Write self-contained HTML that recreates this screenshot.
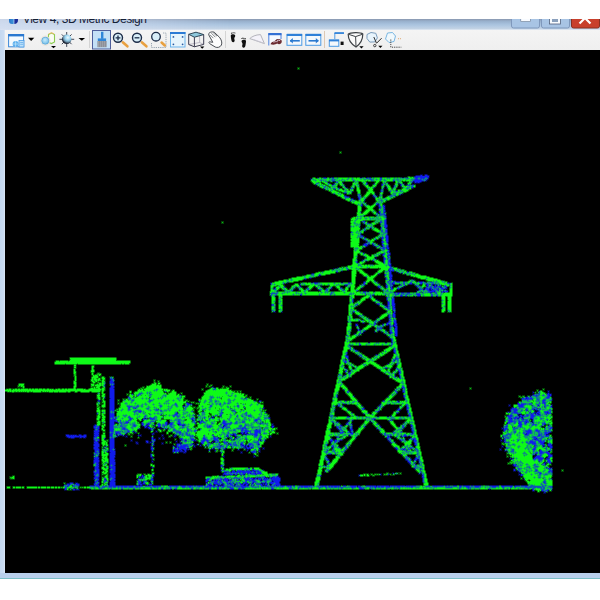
<!DOCTYPE html>
<html><head><meta charset="utf-8">
<style>
*{margin:0;padding:0;box-sizing:border-box}
html,body{width:600px;height:600px;overflow:hidden;background:#fff;font-family:"Liberation Sans",sans-serif}
#title{position:absolute;left:0;top:18.5px;width:600px;height:11.5px;background:linear-gradient(90deg,rgba(214,224,242,.85) 0,rgba(214,224,242,.55) 120px,rgba(214,224,242,0) 230px),linear-gradient(#8a98b0,#98b0cc 20%,#a6c0dc 45%,#b2c9e2 65%,#c2d2e4 88%,#e4ecf6);overflow:hidden}
#title .t{position:absolute;left:22.8px;top:-5.1px;font-size:12px;letter-spacing:-0.45px;line-height:13px;color:#142036;white-space:nowrap}
#ticon{position:absolute;left:8.5px;top:18.5px;width:9px;height:5.2px;background:linear-gradient(90deg,#2a78c8 0,#3a90d8 45%,#a8c8ec 55%,#1a2c98 65%,#1a2c98 100%);border-radius:0 0 4px 3px}
#tb{position:absolute;left:0;top:30px;width:600px;height:20px;background:linear-gradient(#f4f4f4,#efefef)}
#tbl{position:absolute;left:5px;top:49px;width:595px;height:1px;background:#e4e4e4}
#lb{position:absolute;left:0;top:30px;width:5px;height:548px;background:linear-gradient(90deg,#c4d8f0,#cadcf2 70%,#dce8f6)}
#vp{position:absolute;left:5px;top:50px;width:595px;height:523px;background:#000}
#bb{position:absolute;left:0;top:573px;width:600px;height:5px;background:#b9d0ec}
#bl{position:absolute;left:0;top:578px;width:600px;height:1px;background:#7cc0c8}
#wh{position:absolute;left:0;top:0;width:600px;height:18.5px;background:#fff}
</style></head><body>
<div id="title"><span class="t">View 4, 3D Metric Design</span></div>
<div id="ticon"></div>
<div id="tb"></div>
<div id="lb"></div>
<div id="vp"></div>
<div id="bb"></div><div id="bl"></div>
<svg width="600" height="52" style="position:absolute;left:0;top:0">
<!-- separators -->
<g stroke-width="1">
<line x1="89.5" y1="31" x2="89.5" y2="48" stroke="#d4d4d4"/>
<line x1="225.5" y1="31" x2="225.5" y2="48" stroke="#d4d4d4"/>
<line x1="324.5" y1="31" x2="324.5" y2="48" stroke="#dcc8b4"/>
</g>
<!-- 1 window+globe -->
<g>
<rect x="8.6" y="34.5" width="15" height="12.3" fill="#f4faff" stroke="#3c88d8" stroke-width="1"/>
<rect x="8.1" y="34" width="16" height="2.4" fill="#2a78d0"/>
<rect x="19" y="40.5" width="5" height="6.5" fill="#bfe2fa" stroke="#4a9ce6" stroke-width=".8"/>
<path d="M20.2 42.5h3M20.2 44.3h3" stroke="#4a9ce6" stroke-width=".6"/>
<circle cx="15.6" cy="44" r="3" fill="#5eb0ee"/>
<path d="M13.2 44h4.8M15.6 41.2v5.6" stroke="#d4eefc" stroke-width=".6"/>
</g>
<path d="M28 37.8h6.3l-3.15 3.2z" fill="#000"/>
<!-- 3 spheres -->
<defs>
<radialGradient id="sg" cx="0.62" cy="0.32" r="0.72"><stop offset="0" stop-color="#eefaff"/><stop offset="0.4" stop-color="#9ad4f0"/><stop offset="0.65" stop-color="#6a90a8"/><stop offset="0.85" stop-color="#202838"/></radialGradient>
<radialGradient id="bg2" cx="0.45" cy="0.4" r="0.6"><stop offset="0" stop-color="#c8ecfc"/><stop offset="1" stop-color="#70bce8"/></radialGradient>
</defs>
<path d="M48.5 34.4l3-1.4 3 1.6v7.4l-3 1.6-3-1.4z" fill="#fafcf4" stroke="#8ccc50" stroke-width="1.1"/>
<path d="M48.6 34l3-1.3 2.6 1.3" stroke="#f0b868" stroke-width="1" fill="none"/>
<circle cx="45.3" cy="40.7" r="4.6" fill="#fdfdfd" stroke="#e8dccc" stroke-width=".8"/>
<circle cx="45.3" cy="40.7" r="3.6" fill="url(#bg2)" stroke="#5aa0d0" stroke-width=".7"/>
<path d="M51 46h5l-2.5 2.3z" fill="#000"/>
<!-- 4 sun -->
<path d="M66.7 32v3.2M66.7 43.3v3.6M59.4 39.3h3.4M70.6 39.3h3.6M61.8 34.4l2 2M69.6 42.2l2 2M71.6 34.4l-2 2M63.8 42.2l-2 2" stroke="#404858" stroke-width="1"/>
<circle cx="66.7" cy="39.3" r="4.8" fill="url(#sg)"/>
<path d="M78.5 38h6.6l-3.3 2.7z" fill="#000"/>
<!-- brush button -->
<rect x="92.5" y="30.5" width="18" height="18.5" fill="#c4e0f6" stroke="#4e5e9a"/>
<rect x="101" y="31.8" width="2.4" height="7" fill="#2f86d8"/>
<path d="M97.8 38.4h8.3v2.6h-8.3z" fill="#2f86d8"/>
<path d="M97.4 41h9.2v6.2h-9.2z" fill="#8e9098"/>
<path d="M98.5 41v6M100.5 41v6M102.5 41v6M104.5 41v6" stroke="#a8acb4" stroke-width=".6"/>
<!-- zoom in -->
<path d="M122.8 42.3l4.6 4" stroke="#e8a040" stroke-width="2.6" stroke-linecap="round"/>
<circle cx="118" cy="37.8" r="4.5" fill="#d8eef8" stroke="#1c2c48" stroke-width="1.4"/>
<path d="M115.6 37.8h4.8M118 35.4v4.8" stroke="#1c2c48" stroke-width="1.3"/>
<!-- zoom out -->
<path d="M141.8 42.3l4.6 4" stroke="#e8a040" stroke-width="2.6" stroke-linecap="round"/>
<circle cx="137" cy="37.8" r="4.5" fill="#d8eef8" stroke="#1c2c48" stroke-width="1.4"/>
<path d="M134.6 37.8h4.8" stroke="#1c2c48" stroke-width="1.3"/>
<!-- zoom window -->
<path d="M151.5 43v4.5h14.5v-14.5h-3" fill="none" stroke="#8090a0" stroke-width=".8" stroke-dasharray="1.2 1"/>
<path d="M161.6 42.6l3.2 2.8" stroke="#e8a040" stroke-width="2.6" stroke-linecap="round"/>
<circle cx="156" cy="36.7" r="4.3" fill="#d8eef8" stroke="#1c2c48" stroke-width="1.3"/>
<!-- fit view -->
<rect x="170.5" y="32.5" width="14.5" height="14.5" fill="#e6f4fc" stroke="#6cb4ec"/>
<rect x="170" y="32" width="15.5" height="2" fill="#2b7ad4"/>
<g fill="#2a5aa0"><circle cx="173.4" cy="36.9" r=".9"/><circle cx="182.6" cy="36.9" r=".9"/><circle cx="173.4" cy="44.3" r=".9"/><circle cx="182.6" cy="44.3" r=".9"/></g>
<!-- cube -->
<path d="M199.6 32.3v10.2l-10.9 2M199.6 42.5l4.1 1.9" fill="none" stroke="#a8a4b4" stroke-width=".7"/>
<path d="M188.7 34.3L196 32.2L203.7 34.6L194.4 37.2z" fill="#8ec8dc" stroke="#304858" stroke-width="1"/>
<path d="M188.7 34.3v10.2l5.7 2.3l9.3-2.4v-9.8M194.4 37.2v9.6" fill="none" stroke="#3c3c50" stroke-width="1"/>
<path d="M200 46.6h4.4l-2.2 2.2z" fill="#000"/>
<!-- hand -->
<path d="M208.6 34.6C208.4 32.6 211.5 31.3 214.2 32.2L219.4 37.2C221.4 39.6 222.4 42.6 221.4 45C220.2 47.4 217.2 48 215.2 47L210 43.8C208.4 42.8 208.6 41.6 210.2 41.9L212.8 42.3z" fill="#fdfdfd" stroke="#4a4e54" stroke-width="1"/>
<path d="M209.8 34.6l3.6 3.6M211.4 33.2l4 4M213.2 32.6l3.8 3.6" stroke="#606468" stroke-width=".8"/>
<!-- footprints -->
<g fill="#101010">
<path id="ft" d="M230.8 35.6C230.8 34.6 232.4 34.2 234 34.4C235.3 34.6 235.4 35.6 235.1 36.4C234.5 37.3 234.1 38.1 234.4 39.3C234.9 40.6 234.8 42 233.4 42.2C232 42.3 231.6 41.1 231.3 39.7C231 38.4 230.8 36.7 230.8 35.6z"/>
<g fill="#505050"><circle cx="231.6" cy="33.3" r=".7"/><circle cx="232.9" cy="32.8" r=".65"/><circle cx="234" cy="32.7" r=".6"/><circle cx="235" cy="33" r=".55"/></g>
<g transform="translate(476.8 5.5) scale(-1 1)">
<path d="M230.8 35.6C230.8 34.6 232.4 34.2 234 34.4C235.3 34.6 235.4 35.6 235.1 36.4C234.5 37.3 234.1 38.1 234.4 39.3C234.9 40.6 234.8 42 233.4 42.2C232 42.3 231.6 41.1 231.3 39.7C231 38.4 230.8 36.7 230.8 35.6z"/>
<g fill="#303030"><circle cx="231.6" cy="33.3" r=".7"/><circle cx="232.9" cy="32.8" r=".65"/><circle cx="234" cy="32.7" r=".6"/><circle cx="235" cy="33" r=".55"/></g>
</g>
</g>
<!-- paper plane -->
<path d="M249.8 38.6C252 36.5 255.5 34.8 260.5 34.6L264.4 43.6z" fill="#f4f2fa" stroke="#b4b4bc" stroke-width="1"/>
<path d="M252.6 39.2L264 43.2" stroke="#c8c8d0" stroke-width=".8"/>
<!-- window + car -->
<path d="M268.8 45.5v-11.5h12.2v5" fill="#f6f9ff" stroke="#5a8ae0" stroke-width="1.1"/>
<rect x="268.3" y="33" width="13.2" height="2.2" fill="#3470d4"/>
<path d="M270.5 44.2c.6-1.8 2-2.6 3.6-2.6l2.2-2.2c1.6-.6 3.6-.3 5 .6c.8.9.6 2.6-.4 3.6c-1.3.9-2.8.6-3.6 0c-1.8 1-4.2 1.4-6.8.6z" fill="#6a2a30"/>
<path d="M273.5 42.3c1.2-.6 2.8-.9 4.2-.6M277 40.4c1-.3 2.2-.2 3.2.3" stroke="#f0e8f4" stroke-width=".8" fill="none"/>
<!-- left arrow window -->
<rect x="287" y="34.5" width="14.8" height="10.8" fill="#f4f8fc" stroke="#4c9ae4" stroke-width="1"/>
<rect x="286.8" y="33.8" width="15.3" height="2.2" fill="#2f80d8"/>
<path d="M290 40.8h9.8" stroke="#2a7ad0" stroke-width="1.6"/>
<path d="M289.8 40.8l3-2.8v5.6z" fill="#2a7ad0"/>
<!-- right arrow window -->
<rect x="305.8" y="34.5" width="15" height="10.8" fill="#f4f8fc" stroke="#4c9ae4" stroke-width="1"/>
<rect x="305.5" y="33.8" width="15.6" height="2.2" fill="#2f80d8"/>
<path d="M308.5 40.8h9.8" stroke="#2a7ad0" stroke-width="1.6"/>
<path d="M318.8 40.8l-3-2.8v5.6z" fill="#2a7ad0"/>
<!-- two windows -->
<path d="M334.8 39v-6h9" fill="none" stroke="#4c9ae4" stroke-width="1"/>
<rect x="334.5" y="32.3" width="9.5" height="1.6" fill="#2f80d8"/>
<rect x="329.3" y="40" width="9.5" height="6.3" fill="#f4f8fc" stroke="#4c9ae4"/>
<rect x="329" y="39.6" width="10" height="1.8" fill="#2f80d8"/>
<rect x="340.6" y="41.6" width="3" height="3.4" fill="#101010"/>
<!-- cone/shield -->
<path d="M348.2 34.2C350.5 32.3 360.5 32 362.8 34C362.8 39.5 359.5 44.5 356 47C352 44.5 348.2 39.5 348.2 34.2z" fill="#fbfbfb" stroke="#3e4246" stroke-width="1.2"/>
<path d="M355.6 36.6L356 46.6M355.6 36.6L348.8 34.4M355.6 36.6L362.4 34.3" stroke="#3e4246" stroke-width="1"/>
<path d="M359.3 46.2h4.3l-2.15 2.2z" fill="#000"/>
<!-- hex + scissors -->
<path d="M367 34.5l4-2 4.8.8 1.6 4.6-2.6 4-5 .2-2.8-3.6z" fill="#e8f4fc" stroke="#7a9cbc" stroke-width="1"/>
<path d="M373.8 37l2.6 6M381.6 38.2l-5.2 5.2" stroke="#2c2c2c" stroke-width="1"/>
<circle cx="374.8" cy="45.6" r="1.2" fill="none" stroke="#2c2c2c" stroke-width=".9"/>
<path d="M378.3 45.8h4.2l-2.1 2.1z" fill="#000"/>
<!-- hex dotted -->
<path d="M387.5 33l5-0.5 3 3.5-1.5 5.5-5 1-3.5-3.5z" fill="#f0f8fc" stroke="#6cb0e0" stroke-width=".9"/>
<path d="M390.8 39.5v7.7h10.5" fill="none" stroke="#404040" stroke-width="1" stroke-dasharray="1.2 1"/>
<circle cx="398.5" cy="38.7" r=".6" fill="#e0b080"/><circle cx="400.5" cy="38.7" r=".6" fill="#e0b080"/>
<!-- window buttons -->
<rect x="511.5" y="15.5" width="28" height="12.5" rx="2" fill="#a8c4e4" stroke="#7f98bc"/>
<rect x="520.8" y="17" width="9.5" height="4.5" fill="#f8fbff" stroke="#6a7a90" stroke-width=".6"/>
<rect x="541.5" y="15.5" width="28" height="12.5" rx="2" fill="#a8c4e4" stroke="#7f98bc"/>
<rect x="549.5" y="16" width="11" height="8" fill="#f8fbff" stroke="#50607a" stroke-width=".8"/>
<rect x="552" y="19" width="6" height="3" fill="#8aa0bc"/>
<rect x="571.5" y="15.5" width="28" height="12.5" rx="2" fill="#c8402c" stroke="#8a3020"/>
<path d="M579.5 12.5l11 11M590.5 12.5l-11 11" stroke="#fff" stroke-width="2.2" fill="none"/>
</svg>

<div id="wh"></div>
<svg width="600" height="600" style="position:absolute;left:0;top:0" shape-rendering="crispEdges"><g transform="translate(0 .5)" stroke-width="1" fill="none"><path stroke="#04073b" d="M0 0m420 174h3m1 0h1m2 0h1m-13 1h1m7 0h1m5 0h1m-1 1h1m-113 1h2m7 0h1m3 0h1m29 0h2m4 0h1m35 0h2m25 0h1m-120 1h2m-2 1h1m117 0h1m-2 1h1m-34 1h1m30 0h2m-99 1h2m13 0h1m23 0h1m20 0h1m24 0h1m7 0h1m-89 1h1m9 0h1m29 0h1m7 0h1m6 0h1m14 0h2m7 0h1m1 0h6m-88 1h1m66 0h1m4 0h1m1 0h1m-92 1h2m28 0h1m47 0h1m-49 1h1m39 0h1m7 0h1m6 0h1m-63 1h2m6 0h2m36 0h1m1 0h1m5 0h1m-19 1h1m9 0h1m1 0h1m26 0h1m-91 1h2m55 0h1m-29 3h1m36 0h1m-15 1h1m-43 1h2m40 0h1m25 0h2m-57 1h1m25 0h1m3 0h2m21 0h2m-52 1h1m7 0h1m14 0h1m4 0h1m-21 1h1m15 0h1m9 0h2m-32 1h1m20 0h1m-21 1h2m9 0h1m-1 1h1m17 4h2m-9 1h2m7 0h1m-24 1h1m22 0h1m-8 1h1m6 0h1m-8 1h1m6 0h1m-1 1h1m-8 2h1m-18 1h1m15 0h2m7 2h1m-1 1h1m-26 7h1m6 0h1m10 1h1m-17 1h2m22 0h1m-28 2h1m3 1h1m15 0h1m6 0h1m-18 1h1m16 0h1m-27 1h1m2 2h2m-16 1h1m27 1h1m-18 1h1m1 1h1m24 0h1m-23 2h1m-7 1h1m2 2h2m10 0h2m4 0h1m-17 1h1m-1 1h2m21 0h1m-26 1h1m17 0h1m6 0h1m-27 1h1m15 0h2m1 0h1m-14 1h1m3 0h1m8 0h1m-15 1h1m5 0h2m0 1h1m13 0h1m-27 1h1m25 0h1m-11 1h1m9 0h1m-29 2h1m1 1h2m25 0h1m-10 2h1m8 1h1m-9 1h1m-19 1h1m10 0h2m-2 1h2m-20 1h1m4 0h2m-3 1h1m4 1h1m5 0h2m-16 1h1m32 1h1m-1 1h1m-1 1h1m-55 2h2m-6 1h2m12 2h2m-8 1h2m65 0h1m-73 1h1m59 0h2m-87 1h1m86 0h2m1 0h1m-24 1h2m12 0h1m12 0h1m-88 2h2m45 1h1m26 0h1m-84 1h1m1 0h1m80 0h1m-89 1h1m1 0h1m85 0h1m20 0h2m-40 1h1m17 0h3m-33 1h1m53 0h1m6 0h2m-156 1h2m39 0h2m28 0h2m35 0h1m70 0h2m-165 1h2m11 0h1m85 0h1m-116 1h1m13 0h1m14 0h1m85 0h1m26 0h2m-70 1h1m20 0h1m19 0h1m7 0h1m39 0h1m-149 1h1m15 0h1m19 0h1m63 0h1m7 0h1m10 0h2m9 0h1m-142 1h1m31 0h1m25 0h1m9 0h1m34 0h1m7 0h1m16 0h2m12 0h1m30 0h1m-151 1h1m18 0h1m8 0h1m6 0h1m28 0h2m15 0h2m20 0h2m22 0h1m22 0h1m-154 1h1m3 0h1m31 0h2m65 0h1m1 0h1m18 0h1m27 0h2m-155 1h1m4 0h1m19 0h1m97 0h2m30 0h1m-82 1h2m5 0h1m41 0h1m31 0h1m-149 4h1m-31 1h1m4 0h1m138 0h1m5 0h1m15 0h1m-43 1h1m-26 1h1m6 1h2m0 1h2m6 0h1m-34 2h1m20 0h1m20 1h1m-20 1h1m6 0h2m10 0h1m-18 1h1m6 0h2m8 0h1m-1 1h1m-1 1h1m45 1h1m-85 2h2m-84 1h1m6 0h1m-10 1h3m5 0h2m112 1h1m-33 1h1m-6 2h1m18 1h2m-10 1h1m18 0h1m-27 1h1m12 0h1m12 0h1m-9 1h1m7 0h1m-42 1h1m11 0h1m19 0h2m-30 1h1m26 0h1m7 0h1m-32 1h3m4 0h3m17 0h2m13 0h1m-40 1h1m38 0h1m-40 1h1m29 0h1m8 0h1m-43 1h1m3 0h1m-1 1h1m34 0h1m-35 2h2m-5 1h1m28 0h1m-22 1h1m8 0h1m3 0h1m-16 1h1m10 0h2m5 0h2m6 0h1m-36 1h2m6 0h2m20 1h2m9 2h1m1 0h1m-10 1h1m1 2h1m-23 3h2m15 0h2m-27 3h1m-7 3h1m0 1h2m-8 1h1m8 0h1m34 2h1m-47 2h1m27 0h1m1 0h1m-30 1h1m9 1h1m-10 3h1m-1 2h1m37 2h2m7 2h1m-52 2h1m7 0h1m41 0h1m-50 1h2m47 0h1m-17 2h1m-36 1h1m4 0h1m-6 1h1m53 0h1m-1 1h1m-55 1h2m49 0h1m2 0h1m-4 1h1m-8 1h1m-280 2h1m4 0h1m-6 1h1m4 0h1m-6 1h1m4 1h1m-1 1h1m227 0h1m-238 2h1m-1 1h1m8 0h1m-10 1h1m106 0h2m-105 1h1m104 0h2m-102 1h1m228 2h1m5 0h1m189 0h1m7 0h3m-18 1h2m13 0h1m1 0h1m-148 1h1m129 0h1m14 0h1m1 0h1m-418 1h1m264 0h1m134 0h2m16 0h2m-372 1h1m351 0h1m-180 1h2m175 0h2m-405 1h1m226 0h1m32 0h1m137 0h2m24 0h1m-447 1h1m21 0h1m209 0h1m65 0h1m-299 1h1m3 0h1m442 0h1m-149 1h1m147 0h1m-456 1h1m2 0h1m153 0h2m5 0h1m83 0h2m11 0h1m23 0h1m14 0h2m153 0h1m-453 1h1m97 0h1m59 0h1m99 0h1m158 1h1m-328 1h1m189 0h1m-189 1h1m150 0h4m32 0h1m9 0h1m118 0h3m40 0h2m-370 1h2m152 0h1m5 0h1m18 0h1m15 0h1m129 0h1m1 0h1m41 0h1m-216 1h1m170 0h3m41 0h1m-289 1h1m99 0h1m11 0h1m6 0h1m14 0h1m112 0h1m40 0h1m-289 1h1m111 0h1m20 0h1m112 0h1m-176 1h1m12 0h1m47 0h1m-62 1h1m64 0h1m5 0h1m128 0h1m-157 1h1m127 0h3m25 0h2m-271 1h1m85 0h1m15 0h1m9 0h1m-283 1h1m301 0h1m-303 1h1m266 0h2m154 0h1m-164 1h2m32 0h1m-42 1h1m27 0h2m8 0h2m-119 1h1m-1 1h1m-129 1h1m361 0h1m26 0h1m-390 1h1m210 0h1m150 0h1m-363 1h1m24 0h1m30 0h1m138 0h2m8 0h1m4 0h1m17 0h1m17 0h1m142 0h1m-417 1h2m52 0h1m176 0h1m23 0h2m31 0h1m-236 1h1m103 0h2m59 0h1m11 0h1m6 0h1m25 0h1m-285 1h1m178 0h1m59 0h1m7 0h1m3 0h1m6 0h1m-260 1h1m47 0h1m132 0h1m67 0h1m37 0h1m-239 1h2m130 0h1m84 0h1m5 0h1m15 0h1m16 0h2m10 0h1m131 0h1m-386 1h1m2 0h1m204 0h1m15 0h1m28 0h1m90 0h2m41 0h1m-452 1h1m50 0h4m11 0h4m173 0h1m12 0h1m54 0h1m5 0h1m90 0h1m-403 1h1m38 0h2m8 0h2m4 0h1m11 0h1m32 0h1m137 0h1m11 0h1m3 0h1m22 0h2m16 0h1m106 0h2m-410 1h1m56 0h1m4 0h2m181 0h1m9 0h2m3 0h1m24 0h1m-286 1h1m61 0h1m1 0h1m234 0h1m18 0h1m-319 1h1m5 0h1m34 0h1m18 0h5m13 0h1m239 0h1m139 0h1m-459 1h1m5 0h1m34 0h3m14 0h1m2 0h1m83 0h1m1 0h1m308 0h1m-485 1h1m3 0h8m1 0h1m2 0h1m1 0h1m2 0h1m6 0h1m5 0h1m25 0h2m12 0h3m9 0h1m2 0h1m6 0h3m217 0h1m-317 1h1m27 0h1m5 0h1m24 0h4m9 0h1m3 0h1m11 0h1m7 0h1m1 0h1m9 0h1m59 0h1m-169 1h1m27 0h1m5 0h1m18 0h2m2 0h4m1 0h1m11 0h3m19 0h3m9 0h1m2 0h1m57 0h1m34 0h1m1 0h1m77 0h2m39 0h2m16 0h2m-344 1h1m19 0h1m29 0h2m7 0h3m30 0h3m1 0h3m8 0h3m59 0h1m33 0h3m84 0h1m34 0h1m18 0h1m-343 1h3m3 0h1m4 0h3m1 0h3m19 0h1m48 0h2m2 0h1m1 0h1m1 0h1m1 0h1m55 0h1m111 0h1m23 0h1m29 0h1m4 0h1m13 0h1m2 0h2m-305 1h1m24 0h3m25 0h3m1 0h3m14 0h1m153 0h2m70 0h1m2 0h1m91 0h2m1 0h1m-411 1h1m36 0h1m1 0h1m12 0h1m2 0h1m27 0h2m1 0h2m84 0h1m76 0h1m44 0h1m11 0h1m100 0h1m1 0h2m-411 1h1m5 0h1m30 0h3m2 0h3m7 0h1m3 0h2m4 0h1m19 0h1m1 0h1m1 0h1m14 0h3m15 0h3m50 0h1m63 0h1m58 0h1m5 0h2m4 0h1m99 0h4m-411 1h1m41 0h1m2 0h1m6 0h1m3 0h1m4 0h1m6 0h3m11 0h3m1 0h1m31 0h1m1 0h1m116 0h1m7 0h2m49 0h1m5 0h1m17 0h1m-321 1h1m5 0h1m35 0h1m2 0h1m7 0h5m3 0h1m6 0h1m1 0h1m12 0h1m16 0h2m1 0h2m2 0h1m129 0h1m59 0h1m153 0h1m2 0h1m-412 1h3m15 0h1m6 0h3m30 0h1m1 0h1m3 0h2m350 0h1m-403 1h1m3 0h1m17 0h2m21 0h3m1 0h1m1 0h1m125 0h1m16 0h1m69 0h1m86 0h2m49 0h1m-460 1h1m56 0h1m2 0h1m18 0h1m2 0h1m17 0h1m1 0h1m3 0h3m46 0h1m90 0h1m73 0h1m87 0h1m1 0h1m-405 1h1m50 0h1m42 0h3m66 0h3m75 0h2m159 0h3m1 0h1m-407 1h1m15 0h1m34 0h1m75 0h1m33 0h1m1 0h1m1 0h1m129 0h1m104 0h3m50 0h1m-460 1h1m21 0h1m34 0h1m57 0h1m2 0h4m4 0h1m5 0h1m11 0h1m1 0h1m6 0h1m2 0h1m10 0h1m1 0h3m82 0h1m47 0h1m103 0h1m1 0h1m-387 1h1m67 0h1m3 0h2m21 0h1m3 0h1m22 0h3m6 0h1m1 0h1m11 0h1m135 0h1m102 0h3m2 0h1m-397 1h1m105 0h1m25 0h3m3 0h2m12 0h1m84 0h1m158 0h3m42 0h1m-441 1h1m62 0h1m6 0h4m3 0h1m33 0h1m19 0h1m1 0h1m16 0h2m-111 1h2m23 0h2m6 0h3m34 0h1m19 0h3m9 0h1m-160 1h1m5 0h1m231 0h1m203 0h1m16 0h1m-460 1h1m5 0h1m15 0h1m108 0h1m28 0h2m146 0h1m131 0h3m-421 1h1m108 0h1m28 0h1m1 0h1m71 0h1m80 0h2m124 0h1m-442 1h1m5 0h1m15 0h1m34 0h1m2 0h1m69 0h2m28 0h3m71 0h1m205 0h1m12 0h1m-454 1h1m5 0h1m51 0h1m176 0h1m82 0h1m2 0h1m94 0h1m1 0h1m33 0h1m-453 1h1m5 0h1m15 0h1m35 0h1m177 0h1m83 0h1m95 0h2m-396 1h1m35 0h2m176 0h1m75 0h1m7 0h1m3 0h1m-303 1h1m35 0h1m1 0h1m70 0h1m193 0h1m-320 1h1m51 0h3m253 0h1m10 0h1m-320 1h1m308 0h1m9 0h1m132 0h1m-453 1h1m309 0h1m102 0h1m-414 1h1m15 0h1m209 0h1m186 0h1m-414 1h1m413 0h1m-415 1h1m51 0h1m72 0h1m23 0h2m300 0h3m-454 1h1m9 0h1m303 0h1m99 0h2m37 0h1m-333 1h1m41 0h2m150 0h1m-322 1h1m126 0h1m-1 1h1m103 0h1m4 0h1m183 0h3m1 0h1m-403 1h1m208 0h2m66 0h2m124 0h1m-426 1h1m15 0h1m5 0h1m106 0h1m157 0h2m10 0h1m25 0h1m99 0h3m-428 1h1m15 0h1m32 0h1m11 0h1m67 0h1m135 0h2m21 0h1m36 0h4m96 0h1m-426 1h1m60 0h1m64 0h2m3 0h1m53 0h1m42 0h1m36 0h1m21 0h2m6 0h1m32 0h1m96 0h2m-366 1h1m124 0h1m41 0h1m36 0h2m61 0h1m98 0h2m-429 1h1m5 0h1m180 0h1m140 0h1m-329 1h1m5 0h1m15 0h1m37 0h1m369 0h1m28 0h1m-460 1h1m5 0h1m105 0h1m317 0h1m28 0h1m-454 1h1m9 0h1m-11 1h1m9 0h1m5 0h1m164 0h1m-212 1h1m3 0h1m1 0h3m64 0h1m7 0h1m54 0h1m216 0h1m-357 1h1m7 0h1m4 0h1m13 0h1m14 0h1m96 0h1m74 0h1m-188 1h1m5 0h1m8 0h1m161 0h1m-208 1h1m25 0h1m78 0h1m144 0h1m26 0h1m16 0h1m2 0h1m15 0h1m12 0h1m15 0h1m108 0h1m-436 4h1m9 0h2m80 0h1m2 0h1m195 0h1m117 0h1m1 0h1m61 0h1m-489 1h3m5 0h1m2 0h5m472 0h1m-21 1h3m6 0h1m6 0h1m-6 1h1m-1 1h3"/><path stroke="#080e76" d="M0 0m425 174h2m-11 1h4m2 0h1m1 0h1m3 0h1m-15 1h1m-92 1h3m6 0h2m33 0h1m1 0h2m9 0h2m46 1h1m-2 1h1m-2 1h1m-94 1h2m58 0h1m19 0h1m8 0h2m-12 1h1m1 0h1m5 0h1m-54 1h1m-35 1h1m47 0h1m18 0h1m11 0h2m-33 1h1m18 0h1m11 3h1m-33 2h1m15 0h1m-17 1h1m-37 2h2m-1 2h1m1 1h2m24 0h1m0 1h1m-24 1h2m5 0h1m-1 1h1m3 5h1m14 0h2m-17 1h1m15 0h1m5 0h1m-7 1h1m6 4h1m-1 1h1m-7 2h1m6 3h1m-1 1h1m-1 2h1m-1 1h1m-1 1h1m-1 1h1m-1 1h1m0 2h1m-1 1h1m-8 2h1m5 0h1m0 1h1m-1 1h1m-1 1h1m-1 1h1m-1 2h1m-26 1h1m25 1h1m-24 1h1m22 0h1m-8 1h1m6 0h1m-8 1h1m6 0h1m-1 1h1m-23 1h1m14 0h1m6 0h1m-8 1h1m-18 1h1m-2 1h1m4 0h2m2 0h1m-6 1h1m5 0h1m14 0h1m-23 1h1m15 0h1m5 0h1m-1 3h1m0 1h1m-1 1h1m-1 1h1m0 1h1m-9 1h1m7 0h1m-9 1h1m0 2h1m-1 1h1m-1 1h1m6 0h1m-29 1h1m20 0h1m6 0h1m-34 1h1m25 0h1m6 0h1m-34 1h1m25 0h1m6 0h1m0 4h1m-1 5h3m13 0h1m-71 1h1m53 0h1m-80 1h2m77 0h1m-8 1h1m-66 1h2m63 0h1m7 0h1m-1 1h1m-83 2h1m74 0h1m-81 1h1m79 0h1m-22 2h1m31 0h4m3 0h2m14 0h4m-109 1h4m30 0h2m13 0h1m84 0h1m-179 1h1m122 1h2m14 0h3m8 0h2m11 0h1m-134 1h1m44 0h2m79 0h1m7 0h1m1 0h1m-137 1h1m91 0h1m23 0h1m-76 1h1m36 0h1m13 0h1m-119 1h1m56 0h1m66 1h1m24 0h2m4 0h2m13 0h1m-126 1h1m110 0h1m16 0h1m-85 1h3m28 1h2m1 0h3m1 0h3m3 0h3m-109 3h1m71 0h1m26 1h3m2 0h2m10 0h3m11 0h2m4 0h1m-52 1h1m-1 1h1m7 0h1m-42 1h1m32 0h1m7 0h1m-42 1h1m40 0h1m-42 1h1m33 0h1m6 0h1m-8 1h1m6 0h1m-8 1h1m-117 1h1m105 0h1m9 0h1m-117 1h1m115 0h1m-2 1h2m7 2h1m-1 1h1m-3 2h1m1 0h1m-43 1h1m39 0h1m1 0h1m-1 2h1m-8 1h1m6 0h1m-8 1h1m6 0h1m-8 1h1m6 0h1m0 3h1m-9 1h1m7 0h1m-10 1h1m8 0h1m-11 1h1m-32 1h1m1 0h1m24 0h1m5 0h1m-34 1h1m30 0h2m1 0h1m3 0h1m-5 1h1m3 0h2m2 0h1m-9 1h1m7 0h1m-9 1h1m7 0h1m-41 1h1m1 0h1m37 0h1m-9 1h1m7 0h1m-34 1h1m24 0h1m7 0h1m-1 1h1m-9 1h1m7 0h1m-1 1h1m-1 1h1m-2 1h1m-6 4h1m-1 1h1m-1 1h1m-33 3h1m33 4h1m-37 1h1m35 0h1m-1 1h1m-47 1h1m-1 1h1m28 1h1m-30 1h1m0 1h1m-1 1h1m-1 1h1m0 2h1m46 4h1m-11 4h1m11 3h1m0 4h1m-5 1h1m3 0h1m-1 1h1m-291 4h1m-1 1h1m-1 1h1m4 0h1m-1 1h1m-5 2h1m3 0h1m-1 1h1m-6 1h1m292 0h1m-294 1h1m4 0h1m-6 1h1m4 0h1m287 0h1m-294 1h1m4 0h1m287 0h1m-294 1h1m4 0h1m282 0h1m5 0h1m144 0h1m-440 1h1m4 0h1m432 0h1m1 0h1m-441 1h1m4 0h1m418 0h1m17 0h1m-443 1h1m4 0h1m222 0h1m65 0h1m147 0h1m-443 1h1m4 0h1m222 0h1m65 0h1m126 0h1m-422 1h1m4 0h1m-1 1h1m289 0h1m-296 1h1m4 0h1m406 0h1m-413 1h1m4 0h1m144 0h2m122 0h1m-275 1h1m4 0h1m283 0h1m-290 1h1m4 0h1m72 0h1m-79 1h1m4 0h1m74 0h1m327 0h1m-409 1h1m4 0h1m265 0h1m-272 1h1m4 0h1m264 0h1m-271 1h1m4 0h1m223 0h1m67 0h1m-298 1h1m4 0h1m291 0h1m105 0h1m-404 1h1m4 0h1m249 0h1m33 0h1m7 0h1m104 0h1m-403 1h1m4 0h1m282 0h1m8 0h1m103 0h1m23 0h1m-426 1h1m289 0h1m7 0h1m102 0h1m25 0h2m-429 1h1m268 0h1m28 0h1m102 0h1m26 0h1m-429 1h1m297 0h1m127 0h2m-428 1h1m4 0h1m282 0h1m137 0h1m-427 1h1m4 0h1m403 0h1m1 0h2m-413 1h1m4 0h1m293 0h1m98 0h1m10 0h2m2 0h2m-415 1h1m237 0h2m170 0h1m-411 1h1m102 0h2m55 0h1m252 0h1m-414 1h1m35 0h1m-37 1h1m264 0h2m156 0h1m-424 1h1m238 0h1m3 0h1m179 0h1m-424 1h1m89 0h1m148 0h1m183 0h1m-424 1h1m4 0h1m2 0h1m23 0h1m25 0h1m31 0h1m147 0h1m184 0h1m-424 1h1m4 0h1m26 0h1m25 0h1m1 0h1m176 0h1m160 0h1m-413 1h1m13 0h1m31 0h1m25 0h1m10 0h1m366 0h1m-452 1h1m14 0h1m32 0h1m129 0h2m67 0h1m68 0h1m137 0h1m-456 1h1m5 0h1m9 0h1m37 0h2m74 0h1m47 0h1m80 0h1m27 0h1m-288 1h1m5 0h1m9 0h1m34 0h1m1 0h2m10 0h2m113 0h1m62 0h1m15 0h1m199 0h1m-454 1h1m9 0h1m38 0h1m188 0h1m14 0h1m23 0h1m34 0h1m91 0h1m48 0h1m-459 1h1m14 0h1m40 0h1m187 0h1m72 0h1m91 0h1m-405 1h1m9 0h1m240 0h1m60 0h1m91 0h1m-405 1h1m9 0h1m23 0h1m215 0h2m-107 1h1m105 0h1m61 0h1m137 0h1m-442 1h1m16 0h1m25 0h1m88 0h1m1 0h2m2 0h1m300 0h1m-483 1h3m10 0h2m3 0h2m23 0h1m6 0h1m36 0h1m79 0h1m8 0h2m1 0h1m300 0h3m-472 1h2m3 0h1m3 0h1m22 0h1m7 0h1m1 0h4m16 0h1m34 0h1m1 0h1m55 0h1m1 0h1m114 0h1m-284 1h1m19 0h1m22 0h1m7 0h1m57 0h1m59 0h1m165 0h1m3 0h2m-340 1h1m7 0h5m2 0h1m2 0h1m7 0h1m57 0h1m1 0h1m182 0h1m53 0h1m-320 1h3m19 0h1m15 0h1m4 0h1m36 0h1m1 0h1m-61 1h1m5 0h1m9 0h1m4 0h1m36 0h1m3 0h1m176 0h1m2 0h1m51 0h1m-289 1h1m9 0h1m4 0h1m31 0h2m7 0h1m38 0h1m18 0h1m46 0h1m73 0h1m5 0h2m46 0h1m11 0h1m12 0h1m-316 1h1m10 0h1m4 0h1m33 0h1m2 0h1m178 0h1m8 0h1m49 0h1m23 0h1m-316 1h1m10 0h1m4 0h1m22 0h1m8 0h1m1 0h1m2 0h1m238 0h1m113 0h1m39 0h1m-436 1h1m4 0h1m21 0h1m40 0h5m19 0h1m212 0h1m-322 1h1m5 0h1m9 0h1m4 0h1m61 0h1m150 0h1m86 0h1m132 0h1m-455 1h1m5 0h1m9 0h1m4 0h1m61 0h1m17 0h1m50 0h1m2 0h1m166 0h1m-317 1h1m9 0h1m4 0h1m59 0h1m1 0h1m68 0h1m1 0h1m295 0h1m4 0h1m3 0h1m-460 1h1m4 0h1m10 0h1m4 0h1m60 0h2m68 0h1m86 0h1m219 0h1m-460 1h1m15 0h1m4 0h1m72 0h2m24 0h1m11 0h1m20 0h1m12 0h1m72 0h1m62 0h1m-297 1h1m9 0h1m62 0h1m9 0h1m4 0h1m36 0h1m22 0h2m147 0h1m-303 1h1m4 0h1m9 0h1m41 0h1m1 0h1m18 0h1m1 0h1m7 0h1m3 0h1m21 0h1m50 0h1m-166 1h1m4 0h1m9 0h1m5 0h1m56 0h1m6 0h1m3 0h2m1 0h1m361 0h1m-450 1h1m15 0h1m67 0h1m1 0h1m65 0h1m-143 1h1m5 0h1m-7 1h1m5 0h1m34 0h1m177 0h3m220 0h1m-443 1h1m40 0h1m385 0h1m15 0h1m-455 1h1m10 0h1m40 0h1m175 0h1m208 0h1m16 0h1m-444 1h1m41 0h2m262 0h1m118 0h1m12 0h1m-439 1h1m4 0h1m418 0h1m-425 1h1m218 0h1m76 0h1m5 0h1m2 0h1m2 0h2m-326 1h1m5 0h1m9 0h1m296 0h1m9 0h1m1 0h1m-326 1h1m5 0h1m9 0h1m297 0h1m-315 1h1m15 0h1m5 0h1m213 0h1m78 0h1m135 0h1m-452 1h1m15 0h1m5 0h1m293 0h1m135 0h1m-437 1h1m5 0h1m300 0h1m128 0h1m-437 1h1m110 0h1m292 0h1m-405 1h1m5 0h1m104 0h1m293 0h1m-421 1h1m14 0h1m5 0h1m-22 1h1m20 0h1m298 0h1m-321 1h1m4 0h1m9 0h1m5 0h1m397 0h1m1 0h1m-417 1h1m9 0h1m5 0h1m397 0h1m1 0h1m36 0h1m-460 1h1m5 0h1m9 0h1m5 0h1m115 0h1m3 0h1m282 0h1m33 0h1m-460 1h1m5 0h1m9 0h1m409 0h1m32 0h1m-454 1h1m123 0h1m196 0h1m-322 1h1m15 0h1m117 0h2m9 0h1m275 0h1m-422 1h1m9 0h1m5 0h1m27 0h1m78 0h2m296 0h1m-427 1h1m4 0h1m9 0h1m5 0h1m25 0h1m11 0h1m124 0h1m-170 1h1m5 0h1m24 0h1m124 0h1m13 0h1m-171 1h1m143 0h2m2 0h1m10 0h1m11 0h1m141 0h1m-329 1h1m20 0h1m21 0h1m15 0h1m107 0h1m18 0h1m141 0h1m-308 1h1m37 0h1m51 0h1m6 0h1m15 0h1m32 0h1m18 0h1m141 0h1m-329 1h1m3 0h1m106 0h1m66 0h1m149 0h1m-353 1h3m21 0h1m4 0h1m9 0h1m5 0h1m25 0h1m64 0h1m72 0h1m-213 1h3m5 0h1m2 0h1m20 0h1m9 0h1m5 0h1m25 0h2m7 0h1m110 0h2m1 0h1m-186 1h1m29 0h1m5 0h1m26 0h3m69 0h1m6 0h2m12 0h1m8 0h2m2 0h1m13 0h1m1 0h1m6 0h1m8 0h1m-202 1h1m10 0h4m5 0h1m16 0h18m1 0h2m2 0h1m2 0h1m2 0h2m1 0h1m3 0h9m8 0h10m1 0h6m1 0h6m1 0h2m1 0h6m1 0h1m9 0h1m3 0h1m1 0h3m11 0h1m9 0h1m3 0h1m14 0h1m6 0h1m10 0h4m1 0h6m1 0h2m4 0h13m8 0h7m1 0h12m3 0h3m4 0h7m1 0h2m6 0h10m1 0h12m1 0h15m1 0h10m13 0h1m2 0h12m1 0h2m1 0h2m3 0h4m2 0h3m1 0h7m1 0h2m1 0h7m8 0h10m2 0h12m2 0h5m1 0h7m-171 1h1m194 0h1m-1 1h1m-489 2h1m10 0h1m45 0h2m10 0h2m26 0h2m7 0h1m4 0h2m14 0h2m16 0h2m6 0h2m11 0h4m4 0h3m1 0h2m27 0h3m15 0h2m68 0h5m125 0h1m-417 1h2m457 0h1m15 0h1m-7 1h2m1 1h1"/><path stroke="#0c15b1" d="M0 0m420 175h1m6 0h1m-13 1h1m12 1h1m-15 4h1m6 0h1m-6 1h2m1 0h1m-74 14h1m11 1h1m20 10h1m4 0h1m-1 2h1m-6 3h1m4 0h1m0 3h1m0 9h1m-1 3h1m-26 8h1m25 0h1m-1 7h1m-23 1h1m16 2h1m5 2h1m1 18h1m-2 6h1m1 3h1m-1 3h1m-1 2h1m-29 4h1m28 0h1m-1 1h1m33 0h1m5 0h1m-47 2h1m40 0h1m6 0h1m1 0h1m3 0h1m-1 1h2m4 0h1m-55 1h1m32 0h1m3 0h2m14 0h2m-28 1h1m12 0h1m10 0h1m-15 1h1m1 0h1m2 1h1m8 0h1m-14 1h2m-38 11h1m-17 1h1m15 1h1m-8 2h1m6 0h1m-1 6h1m-7 9h1m-14 1h1m18 0h1m1 0h1m-3 1h1m1 1h1m-2 2h1m-6 5h1m-1 1h1m4 1h1m-5 5h1m-36 11h1m37 2h1m-49 3h1m47 5h1m-46 12h1m49 0h1m-290 7h1m-1 1h1m2 2h1m-1 3h1m-4 2h1m2 1h1m434 3h1m-16 1h1m15 2h1m-1 1h1m-24 2h1m-417 1h1m415 0h1m-429 2h1m0 1h1m88 2h1m217 2h1m102 0h1m28 0h1m-356 1h1m367 0h1m-289 2h1m274 3h1m-5 1h1m12 0h1m-371 1h1m359 0h2m-1 1h2m-32 1h1m11 1h1m1 0h1m-4 1h1m1 0h1m-378 1h1m366 0h1m5 0h2m3 0h1m7 0h2m-418 1h1m77 0h1m0 1h1m-80 1h2m410 1h1m-332 1h1m-49 1h1m31 0h1m92 0h1m271 0h1m-399 1h2m6 0h1m27 0h2m40 0h1m186 1h1m-318 2h1m55 0h1m351 0h1m-405 1h1m251 0h1m1 0h1m-259 1h1m61 1h1m255 0h1m-319 1h1m3 0h1m36 0h1m215 0h1m197 0h1m-434 1h1m36 0h1m92 0h1m165 0h1m113 0h1m-433 1h1m3 0h1m53 0h1m81 0h1m11 0h1m278 0h2m-458 1h2m1 0h1m1 0h1m1 0h1m4 0h1m1 0h1m54 0h1m1 0h1m21 0h1m12 0h1m370 0h1m-468 1h1m14 0h1m31 0h1m47 0h1m95 0h1m117 0h1m15 0h1m-337 1h1m1 0h1m3 0h1m6 0h1m1 0h1m75 1h1m3 0h1m223 0h1m148 0h1m-384 1h1m26 0h2m78 0h1m152 0h1m121 0h1m-442 1h1m36 0h1m53 0h1m9 0h1m18 0h1m286 0h1m2 0h1m-411 1h1m2 0h1m78 0h1m154 0h1m-196 1h1m13 0h1m29 0h1m31 0h1m201 0h1m-321 1h1m3 0h1m38 0h1m24 0h1m380 0h1m-364 1h1m12 0h1m47 0h1m16 0h1m-59 1h1m41 0h2m299 0h2m6 0h1m-458 1h1m56 0h1m42 0h1m49 0h1m257 0h1m46 0h1m-399 1h1m26 0h1m65 0h1m1 0h1m1 0h1m2 0h1m-154 1h1m120 0h1m25 0h1m3 0h1m13 0h1m-170 1h1m56 0h1m22 0h1m3 0h1m2 0h1m1 0h1m2 0h1m1 0h1m70 0h1m143 0h1m96 0h1m-387 1h1m60 0h1m3 0h2m3 0h1m30 0h1m31 0h1m-141 1h1m72 0h3m76 0h1m-150 1h1m73 0h1m56 0h1m10 0h1m283 1h1m13 1h1m-437 1h1m108 1h1m30 0h1m293 0h1m-451 1h1m15 0h1m37 1h1m262 0h1m94 0h1m35 0h3m-455 1h1m3 0h1m15 0h1m292 1h1m-294 1h1m37 0h1m-55 1h1m446 0h1m-448 1h1m414 1h1m-416 1h1m15 0h1m400 1h1m-418 1h1m53 0h1m-55 1h1m11 0h1m439 0h1m-299 2h2m-3 1h1m2 0h2m-142 1h1m109 0h3m4 0h1m-138 1h1m15 0h1m3 0h1m135 0h1m4 0h1m-146 1h1m112 0h2m18 0h1m144 0h1m130 0h1m-426 1h1m327 0h1m-280 1h1m133 0h1m-184 1h1m3 0h1m42 0h2m129 0h1m149 0h1m-325 1h1m15 0h1m141 0h1m7 0h1m1 0h1m4 0h1m-167 1h1m122 0h1m23 0h2m-156 1h1m116 0h1m44 0h1m11 0h1m-163 1h1m3 0h1m28 0h1m63 0h1m65 0h1m5 0h1m-137 1h1m109 0h1m11 0h1m-189 1h1m16 0h1m45 0h1m81 0h1m6 0h1m15 0h3m4 0h1m10 0h1m1 0h1m4 0h1m8 0h1m-211 1h1m28 0h1m40 0h1m69 0h1m5 0h1m1 0h1m5 0h1m17 0h2m20 0h1m-170 1h1m14 0h1m5 0h1m22 0h1m1 0h2m7 0h2m58 0h3m1 0h1m5 0h1m3 0h1m19 0h1m1 0h1m1 0h1m14 0h1m2 0h2m9 0h1m3 0h1m-63 1h1m157 0h1m12 0h1m-314 3h1m1 0h1m453 0h1m11 3h1"/><path stroke="#101cec" d="M0 0m421 175h1m3 0h2m-11 1h13m-14 1h3m2 0h5m2 0h1m-12 1h1m4 0h1m1 0h1m-9 1h3m2 0h1m-7 1h8m-7 1h6m-6 1h1m2 0h1m-37 2h1m29 3h1m-68 9h1m13 2h1m1 7h1m21 0h1m-5 1h1m3 0h2m-1 2h1m-1 2h1m-6 1h1m4 0h1m-1 3h1m0 6h1m-22 1h1m20 0h1m-6 1h1m4 0h1m-1 1h1m-1 1h1m-1 1h2m-2 1h2m-2 1h1m0 3h1m-1 1h1m-1 4h1m-25 1h1m23 0h2m-6 1h1m3 0h2m-6 1h1m3 0h2m-2 1h2m-2 1h2m-6 1h1m4 0h1m-6 1h1m-19 2h3m15 0h1m-18 1h2m20 1h1m-5 1h1m3 0h1m-5 1h1m3 0h2m-1 3h1m-6 3h1m5 0h1m-2 1h1m-1 2h1m-5 1h1m-1 1h1m4 1h1m-1 1h1m0 3h1m-2 1h1m0 1h1m-1 2h1m-2 1h1m-1 1h2m1 0h2m-4 1h1m-1 1h1m-1 1h1m-1 1h1m-1 1h2m-2 1h2m-2 1h1m-1 1h2m-2 1h1m-1 1h1m3 1h1m-31 1h1m28 0h1m26 0h2m-107 1h1m77 0h1m16 0h2m9 0h1m-58 1h1m62 0h1m-42 1h1m40 0h1m7 0h1m-58 1h1m56 0h1m3 0h1m5 0h1m-60 1h1m4 0h1m34 0h1m3 0h1m3 0h2m-45 1h1m6 0h1m20 0h1m6 0h2m3 0h1m9 0h2m-117 1h1m100 0h2m2 0h1m5 0h1m-10 1h1m3 0h3m-6 1h5m10 0h1m1 0h2m-50 2h1m18 1h3m-19 1h1m16 0h2m-27 3h1m-2 1h2m-2 1h2m-2 1h2m-6 1h1m3 0h2m-6 1h1m3 0h2m-6 1h1m3 0h3m-3 1h2m-6 1h1m4 0h2m-2 1h1m-1 1h2m-2 1h1m0 3h1m-2 1h1m-1 1h2m-2 1h2m-2 1h2m-6 1h1m4 3h1m-6 1h1m4 0h2m-2 1h2m-9 1h1m7 0h1m-40 1h1m30 0h1m7 0h2m-41 1h1m37 0h2m-6 1h1m4 0h2m-1 1h1m-16 1h1m13 0h2m-2 1h2m-2 1h2m-7 1h1m4 0h2m-6 1h1m3 0h2m-2 1h2m-1 1h1m-2 1h2m-3 15h1m-1 1h1m-49 5h2m-1 1h1m48 1h1m-52 3h1m-1 1h1m-1 9h1m53 0h1m-1 2h1m-289 6h1m-1 1h1m-2 1h3m-3 1h3m-2 1h1m1 0h1m-3 2h1m-1 1h3m-3 1h3m288 0h2m-294 1h3m-3 1h4m-4 1h4m-4 1h4m289 0h1m-294 1h4m-4 1h4m434 0h1m-439 1h4m433 0h2m1 0h1m-441 1h4m419 0h1m2 0h1m11 0h1m1 0h1m-441 1h4m290 0h1m143 0h2m-440 1h4m413 0h1m19 0h2m-438 1h3m408 0h2m1 0h1m1 0h2m1 0h2m-422 1h4m411 0h1m1 0h1m-418 1h4m429 0h2m-435 1h4m145 0h1m283 0h1m-434 1h4m429 0h2m-435 1h4m73 0h1m330 0h1m25 0h1m-435 1h4m73 0h2m329 0h2m1 0h3m-414 1h4m405 0h4m-413 1h4m405 0h4m-413 1h4m15 0h1m277 0h1m-298 1h4m249 0h1m43 0h1m104 0h2m1 0h1m-406 1h4m284 0h2m111 0h1m1 0h4m9 0h1m6 0h1m2 0h1m-427 1h1m1 0h2m400 0h3m9 0h1m-388 1h2m373 0h2m31 0h1m-34 1h3m20 0h3m5 0h2m1 0h1m-439 1h1m1 0h1m63 0h1m340 0h1m15 0h1m2 0h1m9 0h1m1 0h1m-439 1h4m61 0h2m354 0h2m4 0h1m-428 1h4m106 0h1m188 0h1m100 0h2m8 0h2m5 0h1m3 0h3m-424 1h4m394 0h4m9 0h1m1 0h1m7 0h3m-424 1h1m1 0h1m396 0h2m4 0h2m1 0h1m12 0h2m-420 1h1m16 0h1m19 0h2m1 0h1m38 0h1m76 0h1m239 0h2m3 0h2m16 0h1m-423 1h1m1 0h2m16 0h1m12 0h1m8 0h1m103 0h1m253 0h2m10 0h1m-413 1h6m139 0h2m252 0h3m14 0h1m-417 1h4m2 0h1m61 0h1m22 0h1m21 0h2m284 0h4m6 0h1m5 0h3m-418 1h4m12 0h2m38 0h1m12 0h1m20 0h1m22 0h2m283 0h2m9 0h2m4 0h1m-416 1h4m28 0h1m5 0h1m16 0h2m3 0h2m6 0h2m43 0h3m293 0h2m4 0h1m18 0h1m-435 1h4m28 0h1m5 0h1m9 0h2m6 0h1m3 0h2m8 0h1m2 0h1m40 0h3m292 0h3m11 0h1m-439 1h1m14 0h3m21 0h1m24 0h1m65 0h1m114 0h1m70 0h1m107 0h2m-427 1h2m14 0h3m32 0h2m11 0h2m49 0h1m14 0h1m47 0h2m232 0h1m13 0h1m-427 1h1m3 0h1m11 0h3m32 0h1m2 0h2m72 0h2m20 0h1m27 0h1m64 0h1m65 0h1m147 0h1m-457 1h1m1 0h2m11 0h3m10 0h2m24 0h1m92 0h2m1 0h1m105 0h1m153 0h2m43 0h1m-441 1h4m10 0h1m117 0h1m108 0h1m152 0h2m-411 1h1m1 0h2m11 0h3m128 0h2m2 0h2m8 0h3m1 0h1m91 0h1m60 0h1m91 0h1m23 0h3m5 0h2m-444 1h5m12 0h2m15 0h1m116 0h3m7 0h5m266 0h5m7 0h1m-444 1h3m18 0h3m60 0h2m60 0h2m2 0h2m8 0h3m1 0h1m80 0h1m1 0h1m184 0h4m14 0h2m1 0h1m-455 1h5m12 0h2m4 0h1m1 0h1m122 0h1m2 0h1m9 0h2m94 0h2m174 0h2m16 0h3m-453 1h3m12 0h2m8 0h1m111 0h1m2 0h1m18 0h3m270 0h1m11 0h1m5 0h1m-480 1h3m2 0h1m1 0h1m1 0h1m3 0h2m3 0h2m8 0h5m11 0h2m115 0h1m7 0h1m19 0h2m147 0h2m132 0h2m7 0h2m-482 1h12m1 0h6m9 0h2m14 0h1m115 0h1m318 0h1m-478 1h1m1 0h3m6 0h1m3 0h1m9 0h1m119 0h1m172 0h2m145 0h2m-425 1h2m39 0h1m28 0h1m21 0h2m9 0h2m1 0h1m17 0h1m23 0h1m274 0h2m-442 1h1m3 0h1m11 0h4m40 0h1m36 0h3m10 0h2m8 0h3m42 0h1m71 0h1m82 0h1m89 0h1m31 0h2m-440 1h1m11 0h4m40 0h1m38 0h1m9 0h2m1 0h2m7 0h1m1 0h1m112 0h3m2 0h2m77 0h2m122 0h1m1 0h1m-446 1h1m14 0h4m32 0h2m54 0h2m3 0h1m127 0h1m78 0h2m88 0h1m25 0h3m6 0h3m1 0h1m-450 1h4m12 0h4m33 0h1m53 0h2m21 0h1m1 0h1m303 0h5m5 0h4m-449 1h3m12 0h4m88 0h1m38 0h1m16 0h1m156 0h1m116 0h4m5 0h2m-449 1h5m11 0h4m39 0h1m23 0h2m51 0h1m11 0h1m6 0h2m164 0h1m118 0h1m7 0h2m4 0h3m-457 1h5m11 0h4m63 0h1m3 0h1m1 0h4m54 0h1m4 0h1m2 0h1m285 0h1m12 0h3m-456 1h4m11 0h4m63 0h2m1 0h6m1 0h1m32 0h1m22 0h1m2 0h1m85 0h1m217 0h2m-458 1h4m12 0h4m38 0h1m26 0h6m62 0h1m1 0h1m2 0h1m282 0h1m14 0h2m-458 1h4m12 0h3m38 0h1m23 0h1m3 0h7m61 0h2m1 0h1m95 0h1m49 0h1m137 0h1m-440 1h4m11 0h2m40 0h1m22 0h2m2 0h2m3 0h2m218 0h1m128 0h2m-440 1h2m1 0h1m11 0h3m60 0h1m2 0h3m2 0h1m3 0h1m354 0h1m-446 1h1m14 0h5m58 0h1m1 0h2m1 0h1m6 0h1m67 0h2m285 0h2m-447 1h2m14 0h4m138 0h1m286 0h3m3 0h3m-439 1h5m425 0h2m5 0h3m-440 1h5m433 0h2m-440 1h4m426 0h1m8 0h3m-442 1h5m36 0h1m384 0h4m9 0h2m-456 1h1m1 0h1m12 0h4m421 0h6m7 0h2m-456 1h5m11 0h4m302 0h1m117 0h2m2 0h5m-448 1h3m12 0h4m213 0h1m78 0h1m8 0h2m122 0h3m5 0h2m-455 1h5m11 0h5m424 0h1m8 0h2m-456 1h5m11 0h4m294 0h1m139 0h2m-456 1h1m1 0h2m12 0h5m294 0h1m139 0h2m-454 1h1m12 0h5m429 0h1m-449 1h3m11 0h1m1 0h3m400 0h1m-419 1h1m15 0h1m107 0h1m292 0h2m-420 1h3m11 0h1m1 0h3m-20 1h3m12 0h5m-20 1h3m14 0h3m434 0h1m-454 1h3m14 0h2m138 0h1m260 0h1m34 0h1m-453 1h2m11 0h1m1 0h3m139 0h1m259 0h1m21 0h1m13 0h1m-454 1h2m11 0h5m117 0h3m2 0h8m1 0h5m2 0h1m3 0h2m290 0h1m1 0h1m-458 1h1m1 0h3m11 0h4m116 0h1m2 0h2m1 0h2m1 0h2m1 0h4m1 0h4m3 0h1m3 0h3m-166 1h2m1 0h1m12 0h3m110 0h2m17 0h2m3 0h1m2 0h1m1 0h2m2 0h4m279 0h1m-447 1h2m15 0h4m110 0h2m1 0h1m1 0h2m4 0h1m3 0h1m14 0h1m265 0h1m-412 1h5m27 0h1m10 0h1m367 0h1m-427 1h1m2 0h1m11 0h5m27 0h1m279 0h1m-328 1h3m12 0h1m1 0h3m24 0h1m124 0h1m8 0h2m1 0h3m144 0h1m-330 1h2m1 0h1m15 0h1m111 0h1m19 0h1m1 0h2m2 0h2m2 0h1m2 0h3m4 0h1m1 0h1m2 0h1m1 0h8m-182 1h1m13 0h3m36 0h2m54 0h2m12 0h1m2 0h4m17 0h4m5 0h1m4 0h2m2 0h4m4 0h9m-183 1h1m7 0h1m5 0h4m23 0h1m67 0h2m6 0h1m1 0h2m2 0h1m4 0h3m2 0h1m15 0h1m5 0h2m11 0h1m7 0h7m-184 1h1m14 0h3m25 0h1m66 0h1m8 0h2m3 0h1m5 0h2m25 0h2m16 0h1m2 0h5m-184 1h1m14 0h5m24 0h2m73 0h3m4 0h1m23 0h2m5 0h1m17 0h4m1 0h4m265 0h1m-475 1h1m1 0h1m3 0h1m21 0h1m11 0h5m24 0h1m3 0h2m69 0h4m9 0h1m2 0h1m12 0h2m21 0h1m4 0h2m3 0h3m-212 1h2m7 0h3m15 0h2m1 0h1m12 0h5m25 0h2m7 0h3m58 0h1m7 0h2m10 0h2m8 0h1m2 0h1m2 0h2m12 0h2m3 0h2m8 0h5m-212 1h1m9 0h1m17 0h3m11 0h5m93 0h1m23 0h1m8 0h2m3 0h1m14 0h1m12 0h1m2 0h2m-181 1h1m10 0h3m1 0h3m2 0h1m2 0h2m1 0h3m2 0h4m3 0h2m1 0h1m13 0h3m1 0h1m12 0h1m5 0h1m5 0h3m4 0h2m8 0h1m7 0h1m1 0h2m2 0h2m2 0h1m4 0h2m17 0h5m1 0h1m23 0h1m10 0h1m5 0h1m1 0h1m10 0h2m1 0h4m1 0h1m12 0h1m2 0h1m3 0h1m1 0h2m1 0h3m1 0h1m12 0h5m2 0h2m10 0h1m1 0h1m1 0h2m2 0h2m1 0h3m2 0h3m2 0h1m2 0h1m2 0h3m2 0h1m4 0h1m1 0h1m1 0h2m21 0h1m1 0h1m23 0h1m5 0h3m6 0h4m13 0h4m6 0h2m6 0h2m3 0h1m9 0h2m-297 1h1m11 0h2m108 0h1m6 0h2m14 0h1m92 0h1m-404 1h1m165 0h2m6 0h1m32 0h1m87 0h2m-297 1h1m7 0h2m458 1h1m8 0h1m4 0h1"/><path stroke="#033e06" d="M0 0m297 67h3m-3 1h1m1 0h1m-3 1h3m39 82h3m-3 1h1m1 0h1m-3 1h3m65 23h1m2 0h4m-102 1h1m2 0h1m5 0h2m6 0h1m26 0h1m8 0h1m5 0h1m-62 3h1m-1 1h1m56 0h1m34 0h1m2 0h1m-95 1h1m9 0h1m8 0h3m1 0h1m17 0h1m8 0h1m12 0h1m4 0h1m27 0h1m-96 1h1m9 0h2m6 0h1m31 0h1m15 0h1m15 0h1m-82 1h1m24 0h1m5 0h1m14 0h1m2 0h1m5 0h1m3 0h1m4 0h1m11 0h1m4 0h1m3 0h1m12 0h1m2 0h2m-77 1h1m11 0h1m7 0h1m3 0h1m26 0h1m7 0h1m6 0h1m-89 1h2m18 0h1m2 0h2m8 0h1m4 0h1m8 0h1m5 0h1m5 0h1m-58 1h1m30 0h1m14 0h1m9 0h1m15 0h1m5 0h1m3 0h1m13 0h1m-95 1h1m20 0h1m5 0h2m4 0h1m11 0h1m29 0h1m4 0h1m-59 1h1m5 0h1m10 0h1m6 0h1m5 0h1m13 0h1m8 0h2m13 0h1m-87 1h2m40 0h1m5 0h1m35 0h1m-82 1h1m24 0h1m2 0h1m9 0h1m7 0h1m13 0h1m19 0h1m-79 1h1m10 0h1m37 0h1m3 0h1m22 0h1m-76 1h1m11 0h1m21 0h1m13 0h1m3 0h1m19 0h1m-60 1h1m1 0h1m3 0h2m9 0h1m2 0h1m5 0h2m18 0h1m-55 1h1m24 0h1m1 0h1m5 0h1m17 0h2m-52 1h1m24 0h1m5 0h1m9 0h1m7 0h1m9 0h2m-58 1h1m9 0h1m16 0h1m27 0h1m-55 1h1m24 0h1m26 0h1m-51 1h2m46 0h1m-47 1h1m11 0h1m17 0h1m13 0h1m-43 1h1m27 0h1m10 0h1m-37 1h1m14 0h2m7 0h1m10 0h1m-35 1h1m14 0h1m6 0h1m9 0h1m-30 1h1m12 0h2m3 0h1m-17 1h1m6 0h1m6 0h1m-7 1h1m10 0h1m-11 1h1m8 0h1m-9 1h1m6 0h1m-9 1h1m8 0h1m3 0h1m-15 1h1m10 0h1m2 0h1m-18 1h1m1 0h1m6 0h1m5 0h1m-21 1h1m5 0h1m6 0h1m1 0h1m14 0h1m-31 1h1m11 0h1m3 0h1m5 0h1m7 0h1m-31 1h1m10 0h1m5 0h1m-18 1h1m8 0h1m9 0h1m-23 1h3m8 0h1m9 0h2m-25 1h1m-2 1h1m-1 1h1m-1 1h1m-130 1h3m143 0h1m5 0h1m-153 1h1m1 0h1m147 0h1m-151 1h3m126 0h1m11 0h1m15 0h1m-3 1h1m-12 1h1m8 0h1m-10 1h1m8 0h1m5 0h1m-21 1h1m15 0h1m-17 1h1m1 0h2m14 0h1m-19 1h1m8 0h1m1 0h1m7 0h1m-14 1h1m5 0h1m-23 1h1m23 0h1m1 1h1m-14 1h1m14 1h1m-2 1h1m-14 1h1m10 0h1m-3 1h2m-25 1h1m17 0h1m2 0h2m6 0h2m-19 1h1m7 0h1m7 0h1m-29 2h1m23 0h1m-1 1h2m-17 1h1m16 0h2m-19 1h1m-1 1h3m18 0h1m0 1h1m-32 1h1m14 0h1m10 1h1m-24 1h1m8 0h1m-3 1h1m19 0h1m-3 1h1m-3 1h1m-11 1h1m7 0h2m-17 1h1m8 0h1m2 0h1m-12 1h1m8 0h1m9 0h2m-18 1h1m14 0h1m11 0h1m-34 1h1m-6 1h1m4 0h1m6 0h1m12 1h2m-9 1h1m8 0h1m-21 1h1m7 0h2m12 0h1m-17 1h1m8 0h1m-11 1h1m10 0h1m-25 1h1m12 0h1m2 0h1m5 0h2m-28 1h1m-7 1h5m46 0h2m3 1h1m-30 1h2m8 0h1m20 0h2m-72 1h1m32 0h1m15 0h1m25 0h1m-81 1h1m26 0h1m11 0h1m13 0h1m28 0h1m-89 1h4m35 0h1m6 0h1m18 0h1m10 0h2m16 0h1m-98 1h1m22 0h2m25 0h1m9 0h1m6 0h1m32 0h1m-81 1h1m23 0h1m7 0h1m6 0h1m5 0h1m37 0h1m-113 1h1m23 0h1m25 0h1m4 0h1m6 0h1m4 0h1m28 0h3m15 0h1m-119 1h2m21 0h1m30 0h1m5 0h1m6 0h2m6 0h1m28 0h1m19 0h1m-131 1h1m59 0h1m6 0h1m12 0h1m7 0h1m25 0h1m18 0h1m-139 1h1m22 0h2m59 0h1m8 0h1m28 0h3m17 0h1m-146 1h1m77 0h1m7 0h1m42 0h1m19 0h1m-155 1h1m82 0h1m7 0h1m34 0h2m9 0h1m19 0h1m-163 1h1m23 0h1m62 0h1m42 0h1m6 0h1m9 0h1m17 0h2m-171 1h1m23 0h1m71 0h1m5 0h2m38 0h1m9 0h1m20 0h1m-155 1h1m6 0h2m5 0h1m61 0h1m1 0h1m79 0h2m-159 1h1m3 0h1m62 0h2m9 0h1m6 0h1m-87 1h1m61 0h1m3 0h2m6 0h1m5 0h1m6 0h1m18 0h1m-116 1h1m6 0h1m32 0h1m30 0h1m18 0h1m6 0h2m15 0h1m8 0h1m6 0h1m5 0h2m-115 1h1m6 0h1m13 0h1m4 0h2m5 0h1m4 0h1m9 0h1m1 0h1m6 0h1m11 0h1m6 0h1m12 0h2m-112 1h1m3 0h1m5 0h1m5 0h1m10 0h1m1 0h1m6 0h1m3 0h2m7 0h1m19 0h2m6 0h1m20 0h1m8 0h1m30 0h1m-145 1h1m6 0h1m1 0h1m5 0h1m7 0h1m1 0h1m6 0h1m10 0h1m12 0h1m6 0h2m10 0h1m29 0h1m31 0h1m-139 1h1m1 0h1m6 0h1m15 0h1m6 0h1m5 0h1m6 0h1m35 0h1m19 0h1m-103 1h1m3 0h2m25 0h2m27 0h1m9 0h1m10 0h1m21 0h1m14 0h1m-128 1h1m48 0h1m54 0h1m6 0h3m12 0h1m-127 1h1m-1 1h1m-1 1h1m-1 1h1m85 0h1m18 0h1m2 0h1m3 0h1m-33 1h1m13 0h1m9 0h1m11 0h1m17 0h2m2 0h1m5 0h1m2 0h1m35 0h1m-92 1h1m-80 1h1m71 0h1m5 0h1m7 0h1m6 0h1m-6 1h1m-14 1h2m6 0h1m5 0h1m75 0h1m-92 1h1m6 0h1m8 0h1m7 0h1m-106 1h1m78 0h1m7 0h1m19 0h1m-108 1h1m85 0h1m13 0h1m6 0h1m-35 1h1m11 0h1m-3 1h2m-4 1h2m21 0h1m-25 1h1m25 0h1m59 0h1m-88 1h1m27 0h1m-105 1h1m77 0h1m26 0h1m1 1h1m-115 1h1m87 0h1m26 0h1m58 0h1m1 0h1m-177 1h2m5 0h1m81 0h1m24 0h1m55 0h1m2 0h1m2 0h2m1 0h2m-98 1h1m7 0h1m20 0h1m-32 1h1m2 0h1m25 0h1m-35 1h1m4 0h1m4 0h1m6 0h1m15 0h1m-15 1h1m12 0h1m7 0h1m-29 1h2m6 0h2m16 0h1m-33 1h2m4 0h3m14 0h1m7 0h1m11 0h1m-36 1h1m9 0h1m10 0h1m13 0h1m-25 1h3m-28 2h1m12 0h1m4 0h2m1 1h1m8 0h1m-11 1h1m9 0h1m2 0h2m-16 1h1m-21 1h1m18 0h1m6 0h2m10 0h2m-23 1h1m7 0h1m2 0h1m8 0h1m-28 1h1m5 0h1m6 0h1m5 0h1m7 0h1m-16 1h1m5 0h1m10 0h1m-35 1h1m14 0h1m7 0h1m-24 1h1m28 0h1m6 0h2m-33 1h1m19 0h2m10 0h1m-6 1h1m-34 1h1m2 0h1m7 0h1m-17 1h1m4 0h2m8 0h2m24 0h1m-30 1h2m28 0h1m-32 1h1m-2 1h1m33 0h1m-37 1h1m42 0h1m-45 1h1m43 0h1m-53 1h1m5 0h2m44 0h1m0 3h1m-55 2h1m7 0h2m35 0h1m-36 1h1m33 0h1m-3 1h1m-3 1h1m8 0h1m-51 1h1m40 0h1m7 0h1m6 0h1m-49 1h1m8 0h1m21 0h1m8 0h1m-39 1h1m7 0h2m17 0h1m8 0h1m-35 1h1m7 0h1m15 0h1m8 0h1m5 0h1m5 0h1m-45 1h2m7 0h1m20 0h1m-45 1h1m15 0h1m7 0h1m8 0h1m9 0h1m-18 1h1m5 0h1m8 0h1m9 0h1m-324 1h1m46 0h1m242 0h2m7 0h1m2 0h1m8 0h1m-312 1h1m291 0h1m17 0h1m11 0h1m8 0h1m-332 1h1m270 0h1m21 0h1m14 0h1m-323 1h1m3 0h1m8 0h1m61 0h1m233 0h1m11 0h1m-323 1h1m310 0h1m8 0h1m15 0h1m-40 1h1m11 0h1m12 0h1m12 0h1m11 0h1m-272 1h1m221 0h2m7 0h2m14 0h1m17 0h1m-342 1h1m10 0h1m11 0h1m43 0h1m2 0h1m4 0h1m209 0h1m5 0h1m8 0h1m5 0h1m8 0h2m8 0h1m6 0h1m7 0h1m-322 1h1m2 0h1m14 0h1m2 0h1m249 0h1m2 0h1m8 0h1m1 0h1m9 0h1m3 0h1m7 0h1m3 0h1m8 0h1m-321 1h1m2 0h1m17 0h1m270 0h2m6 0h1m8 0h1m13 0h1m-324 1h1m2 0h1m17 0h1m257 0h1m11 0h1m10 0h1m16 0h1m9 0h1m-330 1h1m2 0h1m271 0h1m3 0h1m1 0h1m8 0h1m12 0h1m14 0h1m-298 1h1m243 0h1m9 0h1m12 0h1m16 0h1m7 0h1m3 0h1m-301 1h1m247 0h1m4 0h1m4 0h2m40 0h1m2 0h2m8 0h1m-328 1h1m13 0h1m247 0h1m4 0h1m4 0h1m10 0h1m20 0h1m9 0h1m1 0h1m-317 1h1m13 0h1m3 0h1m2 0h3m243 0h1m12 0h1m25 0h1m8 0h1m5 0h1m-322 1h1m19 0h1m4 0h1m243 0h1m9 0h1m27 0h2m11 0h1m-324 1h1m2 0h1m17 0h1m6 0h1m235 0h1m16 0h1m30 0h1m-313 1h1m2 0h1m14 0h1m9 0h1m235 0h1m5 0h1m8 0h1m34 0h1m-315 1h1m17 0h1m7 0h3m2 0h1m4 0h2m1 0h2m282 0h2m6 0h1m-306 1h2m4 0h1m3 0h1m240 0h2m-247 1h1m242 0h1m40 0h3m-302 1h1m10 0h1m3 0h1m47 0h3m180 0h1m9 0h1m45 0h1m12 0h1m-333 1h1m16 0h1m14 0h1m47 0h1m1 0h1m1 0h3m185 0h1m48 0h1m-319 1h1m13 0h1m8 0h2m4 0h1m47 0h1m1 0h1m1 0h1m1 0h1m182 0h1m52 0h1m-305 1h1m4 0h1m56 0h1m2 0h2m2 0h1m236 0h1m-380 1h1m5 0h1m65 0h1m4 0h2m54 0h1m5 0h1m2 0h1m45 0h3m134 0h1m55 0h1m-376 1h1m48 0h1m16 0h1m18 0h1m40 0h1m10 0h1m44 0h1m1 0h1m1 0h3m122 0h1m8 0h1m61 0h1m-390 1h1m6 0h1m48 0h1m16 0h1m18 0h1m36 0h3m56 0h1m2 0h2m2 0h1m9 0h3m4 0h3m113 0h1m52 0h1m-382 1h1m72 0h1m10 0h1m40 0h3m60 0h1m1 0h2m2 0h1m10 0h1m1 0h4m1 0h1m1 0h1m114 0h1m49 0h1m-380 1h5m54 0h1m13 0h1m9 0h2m3 0h1m34 0h2m2 0h2m59 0h6m7 0h1m2 0h1m2 0h2m3 0h3m108 0h1m6 0h1m121 0h3m-466 1h3m2 0h4m2 0h1m2 0h1m7 0h1m2 0h1m2 0h1m3 0h1m3 0h1m2 0h2m2 0h5m1 0h3m2 0h2m2 0h1m2 0h1m8 0h1m6 0h3m2 0h1m16 0h1m32 0h2m23 0h5m33 0h3m5 0h1m9 0h1m9 0h1m104 0h1m59 0h2m11 0h1m61 0h1m1 0h1m70 0h3m-440 1h1m31 0h1m32 0h1m1 0h3m26 0h1m1 0h1m3 0h1m21 0h3m110 0h1m5 0h1m45 0h1m5 0h1m6 0h1m61 0h3m64 0h3m3 0h1m1 0h1m-440 1h1m23 0h3m38 0h2m29 0h3m1 0h1m26 0h10m97 0h1m53 0h1m6 0h1m6 0h1m128 0h1m1 0h1m3 0h3m-441 1h1m29 0h1m35 0h1m5 0h1m58 0h2m1 0h2m1 0h1m102 0h1m5 0h1m41 0h1m5 0h1m136 0h2m6 0h1m-537 1h5m2 0h13m2 0h4m8 0h8m4 0h1m4 0h1m7 0h2m2 0h1m3 0h1m2 0h1m2 0h1m8 0h1m1 0h1m8 0h1m32 0h1m30 0h1m1 0h1m2 0h1m10 0h3m20 0h1m35 0h1m1 0h1m91 0h1m17 0h1m39 0h1m144 0h2m7 0h1m-446 1h1m4 0h1m20 0h4m1 0h1m1 0h1m33 0h1m9 0h4m1 0h1m20 0h1m40 0h1m93 0h1m6 0h1m6 0h1m37 0h1m143 0h1m-439 1h1m3 0h2m3 0h1m20 0h1m1 0h1m52 0h2m20 0h1m40 0h4m90 0h1m7 0h1m42 0h1m6 0h1m-301 1h1m3 0h1m4 0h1m20 0h3m56 0h1m16 0h1m41 0h1m2 0h1m99 0h1m40 0h1m6 0h1m12 0h1m109 0h3m1 0h3m2 0h3m-434 1h1m3 0h1m4 0h1m79 0h1m15 0h1m45 0h1m1 0h3m96 0h1m45 0h1m123 0h1m2 0h1m-426 1h1m4 0h1m83 0h1m61 0h3m1 0h1m80 0h1m16 0h1m5 0h1m30 0h1m6 0h1m124 0h2m-424 1h1m4 0h1m20 0h5m57 0h1m13 0h3m50 0h1m4 0h3m97 0h1m28 0h1m6 0h1m16 0h1m110 0h1m-424 1h1m3 0h1m2 0h1m12 0h3m2 0h1m61 0h4m64 0h2m2 0h1m1 0h1m91 0h1m6 0h1m26 0h1m6 0h1m-291 1h1m3 0h1m11 0h1m1 0h1m2 0h1m61 0h1m3 0h2m66 0h2m80 0h2m4 0h1m2 0h3m41 0h1m3 0h2m2 0h5m117 0h1m-421 1h1m15 0h3m69 0h6m62 0h1m4 0h2m117 0h1m136 0h1m-423 1h1m3 0h2m15 0h4m67 0h3m3 0h5m59 0h1m4 0h1m67 0h1m27 0h1m-260 1h3m14 0h1m1 0h1m72 0h4m65 0h3m96 0h1m49 0h1m140 0h1m-452 1h2m15 0h3m64 0h1m10 0h3m65 0h1m78 0h1m7 0h2m9 0h1m28 0h1m122 0h1m-418 1h1m2 0h1m19 0h1m72 0h1m143 0h1m18 0h1m29 0h1m13 0h2m-305 1h1m3 0h1m18 0h1m72 0h4m1 0h1m146 0h1m11 0h1m6 0h1m13 0h1m6 0h1m19 0h1m-309 1h1m3 0h2m3 0h1m12 0h1m76 0h2m133 0h1m4 0h1m3 0h1m6 0h1m10 0h1m45 0h1m7 0h1m-316 1h1m3 0h1m1 0h3m11 0h2m76 0h3m138 0h1m5 0h1m5 0h1m10 0h1m23 0h1m19 0h1m-307 1h1m3 0h2m3 0h1m9 0h1m78 0h1m1 0h3m65 0h3m74 0h1m17 0h1m5 0h1m8 0h1m26 0h1m-208 1h1m2 0h1m68 0h1m76 0h1m5 0h1m10 0h1m6 0h1m6 0h1m5 0h2m13 0h1m156 0h1m-438 1h1m78 0h1m2 0h1m147 0h1m5 0h1m20 0h1m20 0h1m5 0h1m12 0h1m-317 1h1m4 0h1m14 0h1m77 0h1m2 0h1m131 0h1m16 0h1m14 0h1m9 0h1m27 0h1m105 0h1m-311 1h1m2 0h1m10 0h1m57 0h1m61 0h1m17 0h1m6 0h1m7 0h1m6 0h1m1 0h1m5 0h1m14 0h1m14 0h1m97 0h1m46 0h1m-448 1h1m89 0h3m12 0h1m57 0h2m78 0h1m27 0h1m14 0h1m4 0h1m10 0h1m97 0h1m-410 1h1m3 0h1m4 0h1m89 0h2m72 0h1m64 0h1m14 0h1m25 0h1m128 0h3m45 0h1m-457 1h1m4 0h1m93 0h2m21 0h1m50 0h1m58 0h1m7 0h2m75 0h1m90 0h1m-409 1h1m4 0h1m93 0h1m1 0h1m16 0h1m113 0h1m175 0h1m-405 1h2m3 0h1m90 0h1m131 0h1m223 0h1m-448 1h1m164 0h1m281 0h1m-457 1h1m3 0h1m4 0h1m31 0h2m131 0h1m65 0h1m27 0h1m10 0h1m11 0h1m5 0h1m11 0h1m8 0h1m116 0h1m20 0h1m-457 1h1m41 0h3m28 0h1m27 0h1m21 0h1m50 0h1m105 0h1m27 0h1m99 0h1m47 0h1m-457 1h1m4 0h1m37 0h1m15 0h1m40 0h1m20 0h2m120 0h1m23 0h1m5 0h1m7 0h1m11 0h1m4 0h1m-299 1h1m4 0h1m3 0h1m9 0h3m22 0h1m13 0h1m1 0h1m60 0h1m53 0h1m55 0h1m12 0h1m21 0h1m5 0h1m3 0h1m22 0h1m6 0h1m-302 1h1m53 0h1m40 0h1m135 0h1m28 0h1m5 0h1m4 0h1m6 0h1m10 0h1m9 0h2m5 0h1m1 0h1m5 0h1m87 0h1m48 0h1m-453 1h1m94 0h1m130 0h1m17 0h1m15 0h1m5 0h1m6 0h1m17 0h1m4 0h1m9 0h1m96 0h1m40 0h2m6 0h1m-448 1h1m34 0h1m14 0h1m38 0h3m129 0h1m7 0h2m12 0h1m25 0h1m17 0h1m4 0h1m8 0h1m136 0h2m7 0h1m-452 1h1m38 0h1m14 0h1m118 0h4m48 0h1m20 0h1m10 0h1m16 0h1m17 0h1m11 0h1m136 0h2m-440 1h1m35 0h1m14 0h1m1 0h2m118 0h1m53 0h1m32 0h1m18 0h1m10 0h1m-290 1h1m51 0h1m3 0h2m4 0h1m30 0h1m77 0h2m69 0h1m9 0h1m5 0h1m20 0h1m18 0h1m12 0h1m135 0h1m-452 1h1m3 0h1m31 0h1m19 0h1m4 0h1m2 0h1m1 0h1m107 0h1m49 0h1m30 0h1m5 0h1m30 0h1m8 0h1m-301 1h1m2 0h1m31 0h1m12 0h1m2 0h1m4 0h1m3 0h3m1 0h1m108 0h1m79 0h1m5 0h1m17 0h1m5 0h1m116 0h1m49 0h1m-451 1h1m2 0h1m31 0h3m10 0h1m1 0h1m6 0h3m7 0h2m104 0h4m75 0h1m24 0h1m26 0h5m91 0h1m-401 1h1m2 0h1m21 0h1m5 0h1m3 0h1m1 0h1m32 0h1m102 0h2m1 0h1m81 0h1m19 0h1m121 0h1m-402 1h1m3 0h1m21 0h1m2 0h4m32 0h3m1 0h3m99 0h1m3 0h3m138 0h1m82 0h2m48 0h2m-424 1h5m35 0h2m2 0h1m96 0h1m1 0h1m52 0h1m33 0h2m22 0h2m-254 1h1m1 0h1m18 0h1m1 0h1m14 0h1m2 0h2m5 0h1m54 0h1m99 0h2m13 0h1m8 0h1m26 0h1m7 0h2m158 0h1m-454 1h1m30 0h3m4 0h1m1 0h1m28 0h3m7 0h1m16 0h2m134 0h1m14 0h1m4 0h1m32 0h1m9 0h2m8 0h1m13 0h1m81 0h1m51 0h1m-454 1h1m37 0h3m34 0h3m19 0h2m29 0h1m39 0h2m76 0h1m4 0h1m45 0h1m104 0h1m-396 1h3m65 0h1m1 0h1m51 0h1m37 0h1m76 0h1m5 0h1m5 0h1m37 0h1m3 0h2m103 0h1m-395 1h1m65 0h2m147 0h1m24 0h1m5 0h1m51 0h2m-307 1h1m6 0h1m56 0h3m1 0h3m25 0h1m48 0h1m100 0h1m5 0h1m58 0h1m-248 1h1m1 0h1m1 0h1m1 0h1m26 0h1m47 0h2m16 0h1m81 0h1m5 0h1m48 0h1m17 0h1m81 0h2m42 0h2m-382 1h3m1 0h3m1 0h3m22 0h2m46 0h1m81 0h1m8 0h1m7 0h1m50 0h1m6 0h1m97 0h1m43 0h2m-446 1h1m6 0h1m15 0h3m46 0h1m1 0h1m23 0h1m63 0h1m58 0h1m7 0h1m7 0h1m6 0h1m5 0h1m45 0h1m13 0h1m89 0h1m-394 1h1m15 0h1m1 0h1m47 0h2m22 0h1m3 0h1m126 0h1m20 0h1m40 0h1m7 0h1m2 0h2m8 0h1m90 0h2m-404 1h1m6 0h1m15 0h3m76 0h1m139 0h1m5 0h2m41 0h1m8 0h1m18 0h1m-320 1h1m6 0h1m45 0h1m17 0h1m19 0h1m11 0h1m1 0h2m53 0h1m80 0h1m50 0h1m6 0h1m13 0h1m5 0h1m-320 1h1m52 0h1m17 0h1m19 0h1m11 0h4m23 0h1m3 0h1m6 0h1m88 0h1m16 0h1m71 0h1m83 0h1m-404 1h1m52 0h1m37 0h1m38 0h1m2 0h1m8 0h1m86 0h2m79 0h1m92 0h1m47 0h1m-452 1h1m88 0h2m26 0h2m4 0h1m6 0h1m1 0h1m9 0h3m75 0h1m24 0h1m205 0h1m-402 1h1m1 0h1m54 0h1m1 0h1m7 0h2m11 0h3m15 0h1m171 0h1m130 0h1m-460 1h1m57 0h3m54 0h3m4 0h3m30 0h1m1 0h1m7 0h1m85 0h1m52 0h1m108 0h1m45 0h1m-460 1h1m58 0h2m19 0h2m2 0h2m45 0h1m23 0h3m6 0h2m85 0h1m53 0h1m107 0h1m44 0h1m-398 1h1m98 0h1m3 0h2m84 0h1m56 0h1m105 0h3m-401 1h1m45 0h1m100 0h1m2 0h1m61 0h1m14 0h1m7 0h1m63 0h1m7 0h1m90 0h4m-417 1h1m7 0h1m52 0h1m66 0h1m34 0h3m82 0h1m60 0h1m12 0h1m6 0h1m83 0h1m1 0h2m-409 1h1m118 0h1m119 0h1m62 0h1m6 0h1m95 0h3m-408 1h1m6 0h1m45 0h1m178 0h1m6 0h1m63 0h1m-251 1h1m69 0h1m94 0h1m12 0h1m90 0h1m128 0h1m-400 1h2m65 0h1m3 0h1m99 0h2m12 0h1m73 0h1m97 0h1m-410 1h1m118 0h1m104 0h1m5 0h1m84 0h1m92 0h1m-409 1h1m122 0h1m112 0h1m78 0h1m6 0h1m83 0h2m43 0h1m-452 1h1m6 0h1m41 0h3m71 0h1m93 0h1m7 0h1m9 0h1m170 0h1m-407 1h1m5 0h1m45 0h2m65 0h1m105 0h1m8 0h1m88 0h1m82 0h5m39 0h1m-444 1h1m115 0h1m109 0h1m75 0h1m138 0h3m-459 1h1m7 0h1m48 0h2m166 0h1m230 0h1m-396 1h1m65 0h1m8 0h2m21 0h2m5 0h1m73 0h1m77 0h1m-259 1h1m66 0h1m3 0h2m2 0h1m31 0h1m62 0h3m6 0h1m-232 1h1m6 0h1m208 0h1m4 0h1m1 0h1m6 0h1m229 0h3m-462 1h1m5 0h1m155 0h1m57 0h1m1 0h1m5 0h1m84 0h1m9 0h1m90 0h1m44 0h1m1 0h1m-463 1h1m6 0h1m42 0h3m113 0h1m54 0h1m93 0h1m144 0h3m-463 1h1m6 0h1m42 0h1m2 0h1m66 0h1m106 0h1m57 0h3m6 0h1m1 0h5m15 0h1m-317 1h1m6 0h1m28 0h5m1 0h3m1 0h3m1 0h1m2 0h1m113 0h1m9 0h1m37 0h1m46 0h6m1 0h3m1 0h6m3 0h3m3 0h3m6 0h2m1 0h1m24 0h1m-326 1h1m6 0h1m27 0h1m6 0h1m2 0h1m131 0h1m37 0h1m52 0h2m2 0h1m9 0h1m7 0h2m2 0h1m1 0h5m-390 1h3m86 0h4m3 0h1m103 0h5m152 0h3m3 0h5m3 0h5m2 0h5m157 0h1m-544 1h3m89 0h3m4 0h1m96 0h1m157 0h4m2 0h1m2 0h3m147 0h1m29 0h1m-544 1h1m91 0h1m6 0h1m44 0h1m114 0h1m46 0h1m204 0h3m-514 1h1m91 0h1m34 0h2m289 0h1m92 0h1m1 0h1m-513 1h5m86 0h1m418 0h3m-422 1h1m34 0h1m10 0h3m170 0h1m203 0h1m4 0h1m-394 1h1m11 0h1m4 0h1m160 0h1m210 0h1m-463 1h3m42 0h1m27 0h1m12 0h1m3 0h1m274 0h1m97 0h1m-464 1h1m1 0h1m35 0h1m51 0h1m-1 1h1m51 0h1m113 0h1m207 0h1m-385 1h2m197 0h1m3 0h1m14 0h1m3 0h1m56 0h1m7 0h2m81 0h1m-508 1h1m3 0h1m1 0h1m2 0h1m5 0h1m2 0h1m1 0h1m10 0h1m2 0h1m5 0h1m3 0h1m3 0h1m2 0h1m2 0h3m16 0h5m2 0h1m-81 1h1m3 0h1m1 0h1m11 0h1m1 0h1m52 0h1m-74 1h1m3 0h1m1 0h1m2 0h1m5 0h1m2 0h1m1 0h1m10 0h1m2 0h1m5 0h1m3 0h1m3 0h1m2 0h1m2 0h3m16 0h5m2 0h1m-18 1h1m40 0h1m118 0h1m14 0h1m16 0h1m12 0h2m35 0h1m52 0h1m4 0h1m20 0h1m7 0h1m111 0h1m20 0h1m-465 1h5m463 0h1m4 1h1m8 0h3m-15 1h3m6 0h2"/><path stroke="#074541" d="M0 0m331 177h1m5 0h1m10 0h1m3 0h1m9 0h2m4 0h1m4 0h1m13 0h3m4 0h1m2 0h1m2 0h2m2 0h4m-79 4h1m5 0h1m8 0h1m8 0h1m17 0h3m6 0h1m43 0h1m-90 1h1m6 0h1m23 0h1m20 0h1m-59 1h1m4 0h1m39 0h1m7 0h1m15 0h2m11 0h1m-97 1h1m51 0h1m5 0h1m33 0h1m-64 1h1m40 0h1m20 0h1m-48 1h1m26 0h1m14 0h1m-28 1h1m18 0h1m8 0h1m10 0h1m-91 1h1m15 0h1m3 0h1m3 0h1m2 0h1m2 0h1m19 0h1m9 0h1m3 0h1m4 0h1m18 0h1m-77 1h1m47 0h1m16 0h1m-74 1h1m55 0h1m13 0h1m-46 1h1m30 0h1m5 0h1m-44 2h1m55 0h1m-54 1h1m7 0h1m2 0h1m18 0h1m-36 1h1m12 0h1m21 0h1m2 0h1m6 0h1m-29 1h1m33 0h1m-47 1h1m3 2h1m10 1h1m21 0h1m-37 1h1m13 0h1m-4 5h1m14 6h1m8 0h1m-22 3h1m11 0h1m-8 1h1m16 2h1m-17 2h1m-10 1h1m3 0h1m-4 1h1m4 0h1m11 0h1m-17 1h1m5 0h2m-11 1h1m19 0h1m-21 1h1m-11 1h1m14 1h1m5 1h1m8 1h1m-21 1h1m4 0h1m-5 3h1m17 0h1m7 0h1m-25 3h1m0 1h1m15 0h1m-20 1h1m1 1h1m12 0h1m-12 1h1m7 2h1m14 2h1m-27 1h1m16 0h1m-5 1h1m-13 1h1m12 0h1m-15 1h1m16 0h1m0 1h1m-21 2h1m3 2h1m15 1h1m-24 2h1m6 0h1m18 0h1m-19 1h1m24 0h1m-1 1h1m-15 1h1m-20 1h1m14 0h1m-8 1h1m4 3h3m-27 2h1m-12 2h3m29 0h1m30 0h1m-67 1h2m14 0h1m52 0h1m-80 2h1m61 0h1m13 1h1m-20 1h1m20 0h1m1 0h1m-99 2h1m104 0h1m-97 2h1m52 0h1m18 0h1m-99 2h1m123 0h2m-39 1h1m17 0h1m21 0h1m27 0h1m-78 1h1m39 0h2m11 0h1m4 0h1m-137 1h2m13 0h1m10 0h1m4 0h2m14 0h1m15 0h1m26 0h1m48 0h1m20 0h1m-164 1h1m15 0h1m77 0h1m33 0h1m-130 1h1m77 0h1m3 0h1m42 0h1m5 0h1m4 0h1m14 0h1m-136 1h1m4 0h1m15 0h2m6 0h1m35 0h1m15 0h1m18 0h1m5 0h1m9 0h1m3 0h1m21 0h1m-158 1h1m35 0h1m25 0h1m30 0h1m25 0h1m37 0h1m7 0h1m-175 1h1m9 0h1m9 0h1m1 0h1m3 0h1m5 0h1m8 0h1m4 0h1m18 0h1m8 0h1m12 0h1m38 0h1m15 0h1m7 0h1m23 0h1m-177 1h1m20 0h1m3 0h1m7 0h1m10 0h1m8 0h1m15 0h1m75 0h1m4 0h1m-131 1h1m11 0h1m12 0h1m6 0h1m18 0h1m100 0h1m-169 1h1m21 0h1m8 0h1m49 0h1m23 0h1m35 0h1m-142 1h1m18 0h1m34 0h3m23 0h1m2 0h1m5 0h1m29 1h1m3 0h1m3 0h3m6 0h1m30 0h1m-175 3h1m5 0h1m16 0h1m25 0h1m10 0h1m3 0h1m30 0h1m6 0h1m12 0h1m8 1h2m13 0h1m13 0h1m16 0h1m-72 1h1m0 1h1m-93 1h1m80 1h1m17 0h1m9 0h1m53 0h1m-167 1h1m103 0h1m-31 1h1m25 0h1m-98 1h1m97 0h1m64 0h1m-160 2h1m74 0h1m21 0h1m4 0h1m-110 1h1m169 0h1m-171 1h1m-1 1h1m-5 2h1m114 0h1m5 0h1m2 0h1m51 0h1m-90 1h1m-7 1h1m1 0h1m94 0h1m-98 1h1m9 1h1m-5 1h1m4 0h1m-5 1h1m-5 2h1m2 0h1m9 0h1m8 0h1m-2 1h1m-19 2h1m19 0h1m-15 1h1m12 0h1m-2 1h1m-9 1h1m7 0h1m16 0h1m-43 1h1m26 0h2m-24 1h1m1 0h1m24 0h1m-2 1h1m-24 1h1m22 0h1m11 0h1m-44 1h1m37 0h1m-25 1h1m13 0h1m5 0h1m-9 1h1m3 0h1m-32 1h1m-1 1h1m33 0h1m-31 1h1m-9 1h1m11 0h2m28 1h1m0 1h1m-45 1h1m44 0h1m-35 4h1m2 0h1m16 0h3m-29 3h3m13 0h1m7 0h1m7 0h1m6 0h2m-41 1h1m2 2h1m-5 1h1m0 1h1m7 1h1m35 2h1m-37 2h1m16 0h1m-17 1h1m1 1h1m8 1h1m-26 1h1m2 0h1m-4 4h1m50 0h1m-10 1h1m-36 2h1m-9 1h1m51 0h1m-52 1h1m39 0h1m1 0h1m-41 1h1m31 0h1m-30 1h1m29 0h1m-31 1h1m-6 1h1m2 0h1m43 0h1m2 1h1m-58 1h1m3 1h1m1 0h1m43 0h1m-278 1h1m225 0h1m4 0h1m6 1h1m-237 1h1m0 2h1m-10 2h1m-1 1h1m105 4h1m1 0h1m187 1h1m-59 1h1m58 0h1m-59 1h1m3 0h1m45 0h1m-231 1h1m184 0h1m47 0h1m140 0h1m-374 1h1m172 0h1m195 0h1m-438 1h1m298 0h1m139 0h2m8 0h1m-414 1h1m203 0h1m-157 1h1m-54 1h1m259 0h1m138 0h1m-282 1h1m140 0h1m134 0h1m-419 1h1m416 0h1m-398 1h1m207 1h1m7 0h1m16 0h1m26 0h1m-288 1h1m163 0h1m120 0h1m16 0h1m121 0h1m-336 1h1m12 0h1m59 0h1m258 0h1m-328 1h1m157 1h1m37 0h2m5 0h1m-53 1h1m18 0h1m43 0h1m-71 1h1m7 0h1m18 0h1m15 0h1m4 0h1m-201 1h1m79 0h1m99 0h1m13 0h1m4 0h1m130 0h1m-270 1h1m18 1h1m83 0h1m16 0h1m35 0h1m-199 1h1m131 0h1m13 0h1m47 0h1m137 0h1m-421 1h1m78 0h1m8 0h2m61 0h1m68 0h1m199 0h1m-421 1h1m62 0h1m173 0h1m25 0h1m20 0h1m108 0h1m1 0h1m-147 1h1m4 0h1m27 0h1m154 0h1m-455 1h1m100 0h1m130 0h1m-136 1h1m134 0h1m61 0h1m-277 1h1m95 0h1m1 0h1m5 0h1m115 0h1m23 0h1m2 0h1m27 0h1m9 0h1m2 0h1m3 0h1m98 0h1m-296 1h1m-65 1h1m14 0h1m32 0h1m-1 1h1m150 0h1m10 0h1m4 0h1m2 0h1m26 0h3m4 0h3m2 0h1m125 0h1m-388 1h1m25 0h1m22 0h1m2 0h1m178 0h1m13 0h1m3 0h1m-238 1h1m10 0h1m169 0h1m32 0h1m19 0h1m-236 1h1m183 0h1m65 0h1m-287 1h1m77 0h1m154 0h1m25 0h1m25 0h1m-308 1h1m57 0h1m13 0h1m26 0h1m75 0h1m68 0h1m37 0h1m23 0h1m7 0h1m137 0h1m-396 1h1m1 0h1m115 0h1m76 0h1m3 0h1m26 0h1m-226 1h1m2 0h1m191 0h1m10 0h1m142 0h1m37 0h1m3 0h1m-393 1h1m7 0h1m32 0h1m76 0h1m77 0h1m9 0h1m4 0h1m11 0h1m27 0h1m98 0h1m-365 1h1m14 0h1m8 0h1m3 0h1m235 0h1m-251 1h1m6 0h1m4 0h1m164 0h1m47 0h1m16 0h1m6 0h1m-250 1h1m43 0h1m141 0h1m54 0h1m-261 1h1m204 0h1m13 0h1m39 0h1m8 0h1m100 0h1m47 0h1m-443 1h1m23 0h1m2 0h1m35 0h1m67 0h1m93 0h1m2 0h1m1 0h1m13 0h1m31 0h1m6 0h1m-156 1h1m143 0h1m-244 1h1m35 0h1m66 0h1m2 0h1m137 0h1m166 0h1m-434 1h1m35 0h1m89 0h1m27 0h1m77 0h1m-211 1h1m55 0h1m41 0h1m98 0h1m64 0h1m6 0h1m94 0h1m-394 1h1m5 0h1m102 0h1m8 0h3m6 0h1m102 0h1m46 0h1m9 0h1m4 0h2m8 0h1m89 0h1m1 0h1m-325 1h1m39 0h1m9 0h1m4 0h1m96 0h1m23 0h1m147 0h1m48 0h1m-449 1h1m90 0h1m30 0h1m6 0h2m30 0h1m70 0h1m5 0h1m-192 1h1m44 0h1m132 0h1m3 0h1m78 0h1m-233 1h1m12 0h1m28 0h1m41 0h1m136 0h1m-221 1h1m18 0h1m8 0h1m4 0h1m4 0h1m283 0h1m-353 1h1m59 0h2m15 0h1m162 0h1m-241 1h1m50 0h1m42 0h2m-96 1h1m1 0h1m39 0h1m11 0h2m204 0h1m135 0h1m-444 1h2m1 0h1m96 0h1m1 0h2m23 0h1m106 0h1m5 0h1m67 0h1m131 0h1m2 0h1m-445 1h1m49 0h1m77 0h1m28 0h1m70 0h1m7 0h1m54 0h1m-292 1h2m84 0h1m21 0h1m2 0h1m17 0h1m7 0h2m1 0h1m97 0h1m5 0h1m157 0h1m-317 1h1m20 0h1m4 0h1m2 0h1m1 0h1m24 0h1m4 0h1m95 0h1m-239 1h1m149 0h1m86 0h1m66 0h2m125 0h1m-325 1h1m34 0h1m5 0h1m1 0h1m248 0h1m-401 1h1m65 0h1m4 0h1m77 0h1m250 0h1m-409 1h1m121 0h1m31 0h1m296 0h1m-224 1h1m7 0h1m65 0h1m6 0h1m2 0h1m124 0h1m-314 1h1m102 0h1m9 0h1m65 0h1m-251 1h1m69 0h1m117 0h1m68 1h1m100 0h1m-358 1h1m256 0h1m101 0h2m-362 1h1m358 0h1m33 0h1m-135 1h1m-83 1h1m83 0h1m131 0h1m-216 1h1m84 0h1m130 0h1m4 0h1m-137 1h1m3 0h1m126 0h1m-323 1h1m102 0h1m82 0h1m4 0h1m-93 1h2m1 0h1m-233 1h1m128 0h1m-119 1h1m47 0h1m77 0h1m317 0h1m-398 1h1m99 0h2m-33 1h1m2 0h1m100 0h1m89 0h1m136 0h1m-459 1h1m155 0h2m11 0h1m65 0h1m187 0h1m-297 1h1m106 0h1m-106 1h1m172 0h1m123 0h1m-249 1h3m113 0h1m5 0h1m26 0h1m130 0h1m-316 1h1m151 0h1m6 0h1m155 0h1m-412 1h1m2 0h1m76 0h1m3 0h1m9 0h2m79 0h1m-107 1h1m109 0h1m-183 1h1m127 0h2m1 0h1m-132 1h3m1 0h1m408 0h1m-443 1h1m129 0h1m284 0h1m-431 1h1m42 0h1m12 0h1m-43 1h1m32 0h2m4 0h1m2 0h1m57 0h1m-2 1h1m-135 1h1m75 0h1m92 0h1m76 0h1m-256 1h3m78 0h1m6 0h1m60 0h1m20 0h1m14 0h1m19 0h1m-198 1h1m61 0h1m28 0h1m15 0h1m6 0h1m6 0h1m2 0h1m6 0h1m60 0h1m20 0h1m6 0h1m4 0h2m13 0h1m6 0h1m7 0h1m20 0h2m12 0h1m53 0h4m24 0h1m2 0h1m2 0h3m9 0h1m7 0h1m2 0h1m7 0h2m2 0h4m31 0h1m-443 2h1m-5 1h2m2 0h1m473 0h1m-482 1h2m21 0h1m4 0h3m6 0h1m2 0h1m6 0h1m9 0h1m10 0h1m11 0h1m5 0h1m8 0h4m26 0h3m5 0h1m16 0h1m4 0h1m14 0h1m49 0h2m5 0h1m9 0h1m10 0h1m6 0h1m3 0h1m2 0h1m4 0h1m2 0h1m10 0h1m18 0h2m2 0h1m4 0h1m5 0h1m7 0h3m2 0h1m33 0h1m25 0h1m8 0h3m3 0h1m4 0h1m23 0h1m3 0h1m10 0h1m5 0h1m3 0h1m5 1h1m16 0h1m-5 1h1"/><path stroke="#0b4c7c" d="M0 0m332 181h1m61 4h1m-61 4h1m46 0h1m18 5h1m-11 1h1m-27 7h1m13 1h1m-13 1h1m10 9h1m1 1h1m-12 9h1m11 0h1m3 4h1m-21 1h1m-5 6h1m20 3h1m3 0h1m-4 3h1m-16 1h1m-1 1h1m14 1h1m-18 3h1m20 1h1m-1 1h1m0 1h1m-1 3h1m-5 1h1m5 2h1m-3 1h1m2 7h1m-3 7h1m7 1h1m-86 3h1m77 3h1m-1 3h1m-15 1h1m17 0h1m1 0h1m29 1h1m-4 1h1m26 0h1m-64 1h1m13 0h1m34 0h2m-90 1h1m84 0h1m4 0h1m1 0h1m-14 1h1m-37 1h1m8 1h1m38 0h1m-96 1h1m94 0h1m-155 1h1m35 0h1m117 0h1m4 0h1m2 0h1m-6 1h1m-26 1h1m5 0h1m9 0h1m1 0h1m6 0h1m1 0h1m-169 3h1m144 0h1m-28 2h1m-2 9h1m-1 1h1m-1 1h1m-1 1h1m-120 2h1m118 3h1m-1 1h1m-1 1h1m0 1h1m-5 1h1m-15 2h1m13 0h1m-1 4h1m4 5h1m-36 1h2m17 0h1m15 0h1m-32 1h1m22 0h1m-26 2h1m-3 1h1m32 8h1m-44 3h1m41 0h1m1 3h1m-40 1h1m-9 5h1m48 4h1m-1 1h1m-51 1h1m-2 2h1m0 8h1m52 0h1m0 4h1m-296 11h1m5 0h1m104 3h1m322 5h1m-5 1h1m-3 1h1m17 1h1m-147 1h1m-160 1h1m286 1h1m-434 1h1m451 0h1m-454 1h1m91 3h1m326 0h1m14 1h1m-349 1h1m154 0h1m204 0h1m-410 2h1m401 0h1m-380 1h1m376 0h1m-422 1h1m88 0h1m28 0h2m145 0h1m147 0h1m10 0h1m-317 2h1m12 0h1m294 0h1m0 1h1m2 0h1m12 0h1m-387 1h1m246 0h1m108 0h1m17 0h1m10 0h1m-326 1h1m-108 1h1m105 0h1m187 0h1m-294 1h1m152 0h1m-154 1h1m27 0h1m2 0h1m2 0h1m373 0h1m-409 1h1m275 0h1m131 0h1m-323 1h2m187 0h1m-274 1h1m74 0h1m-65 1h1m41 0h1m24 0h1m66 0h1m69 0h2m2 0h1m170 0h1m25 0h1m-274 1h1m257 0h1m14 0h1m-420 1h1m31 0h1m37 0h1m36 0h1m284 0h1m-359 1h1m35 0h1m38 0h1m-80 1h1m15 0h1m3 0h1m171 0h1m5 0h1m-3 1h1m173 0h1m-363 1h1m12 0h1m90 1h1m250 0h1m-357 1h1m227 0h1m-37 1h1m57 0h1m-275 1h2m114 0h1m3 0h1m101 0h1m-117 1h1m26 0h1m-144 1h1m57 0h1m60 0h1m-6 1h1m28 0h1m123 0h1m5 0h1m10 0h1m-304 1h1m114 0h2m11 0h1m1 0h1m107 0h1m52 0h1m113 0h1m-324 2h1m37 0h1m11 0h1m5 0h1m173 0h1m93 0h1m-311 1h1m36 0h1m14 0h1m11 0h1m140 0h1m134 0h1m-354 1h1m4 0h1m71 0h1m80 0h1m65 0h1m-252 1h1m60 0h1m118 0h1m-183 1h1m55 0h1m14 0h1m3 0h1m-75 1h1m38 0h1m17 0h1m18 0h1m318 0h1m-357 1h1m35 0h2m10 0h1m18 0h1m284 0h1m-325 1h2m25 0h1m97 0h1m188 0h1m7 0h1m-391 1h1m96 0h1m83 0h1m200 0h1m-292 1h1m89 0h1m79 0h1m135 0h1m-376 1h1m3 0h1m65 0h1m6 0h1m152 0h1m5 0h2m3 0h1m135 0h1m-399 1h1m69 0h1m108 0h1m-6 1h1m78 0h1m99 0h1m42 0h1m-376 1h1m169 0h1m194 0h1m-446 1h1m81 0h1m372 0h1m-15 1h1m-442 2h1m3 0h1m449 0h1m-142 1h1m-314 1h1m232 1h1m77 0h1m137 0h1m5 0h1m-225 1h1m220 0h1m-8 2h1m7 0h1m-1 1h1m-221 1h1m86 0h1m128 0h1m6 0h1m-132 1h1m96 0h1m-295 2h1m323 1h1m-127 1h1m127 0h1m-129 1h1m-189 1h1m1 0h1m7 0h2m2 0h1m-11 1h1m18 1h1m165 0h1m-177 1h1m1 0h1m-95 1h1m75 0h1m26 0h1m265 0h1m-297 1h2m13 0h1m280 0h1m-383 1h1m103 1h1m10 0h1m1 0h4m10 0h1m-131 1h1m10 0h1m74 0h1m33 0h1m7 0h1m-166 1h1m101 0h1m8 0h1m7 0h1m6 0h2m6 0h1m10 0h1m7 0h1m-152 1h1m106 0h1m5 0h1m3 0h1m5 0h1m32 0h1m-20 2h1m17 0h1m161 0h1m-273 1h1m55 0h1m5 0h1m9 0h1m9 0h1m19 0h1m6 0h1m6 0h1m1 0h1m-196 1h1m133 0h1m7 0h1m34 0h1m15 0h1m-160 1h1m28 0h1m9 0h1m3 0h1m53 0h1m9 0h1m1 0h1m17 0h1m15 0h1m1 0h1m17 0h1m156 0h1m-362 1h1m10 0h1m141 0h1m13 0h1m105 0h1m19 0h1m153 0h1m-451 2h1m1 1h1m10 0h1m463 1h1m2 1h1"/><path stroke="#0f53b7" d="M0 0m414 177h1m3 0h2m5 0h2m-103 1h2m6 0h2m32 0h2m1 0h2m9 0h2m25 0h1m7 0h1m1 0h1m2 0h1m1 0h1m1 0h1m2 0h1m-96 1h1m1 0h1m35 0h2m8 0h2m32 0h1m3 0h2m1 0h1m1 0h1m1 0h2m-106 1h1m10 0h3m18 0h1m17 0h1m8 0h1m12 0h2m18 0h1m8 0h2m1 0h1m-14 1h1m-77 1h2m-21 1h1m10 0h1m37 0h1m17 0h1m-69 1h1m17 0h1m31 0h1m34 0h1m7 0h1m-78 1h1m49 0h1m18 0h1m5 0h3m2 0h2m-89 1h1m68 0h1m16 0h2m-89 1h1m86 0h1m-88 1h1m8 0h2m3 0h1m12 0h2m54 0h1m-26 1h1m-2 1h1m18 0h1m-20 1h2m7 0h1m5 0h1m-53 1h2m12 2h2m39 0h1m-41 1h1m13 0h1m17 0h1m2 0h2m-52 1h1m13 0h3m13 0h1m1 0h1m14 0h1m-47 1h4m10 0h1m-15 1h1m5 1h2m6 0h1m-10 1h2m29 0h1m-6 3h2m-17 1h1m14 0h1m2 0h1m-1 1h1m0 1h1m-1 1h1m2 0h1m-5 1h2m2 0h1m-1 1h1m-1 1h1m-4 1h1m2 0h1m-4 1h1m2 0h1m-4 1h1m2 0h2m-8 1h1m2 0h4m1 0h1m-9 1h1m2 0h1m3 0h1m0 1h1m-1 1h1m-1 2h1m-2 1h1m-23 1h2m16 0h2m2 0h1m-21 1h1m16 0h1m2 0h1m-21 1h1m2 0h1m16 0h1m-1 1h1m-1 1h1m-1 1h1m-15 1h2m9 0h1m-1 1h1m3 0h1m-22 1h1m21 0h1m-23 1h1m16 0h2m2 0h1m-5 1h2m2 0h1m-35 1h1m33 0h2m-27 1h1m25 1h1m-27 1h1m-1 1h2m20 0h1m2 0h1m-26 1h1m1 0h1m20 0h1m-20 1h2m17 0h1m-20 1h1m10 0h1m6 0h1m-17 1h1m16 1h1m2 0h1m-19 1h1m14 0h1m2 0h1m-21 1h1m1 0h2m2 0h2m13 0h1m-21 1h1m5 0h1m9 0h1m-21 1h2m9 0h1m3 0h1m4 0h1m2 0h2m-12 1h2m5 0h1m2 0h1m-7 1h1m1 0h1m1 0h2m-6 1h3m1 0h1m-2 1h2m3 1h1m-2 1h1m0 1h1m-26 1h1m20 0h1m4 0h1m-6 1h1m3 0h1m-6 1h1m3 0h1m0 1h1m-5 1h1m4 0h1m-5 1h1m2 0h1m-4 1h1m3 0h1m-17 1h1m10 0h1m3 0h1m-33 1h1m27 0h1m3 0h1m-33 1h1m27 0h1m3 0h2m-2 1h1m-1 1h2m-44 3h1m43 0h2m-45 1h1m41 0h1m1 0h2m-46 1h1m42 0h1m1 0h2m-3 1h1m-56 1h2m51 1h1m12 0h1m4 0h2m-20 1h1m-78 1h2m5 0h1m65 0h1m3 0h1m-5 1h1m3 0h1m-1 1h1m-80 1h1m-6 1h1m80 0h1m-1 1h1m4 1h1m-4 1h3m-26 1h1m22 0h1m1 0h1m1 0h1m1 0h1m2 0h3m3 0h2m5 0h2m7 0h1m2 0h1m1 0h1m5 0h3m-162 1h1m11 0h1m30 0h1m1 0h2m30 0h2m14 0h1m24 0h3m2 0h1m8 0h2m4 0h1m10 0h1m5 0h2m4 0h2m1 0h1m12 0h1m-149 1h1m44 0h3m15 0h1m26 0h2m11 0h2m23 0h1m2 0h1m5 0h1m-51 1h1m2 0h1m1 0h1m7 0h2m2 0h1m11 0h1m1 0h1m9 0h1m2 0h1m8 0h1m4 0h1m-67 1h2m6 0h1m2 0h2m25 0h2m9 0h1m1 0h2m1 0h1m3 0h2m5 0h1m1 0h1m-163 1h1m46 0h1m47 0h1m7 0h1m10 0h1m28 0h1m1 0h1m1 0h1m1 0h1m2 0h1m1 0h2m2 0h1m2 0h1m-171 1h1m17 0h1m13 0h2m31 0h2m55 0h1m22 0h1m7 0h1m5 0h4m5 0h2m-171 1h2m31 0h2m10 0h2m6 0h1m63 0h2m27 0h3m2 0h2m6 0h2m1 0h1m4 0h2m-152 1h2m33 0h2m15 0h1m13 0h1m25 0h1m3 0h1m31 0h1m3 0h1m3 0h1m7 0h1m1 0h1m6 0h1m-17 1h1m6 0h1m6 0h1m2 0h1m-169 1h1m53 0h1m31 0h3m62 0h2m5 0h2m5 0h1m-172 1h6m54 0h1m33 0h1m28 0h2m1 0h1m1 0h1m1 0h3m3 0h3m6 0h4m11 0h1m3 0h2m-166 1h1m4 0h1m23 0h2m28 0h1m34 0h1m7 0h1m11 0h1m9 0h4m2 0h1m1 0h1m2 0h2m8 0h1m3 0h1m10 0h2m-162 1h1m98 0h1m24 0h1m4 0h1m1 0h1m2 0h2m10 0h1m13 0h2m3 0h2m-68 1h1m22 0h1m-24 1h1m16 0h1m-1 1h1m4 0h1m-41 1h1m34 0h1m-36 1h1m-1 1h1m35 0h1m0 1h1m-13 1h3m9 0h1m-118 1h2m82 0h2m21 0h1m9 0h1m-118 1h2m81 0h1m32 0h1m-4 1h1m3 0h1m-5 1h2m1 0h1m-2 1h3m4 1h1m-123 1h1m120 0h1m-120 1h1m78 0h2m39 0h1m-6 3h1m-31 1h1m29 0h1m-1 1h1m0 1h1m3 0h1m-6 2h2m3 0h1m-36 1h1m2 0h1m32 0h1m-21 1h1m14 0h1m-28 1h1m10 0h2m13 0h1m-16 1h1m13 0h1m-15 1h2m7 0h1m2 0h1m3 0h1m-34 1h1m16 0h1m7 0h2m6 0h1m1 0h1m-2 1h2m-16 1h1m2 0h2m8 0h1m-14 1h4m9 0h1m-33 1h1m18 0h1m1 0h1m-22 1h1m5 0h1m12 0h1m12 0h2m-32 1h1m30 0h1m-32 1h1m31 0h1m-34 1h2m30 0h1m-2 1h1m-44 1h1m41 1h1m1 2h1m0 1h1m-1 1h1m-1 1h1m-34 2h1m31 0h2m-44 1h1m9 0h2m30 0h2m-43 3h1m-1 1h1m43 0h1m-45 1h1m2 0h1m40 0h1m-40 1h1m39 0h1m-41 1h3m37 0h1m-50 1h1m48 0h1m-50 1h1m48 0h1m-51 2h1m13 0h3m14 0h1m-32 1h1m15 0h1m-16 1h1m49 0h1m-50 1h1m49 0h2m-55 1h1m48 0h2m1 0h2m-55 1h1m4 0h1m44 0h1m3 0h1m-54 1h1m1 0h1m46 0h2m-49 1h1m50 1h1m-1 1h1m-13 3h2m-43 1h1m51 0h2m-52 1h1m50 0h2m-53 1h1m4 0h1m47 0h1m-54 1h1m53 0h1m-51 1h1m49 0h1m-53 1h3m49 0h1m-62 1h1m9 0h1m-5 1h1m48 1h1m5 0h1m-290 1h1m283 0h1m4 0h1m-291 1h2m288 0h1m-289 1h2m-2 1h1m0 1h1m-4 2h1m1 0h1m-2 1h1m1 0h1m-2 1h1m289 1h2m-192 1h1m191 0h1m-191 1h1m188 0h2m-249 1h1m56 0h2m181 0h1m7 0h1m-10 1h1m7 0h2m-240 1h1m181 0h2m46 0h2m7 0h1m134 0h1m-193 1h2m47 0h1m7 0h1m134 0h1m-401 1h3m397 0h1m-408 1h1m5 0h3m9 0h1m385 0h1m1 0h2m-403 1h2m26 0h1m14 0h1m155 0h1m67 0h1m129 0h2m1 0h2m4 0h1m3 0h1m-212 1h1m194 0h1m3 0h3m9 0h1m-420 1h2m81 0h1m313 0h1m2 0h1m1 0h2m4 0h1m9 0h1m2 0h1m-421 1h2m115 0h1m277 0h1m4 0h1m2 0h1m4 0h1m8 0h3m-420 1h1m19 0h1m255 0h1m116 0h3m1 0h1m1 0h4m5 0h2m4 0h3m5 0h1m-420 1h2m15 0h3m375 0h1m10 0h1m3 0h1m2 0h1m4 0h1m-402 1h2m48 0h1m15 0h2m43 0h1m84 0h1m37 0h1m13 0h1m144 0h1m1 0h1m-147 1h1m122 0h1m17 0h1m2 0h1m2 0h1m-371 1h1m10 0h1m33 0h1m3 0h1m3 0h1m114 0h1m177 0h5m3 0h3m7 0h1m2 0h2m1 0h1m-371 1h2m12 0h1m1 0h1m27 0h2m118 0h1m66 0h2m112 0h1m3 0h2m3 0h3m5 0h2m5 0h2m-409 1h1m22 0h1m15 0h1m10 0h2m21 0h2m25 0h2m99 0h2m40 0h1m26 0h1m110 0h1m4 0h1m13 0h1m1 0h1m4 0h2m1 0h1m3 0h1m-425 1h5m4 0h3m21 0h2m23 0h3m22 0h2m25 0h2m95 0h1m7 0h1m36 0h2m26 0h1m110 0h1m4 0h1m8 0h1m4 0h1m7 0h1m4 0h1m-423 1h1m4 0h4m48 0h1m58 0h1m163 0h1m110 0h5m10 0h3m8 0h1m5 0h1m-424 1h2m3 0h2m12 0h2m36 0h1m176 0h1m36 0h1m8 0h1m105 0h1m1 0h1m2 0h1m6 0h1m5 0h3m1 0h1m2 0h2m-413 1h2m26 0h2m45 0h1m130 0h1m27 0h2m15 0h1m27 0h1m104 0h1m4 0h1m9 0h1m4 0h1m4 0h1m1 0h2m8 0h2m-440 1h1m23 0h6m15 0h2m2 0h2m59 0h1m12 0h1m162 0h2m9 0h1m102 0h1m1 0h1m3 0h1m3 0h1m17 0h1m9 0h2m-441 1h1m1 0h2m20 0h3m1 0h1m2 0h1m19 0h1m30 0h1m28 0h1m12 0h2m141 0h1m30 0h1m102 0h1m1 0h1m2 0h1m22 0h1m4 0h3m1 0h1m1 0h1m-441 1h1m1 0h1m21 0h1m4 0h2m35 0h1m25 0h2m17 0h1m24 0h1m18 0h1m131 0h1m10 0h1m99 0h1m3 0h2m3 0h1m11 0h1m14 0h1m4 0h2m-454 1h1m13 0h1m1 0h1m61 0h1m44 0h3m22 0h2m162 0h1m101 0h2m1 0h3m1 0h3m8 0h2m1 0h1m6 0h1m5 0h1m3 0h2m-377 1h1m2 0h1m42 0h2m24 0h1m162 0h1m100 0h2m14 0h3m1 0h1m2 0h1m2 0h1m3 0h1m4 0h1m-401 1h1m27 0h5m15 0h1m4 0h2m15 0h2m2 0h1m17 0h1m8 0h1m1 0h3m80 0h2m77 0h1m98 0h1m2 0h1m4 0h1m6 0h1m1 0h1m1 0h1m1 0h1m3 0h2m1 0h4m-412 1h1m14 0h2m27 0h2m2 0h2m33 0h1m24 0h1m4 0h1m5 0h3m79 0h2m59 0h1m17 0h2m96 0h1m4 0h1m2 0h2m1 0h1m5 0h4m2 0h1m3 0h1m-424 1h1m1 0h1m2 0h1m11 0h3m13 0h2m4 0h1m3 0h1m37 0h2m10 0h1m142 0h2m17 0h1m141 0h1m2 0h1m1 0h2m2 0h1m2 0h1m2 0h1m6 0h1m2 0h1m-424 1h1m1 0h1m1 0h1m1 0h1m12 0h1m1 0h2m19 0h1m1 0h1m36 0h1m1 0h2m9 0h1m4 0h2m1 0h2m44 0h1m6 0h1m2 0h1m104 0h2m133 0h1m3 0h2m2 0h1m2 0h1m1 0h1m11 0h1m7 0h1m-431 1h1m17 0h1m1 0h1m12 0h1m1 0h1m3 0h2m1 0h2m23 0h2m11 0h1m1 0h1m15 0h1m45 0h1m1 0h3m112 0h2m135 0h1m2 0h1m1 0h2m1 0h2m2 0h1m2 0h4m5 0h1m13 0h1m-432 1h1m3 0h1m7 0h3m47 0h2m14 0h1m28 0h2m29 0h1m2 0h1m2 0h1m88 0h1m39 0h1m1 0h1m113 0h1m2 0h1m3 0h1m1 0h1m3 0h2m2 0h2m1 0h1m1 0h1m5 0h1m-414 1h1m5 0h3m22 0h4m24 0h1m13 0h2m5 0h1m1 0h2m21 0h1m10 0h1m5 0h3m10 0h2m75 0h1m16 0h1m158 0h1m4 0h3m2 0h1m1 0h5m3 0h1m4 0h1m-416 1h1m1 0h2m3 0h1m16 0h1m7 0h1m14 0h1m5 0h2m5 0h1m1 0h1m13 0h1m6 0h1m1 0h2m17 0h1m2 0h1m4 0h2m3 0h2m5 0h3m92 0h1m172 0h2m2 0h2m2 0h1m2 0h1m2 0h1m2 0h2m2 0h1m12 0h1m-425 1h2m2 0h4m15 0h1m3 0h1m1 0h1m8 0h2m12 0h1m4 0h1m2 0h1m19 0h1m11 0h1m9 0h1m3 0h6m3 0h2m22 0h1m1 0h2m84 0h1m160 0h2m4 0h1m6 0h1m2 0h1m1 0h1m5 0h1m9 0h2m1 0h1m-425 1h1m11 0h2m8 0h1m5 0h1m7 0h1m2 0h1m2 0h1m1 0h1m3 0h1m2 0h1m8 0h2m40 0h1m3 0h1m1 0h2m14 0h1m100 0h3m2 0h1m25 0h1m33 0h1m95 0h1m17 0h1m6 0h1m1 0h3m5 0h2m-448 1h1m16 0h1m6 0h2m11 0h1m1 0h1m7 0h1m1 0h1m12 0h1m1 0h1m1 0h5m3 0h2m7 0h3m3 0h1m21 0h1m1 0h2m9 0h1m5 0h1m13 0h2m3 0h2m89 0h1m65 0h2m8 0h1m93 0h2m10 0h1m2 0h1m10 0h1m2 0h1m6 0h1m6 0h1m-454 1h3m14 0h1m6 0h3m10 0h3m27 0h1m6 0h2m10 0h2m23 0h2m1 0h2m13 0h2m12 0h3m2 0h2m91 0h2m1 0h2m8 0h2m12 0h1m37 0h2m8 0h1m91 0h2m1 0h1m10 0h2m1 0h1m26 0h2m-455 1h1m1 0h1m15 0h1m8 0h3m46 0h2m9 0h2m23 0h4m10 0h1m4 0h4m10 0h1m1 0h2m1 0h1m6 0h1m85 0h1m12 0h1m50 0h1m8 0h1m93 0h2m6 0h1m6 0h1m24 0h1m4 0h1m-455 1h1m16 0h1m8 0h1m2 0h1m25 0h1m1 0h1m10 0h1m1 0h1m20 0h1m34 0h2m2 0h1m10 0h5m2 0h1m1 0h1m91 0h1m1 0h1m9 0h1m26 0h1m34 0h1m91 0h1m2 0h1m5 0h5m27 0h1m3 0h1m1 0h1m-457 1h1m1 0h1m24 0h2m1 0h3m23 0h1m21 0h2m12 0h2m11 0h1m33 0h1m6 0h1m1 0h1m1 0h2m8 0h1m1 0h1m1 0h2m3 0h1m74 0h3m59 0h1m10 0h1m93 0h1m6 0h2m13 0h2m6 0h2m11 0h2m-455 1h1m16 0h1m13 0h2m44 0h3m11 0h2m5 0h3m36 0h2m8 0h2m2 0h2m5 0h1m3 0h1m1 0h1m80 0h2m9 0h1m60 0h1m91 0h1m19 0h3m3 0h1m3 0h1m2 0h2m4 0h3m1 0h1m-439 1h1m2 0h1m1 0h6m6 0h1m1 0h1m2 0h1m43 0h5m6 0h2m5 0h2m45 0h2m1 0h1m3 0h3m3 0h1m5 0h1m8 0h1m72 0h1m5 0h1m2 0h1m61 0h1m90 0h1m9 0h2m9 0h1m5 0h1m4 0h2m1 0h1m5 0h2m1 0h3m-440 1h2m2 0h1m3 0h1m6 0h1m49 0h3m7 0h1m41 0h1m21 0h1m3 0h1m3 0h1m1 0h1m80 0h1m1 0h1m4 0h1m3 0h1m40 0h2m6 0h1m11 0h1m100 0h2m7 0h2m1 0h1m4 0h1m6 0h2m4 0h1m2 0h1m-438 1h1m4 0h1m2 0h1m1 0h1m4 0h1m53 0h2m1 0h1m3 0h2m40 0h1m5 0h2m14 0h3m1 0h1m2 0h1m1 0h1m4 0h1m75 0h3m7 0h1m33 0h2m7 0h1m17 0h1m1 0h1m94 0h1m14 0h3m3 0h3m6 0h2m1 0h1m2 0h1m-433 1h1m2 0h1m3 0h1m1 0h1m54 0h1m2 0h2m1 0h1m3 0h2m1 0h1m37 0h1m2 0h2m15 0h7m3 0h1m91 0h1m1 0h2m31 0h2m4 0h1m13 0h2m5 0h2m93 0h5m13 0h1m3 0h1m9 0h1m1 0h2m2 0h1m-433 1h1m5 0h1m4 0h1m58 0h1m4 0h4m1 0h1m11 0h1m7 0h2m12 0h1m1 0h1m7 0h1m9 0h1m7 0h1m2 0h1m92 0h1m34 0h1m1 0h2m2 0h1m11 0h1m2 0h1m2 0h1m93 0h1m1 0h3m2 0h1m14 0h4m11 0h2m3 0h1m-449 1h1m12 0h1m1 0h1m3 0h1m73 0h4m10 0h1m49 0h3m3 0h2m75 0h1m49 0h1m8 0h1m5 0h2m100 0h2m27 0h3m1 0h3m1 0h3m1 0h1m1 0h2m-454 1h2m14 0h2m39 0h1m37 0h1m12 0h2m8 0h1m1 0h1m1 0h1m2 0h1m9 0h2m6 0h1m20 0h3m75 0h2m50 0h1m112 0h1m2 0h4m23 0h2m2 0h1m4 0h3m-450 1h1m1 0h1m7 0h1m5 0h1m2 0h1m68 0h1m7 0h4m11 0h1m7 0h1m2 0h1m14 0h1m5 0h1m7 0h2m13 0h1m127 0h1m22 0h1m1 0h3m89 0h1m1 0h2m24 0h1m3 0h1m1 0h3m9 0h1m-457 1h3m54 0h1m29 0h1m2 0h1m17 0h1m2 0h2m5 0h1m3 0h1m7 0h1m6 0h1m2 0h1m94 0h1m9 0h2m46 0h1m11 0h1m1 0h1m8 0h2m2 0h1m89 0h1m26 0h2m4 0h1m1 0h2m6 0h2m-455 1h1m1 0h1m55 0h1m28 0h1m1 0h1m6 0h2m8 0h2m2 0h1m2 0h1m7 0h1m1 0h1m13 0h1m26 0h1m1 0h1m2 0h1m73 0h1m50 0h2m10 0h2m13 0h1m88 0h1m12 0h1m11 0h3m2 0h3m1 0h1m1 0h1m1 0h2m-449 1h1m55 0h1m31 0h3m14 0h1m2 0h1m3 0h1m8 0h2m4 0h2m32 0h2m73 0h1m3 0h1m1 0h1m51 0h1m25 0h1m88 0h1m23 0h1m3 0h3m2 0h1m3 0h1m1 0h1m-392 1h1m49 0h1m3 0h1m7 0h3m7 0h1m8 0h2m5 0h2m11 0h5m72 0h1m2 0h2m55 0h1m23 0h1m89 0h4m17 0h2m1 0h1m5 0h1m3 0h1m-349 1h1m11 0h1m4 0h2m9 0h1m4 0h3m3 0h1m2 0h1m1 0h1m4 0h1m1 0h1m6 0h3m5 0h1m158 0h1m111 0h4m8 0h1m8 0h2m-399 1h1m26 0h1m1 0h1m1 0h5m2 0h2m5 0h1m9 0h2m9 0h2m6 0h2m3 0h1m1 0h4m6 0h1m4 0h1m2 0h2m4 0h1m68 0h1m22 0h1m66 0h1m91 0h1m4 0h1m18 0h2m1 0h1m4 0h2m9 0h1m-374 1h1m1 0h1m1 0h1m4 0h1m2 0h2m16 0h1m10 0h1m7 0h1m2 0h2m2 0h3m3 0h1m3 0h1m5 0h1m1 0h2m4 0h1m67 0h1m5 0h2m14 0h1m67 0h1m119 0h1m-431 1h1m66 0h1m5 0h1m6 0h1m1 0h1m16 0h1m11 0h3m1 0h3m2 0h1m14 0h2m8 0h2m78 0h1m13 0h1m189 0h1m6 0h1m-439 1h1m69 0h1m2 0h1m7 0h1m1 0h2m24 0h2m2 0h1m1 0h2m5 0h1m5 0h1m8 0h1m8 0h1m2 0h1m4 0h2m78 0h1m6 0h2m48 0h2m13 0h3m93 0h1m27 0h1m11 0h1m-434 1h1m38 0h1m23 0h1m9 0h1m25 0h1m5 0h1m1 0h1m2 0h2m108 0h1m6 0h1m4 0h1m51 0h1m4 0h1m2 0h1m2 0h1m7 0h1m89 0h2m25 0h1m1 0h1m10 0h1m3 0h1m-439 1h1m1 0h1m58 0h1m3 0h1m31 0h1m28 0h1m16 0h1m71 0h1m5 0h1m63 0h1m3 0h2m2 0h1m2 0h2m5 0h3m94 0h2m18 0h1m2 0h1m10 0h1m3 0h1m-454 1h1m15 0h1m38 0h1m56 0h1m44 0h1m78 0h1m10 0h1m59 0h1m12 0h1m87 0h1m6 0h2m19 0h2m6 0h1m8 0h1m-455 1h1m1 0h1m78 0h1m73 0h2m2 0h1m70 0h2m6 0h1m71 0h1m10 0h1m93 0h3m19 0h1m8 0h1m3 0h2m-451 1h2m76 0h1m45 0h1m32 0h2m70 0h1m208 0h3m1 0h1m3 0h3m-451 1h3m231 0h2m4 0h1m81 0h1m115 0h1m3 0h1m1 0h1m2 0h2m-450 1h2m1 0h2m52 0h1m265 0h1m115 0h2m5 0h2m-447 1h1m55 0h1m385 0h3m1 0h1m-447 1h1m1 0h1m308 0h1m11 0h2m120 0h1m10 0h1m-456 1h1m229 0h1m79 0h1m1 0h1m7 0h1m1 0h2m121 0h2m-218 1h1m80 0h1m10 0h2m117 0h2m-212 1h1m80 0h1m2 0h1m8 0h1m92 0h1m20 0h3m2 0h1m3 0h1m6 0h1m-223 1h2m79 0h1m1 0h1m3 0h2m3 0h1m118 0h1m1 0h2m5 0h1m-139 1h1m9 0h1m130 0h1m-456 1h1m232 0h1m81 0h1m3 0h1m4 0h1m128 0h1m-455 1h1m1 0h1m231 0h2m80 0h1m138 0h1m-439 1h1m216 0h1m185 0h1m19 0h2m6 0h1m1 0h1m-449 1h1m13 0h1m1 0h1m109 0h1m192 0h2m99 0h1m17 0h1m9 0h1m-450 1h1m15 0h1m109 0h1m103 0h2m88 0h1m100 0h2m17 0h3m-315 1h1m190 0h2m113 0h1m17 0h1m-437 1h1m136 0h2m165 0h1m5 0h1m96 0h2m27 0h1m3 0h1m-457 1h1m14 0h1m1 0h1m139 0h1m168 0h1m96 0h2m15 0h2m13 0h1m-455 1h1m14 0h1m109 0h1m1 0h2m8 0h1m3 0h5m2 0h1m2 0h3m5 0h4m69 0h1m189 0h1m16 0h1m1 0h1m11 0h1m1 0h1m-458 1h1m1 0h1m127 0h5m16 0h1m6 0h1m3 0h1m2 0h2m159 0h1m98 0h1m15 0h2m11 0h1m1 0h1m-456 1h1m131 0h3m2 0h1m2 0h1m2 0h1m2 0h1m4 0h1m4 0h1m1 0h1m3 0h1m162 0h1m117 0h3m7 0h2m1 0h1m-455 1h1m128 0h1m1 0h1m1 0h2m1 0h2m1 0h2m1 0h2m1 0h1m6 0h1m2 0h1m3 0h1m4 0h1m131 0h1m25 0h1m119 0h1m1 0h1m-446 1h1m1 0h1m53 0h1m74 0h1m4 0h1m2 0h1m5 0h2m8 0h4m125 0h1m41 0h2m115 0h2m4 0h2m-452 1h1m2 0h1m53 0h1m91 0h1m75 0h1m38 0h1m63 0h1m-328 1h2m41 0h1m12 0h1m70 0h1m40 0h1m8 0h2m1 0h1m146 0h1m-313 1h1m31 0h1m7 0h1m82 0h3m10 0h3m6 0h1m4 0h3m6 0h1m4 0h1m263 0h1m-444 1h1m7 0h2m4 0h1m1 0h1m38 0h1m55 0h3m10 0h2m2 0h1m1 0h1m6 0h2m1 0h4m4 0h1m1 0h1m2 0h2m12 0h1m159 0h1m-329 1h1m1 0h1m13 0h1m26 0h1m75 0h1m1 0h3m1 0h1m1 0h1m6 0h1m21 0h1m3 0h2m1 0h1m3 0h1m4 0h2m154 0h1m-328 1h1m7 0h1m5 0h1m40 0h2m55 0h1m2 0h1m6 0h1m2 0h1m2 0h1m6 0h1m5 0h2m6 0h1m1 0h5m2 0h1m9 0h1m1 0h1m4 0h1m151 0h1m120 0h1m-450 1h1m1 0h1m6 0h2m32 0h1m1 0h1m3 0h3m64 0h2m1 0h1m2 0h1m1 0h1m1 0h1m3 0h1m2 0h1m1 0h1m14 0h2m2 0h2m1 0h1m2 0h1m4 0h2m3 0h2m156 0h1m119 0h3m-450 1h1m1 0h1m5 0h1m33 0h1m5 0h1m6 0h1m61 0h1m3 0h1m1 0h2m1 0h1m3 0h2m1 0h2m1 0h2m2 0h1m2 0h1m4 0h1m9 0h2m6 0h3m1 0h1m2 0h1m4 0h1m268 0h1m1 0h1m-475 1h1m23 0h1m1 0h1m40 0h1m67 0h1m2 0h2m7 0h2m1 0h1m6 0h1m2 0h2m2 0h3m1 0h2m7 0h1m2 0h1m4 0h4m13 0h1m1 0h1m268 0h2m-476 1h1m4 0h1m20 0h1m41 0h1m68 0h1m3 0h1m8 0h1m3 0h1m2 0h3m2 0h1m3 0h2m14 0h2m2 0h4m12 0h1m1 0h1m266 0h1m-478 1h2m1 0h1m1 0h1m3 0h2m1 0h2m17 0h1m111 0h1m4 0h1m11 0h1m2 0h1m2 0h2m1 0h1m3 0h2m1 0h1m26 0h1m1 0h1m3 0h1m1 0h1m3 0h1m251 0h2m9 0h1m2 0h1m-481 1h2m1 0h1m4 0h2m15 0h5m1 0h2m1 0h1m2 0h5m1 0h1m3 0h1m3 0h2m1 0h2m2 0h1m3 0h2m4 0h1m1 0h1m2 0h1m1 0h3m2 0h6m1 0h1m3 0h1m1 0h3m8 0h1m1 0h5m1 0h1m3 0h1m3 0h1m1 0h2m2 0h2m1 0h2m1 0h2m1 0h3m1 0h3m1 0h1m2 0h2m2 0h2m2 0h1m1 0h1m2 0h1m2 0h4m1 0h2m1 0h6m5 0h1m1 0h1m2 0h3m4 0h1m2 0h3m1 0h4m1 0h1m1 0h3m1 0h3m1 0h2m1 0h1m3 0h1m1 0h1m1 0h1m1 0h2m4 0h2m2 0h1m4 0h1m1 0h2m1 0h1m4 0h1m1 0h2m1 0h2m1 0h1m1 0h1m1 0h1m2 0h1m3 0h1m1 0h1m3 0h3m4 0h1m5 0h1m9 0h4m1 0h1m1 0h1m3 0h1m2 0h1m3 0h2m4 0h1m1 0h2m1 0h2m3 0h2m1 0h4m1 0h1m1 0h1m2 0h3m10 0h4m2 0h2m1 0h1m1 0h6m2 0h2m1 0h2m1 0h1m1 0h4m2 0h1m1 0h1m1 0h3m3 0h1m1 0h2m1 0h1m4 0h2m9 0h2m4 0h3m2 0h1m2 0h6m2 0h1m3 0h4m1 0h4m2 0h1m1 0h12m1 0h2m5 0h3m-487 1h2m31 0h2m2 0h3m4 0h3m1 0h3m2 0h1m2 0h2m1 0h3m2 0h4m3 0h2m1 0h1m10 0h2m2 0h2m1 0h1m12 0h1m5 0h1m5 0h3m4 0h2m1 0h1m12 0h3m1 0h2m2 0h2m2 0h2m3 0h2m3 0h3m1 0h2m6 0h1m1 0h1m2 0h2m9 0h1m15 0h2m17 0h2m6 0h2m1 0h2m1 0h4m3 0h1m7 0h2m4 0h2m2 0h1m1 0h2m1 0h3m1 0h1m1 0h3m8 0h1m1 0h3m2 0h1m2 0h1m1 0h1m6 0h1m1 0h1m1 0h1m1 0h1m1 0h2m1 0h3m2 0h4m4 0h1m2 0h3m11 0h2m33 0h6m7 0h2m5 0h2m1 0h2m4 0h4m13 0h4m6 0h2m6 0h2m3 0h1m9 0h7m1 0h3m1 0h5m1 0h2m5 0h2m-486 1h1m32 0h1m1 0h1m9 0h1m9 0h2m10 0h2m16 0h1m9 0h2m7 0h2m3 0h2m14 0h2m16 0h2m6 0h2m11 0h1m2 0h1m4 0h1m1 0h1m1 0h2m27 0h1m1 0h1m15 0h2m7 0h1m20 0h1m6 0h1m14 0h1m10 0h1m6 0h1m2 0h2m6 0h1m4 0h1m10 0h1m12 0h1m59 0h1m8 0h1m1 0h1m18 0h1m13 0h1m24 0h1m3 0h2m7 0h1m1 0h2m-12 1h1m7 0h3m3 0h2m-6 1h1m1 0h2m-2 1h1"/><path stroke="#077d0c" d="M0 0m408 176h2m-97 1h2m4 0h2m6 0h2m5 0h3m1 0h10m1 0h3m1 0h3m1 0h3m4 0h1m7 0h1m1 0h6m2 0h5m3 0h4m1 0h2m1 0h2m-84 1h1m-6 3h1m16 0h1m13 0h2m1 0h8m6 0h2m5 0h1m1 0h3m3 0h2m3 0h1m1 0h1m5 0h6m10 0h2m1 0h3m-97 1h1m9 0h1m30 0h1m4 0h1m16 0h1m2 0h1m3 0h1m3 0h1m8 0h1m6 0h1m5 0h1m-96 1h1m7 0h1m2 0h1m13 0h1m13 0h1m5 0h1m18 0h1m29 0h1m-94 1h1m8 0h3m5 0h1m7 0h1m12 0h1m10 0h1m24 0h1m-72 1h1m8 0h2m9 0h1m2 0h1m23 0h1m3 0h1m3 0h1m3 0h1m7 0h1m4 0h1m14 0h1m10 0h1m-88 1h2m21 0h1m13 0h1m3 0h1m1 0h1m3 0h1m5 0h1m2 0h1m5 0h1m6 0h1m17 0h1m-96 1h1m8 0h1m7 0h1m4 0h1m11 0h1m1 0h1m2 0h1m6 0h1m14 0h1m32 0h1m-93 1h1m17 0h2m14 0h1m2 0h1m21 0h1m9 0h1m10 0h1m-78 1h1m16 0h1m5 0h1m4 0h1m2 0h1m41 0h2m1 0h1m7 0h2m-83 1h1m6 0h3m11 0h1m3 0h1m2 0h1m3 0h1m27 0h1m19 0h1m-80 1h2m6 0h4m19 0h1m6 0h1m5 0h1m33 0h1m-77 1h1m7 0h2m1 0h1m14 0h1m2 0h1m5 0h1m7 0h1m5 0h1m22 0h3m-74 1h1m8 0h2m8 0h1m5 0h1m2 0h1m9 0h2m18 0h1m-56 1h1m7 0h1m3 0h2m16 0h1m3 0h1m2 0h1m9 0h1m-46 1h1m26 0h1m3 0h1m29 0h1m-61 1h2m23 0h1m3 0h1m14 0h1m4 0h1m-47 1h1m20 0h1m3 0h1m10 0h2m3 0h1m2 0h1m7 0h2m-53 1h1m7 0h1m40 0h2m-18 1h1m14 0h1m-45 1h1m9 0h1m1 0h1m28 0h2m-41 1h2m26 0h1m8 0h1m-35 1h1m23 0h1m7 0h2m-33 1h2m20 0h1m7 0h1m-28 1h1m7 0h1m9 0h1m8 0h1m-26 1h1m6 0h1m4 0h1m1 0h1m3 0h1m-19 1h1m7 0h1m8 0h1m-18 1h1m3 0h1m4 0h1m6 0h1m-17 1h1m3 0h1m5 0h1m-11 1h1m3 0h1m4 0h1m6 0h1m-17 1h1m3 0h1m3 0h1m8 0h1m-18 1h1m6 0h1m4 0h1m1 0h1m3 0h1m-13 1h1m4 0h1m3 0h1m-12 1h2m4 0h1m5 0h1m-8 1h1m7 0h2m-11 2h4m1 0h4m-22 1h1m-2 1h1m13 2h5m1 0h4m-25 1h1m9 0h1m5 0h1m7 0h1m-25 1h1m9 0h1m11 0h1m5 0h1m-19 1h1m15 0h2m-28 1h1m14 0h1m9 0h1m-26 1h1m15 0h1m6 0h1m6 0h1m-15 1h1m6 0h1m-24 1h1m23 0h2m-26 1h1m26 0h1m-28 1h1m11 0h1m3 0h3m3 0h1m5 0h1m-29 1h1m8 0h1m13 0h1m1 1h1m-13 1h1m13 0h1m-28 1h1m11 0h1m-13 1h1m28 0h1m-30 1h1m27 0h1m-29 1h1m25 0h2m-28 1h1m8 1h1m7 0h1m5 0h1m-24 1h1m8 0h1m8 0h2m1 0h1m5 0h1m-28 1h1m8 0h1m14 0h1m-16 1h1m13 0h1m-24 1h1m8 0h1m-10 1h1m-1 1h1m19 0h2m5 0h1m-28 1h1m-1 1h1m8 0h1m-9 1h3m10 0h1m-12 1h1m23 0h2m-19 1h2m-9 1h1m5 0h1m-7 1h1m25 0h1m-27 1h1m8 0h1m14 0h1m-25 1h1m4 0h2m5 0h1m16 0h1m-30 1h1m3 0h1m2 0h1m6 0h1m4 0h2m-21 1h1m3 0h1m3 0h2m5 0h1m2 0h1m-19 1h1m16 0h1m6 0h1m-25 1h1m12 0h1m7 0h1m-10 1h2m-15 1h1m-1 1h1m16 0h1m1 0h1m6 0h1m-27 1h1m7 0h1m13 0h1m5 0h1m-29 1h1m6 0h1m4 0h1m10 0h1m6 0h1m-31 1h1m10 0h1m12 0h1m-15 1h2m1 0h2m1 0h2m5 0h3m-30 1h3m-4 1h1m-9 1h3m1 0h1m49 0h4m-37 1h7m3 0h8m1 0h2m16 0h1m-68 1h2m17 0h2m10 0h1m17 0h1m22 0h2m-79 1h4m14 0h4m9 0h2m4 0h1m15 0h1m4 0h2m19 0h2m-83 1h1m16 0h1m10 0h1m4 0h1m1 0h1m4 0h1m13 0h1m4 0h1m23 0h1m2 0h3m-96 1h2m17 0h1m15 0h1m4 0h1m2 0h1m4 0h1m11 0h1m4 0h1m2 0h1m28 0h2m-101 1h1m16 0h4m16 0h1m4 0h1m3 0h1m5 0h1m8 0h1m8 0h1m30 0h3m-111 1h4m15 0h4m21 0h1m10 0h1m4 0h1m6 0h1m2 0h1m41 0h1m-115 1h1m15 0h4m26 0h1m11 0h1m4 0h1m2 0h2m3 0h1m30 0h2m1 0h1m10 0h5m-129 1h5m14 0h2m33 0h1m12 0h1m4 0h2m4 0h1m35 0h2m14 0h2m-137 1h4m16 0h1m38 0h1m3 0h1m18 0h1m41 0h1m13 0h3m-144 1h2m16 0h2m42 0h1m3 0h1m17 0h1m44 0h2m14 0h3m-153 1h3m1 0h1m14 0h1m47 0h1m3 0h1m17 0h1m47 0h5m12 0h2m-161 1h4m16 0h3m49 0h1m3 0h1m10 0h1m18 0h1m23 0h1m16 0h1m14 0h1m-167 1h3m16 0h4m53 0h1m3 0h1m13 0h1m1 0h1m13 0h1m14 0h3m4 0h1m7 0h1m11 0h1m17 0h2m-175 1h2m15 0h4m10 0h4m1 0h3m9 0h14m1 0h6m2 0h5m7 0h1m12 0h1m3 0h1m12 0h1m-101 1h1m9 0h3m57 0h1m11 0h1m5 0h1m78 0h1m-159 1h1m3 0h1m67 0h1m7 0h1m4 0h1m15 0h4m23 0h1m29 0h1m-183 1h1m6 0h1m5 0h1m8 0h1m8 0h3m1 0h4m13 0h2m1 0h3m1 0h1m10 0h4m15 0h1m15 0h1m30 0h1m18 0h1m16 0h2m8 0h1m-183 1h1m3 0h3m14 0h1m16 0h1m4 0h1m1 0h1m13 0h1m2 0h1m2 0h1m22 0h1m4 0h1m18 0h1m65 0h1m3 0h1m-183 1h1m2 0h1m38 0h1m23 0h1m8 0h1m4 0h1m6 0h1m25 0h1m10 0h3m26 0h1m28 0h1m-183 1h1m8 0h1m1 0h1m4 0h1m3 0h1m11 0h1m8 0h1m10 0h1m14 0h1m10 0h1m1 0h1m3 0h1m1 0h1m3 0h1m23 0h1m8 0h1m55 0h1m2 0h1m-183 1h1m7 0h1m3 0h1m4 0h1m1 0h1m13 0h1m6 0h1m12 0h1m14 0h1m9 0h1m1 0h1m4 0h1m3 0h1m21 0h1m14 0h1m52 0h1m2 0h1m-183 1h1m29 0h1m28 0h1m9 0h1m7 0h1m2 0h1m44 0h1m53 0h1m2 0h1m-175 1h6m9 0h3m1 0h4m7 0h10m1 0h2m8 0h2m3 0h6m7 0h3m8 0h2m1 0h2m6 0h4m2 0h5m14 0h1m54 0h1m2 0h1m-71 1h1m27 0h3m1 0h2m32 0h1m3 0h1m-1 1h1m-1 1h1m-176 1h1m5 0h10m1 0h6m2 0h17m1 0h10m1 0h3m1 0h14m5 0h1m1 0h9m10 0h2m1 0h3m1 0h3m67 0h1m-175 1h1m3 0h1m71 0h1m9 0h1m7 0h1m13 0h1m9 0h4m8 0h1m1 0h3m2 0h1m5 0h2m1 0h7m2 0h3m2 0h2m5 0h2m-176 1h1m3 0h1m2 0h1m3 0h1m66 0h1m4 0h1m7 0h1m10 0h1m67 0h1m3 0h1m1 0h1m3 0h1m-181 1h1m3 0h1m2 0h1m70 0h1m3 0h1m7 0h1m4 0h2m6 0h1m66 0h1m3 0h1m1 0h1m3 0h1m-181 1h1m3 0h1m6 0h1m66 0h1m10 0h1m4 0h1m5 0h1m3 0h1m65 0h1m3 0h1m1 0h1m3 0h1m-181 1h1m3 0h1m2 0h1m3 0h1m66 0h1m14 0h1m7 0h1m72 0h1m5 0h1m-181 1h1m6 0h1m3 0h1m66 0h1m7 0h1m4 0h1m10 0h1m67 0h1m3 0h1m1 0h1m3 0h1m-181 1h1m6 0h1m3 0h1m72 0h2m4 0h1m18 0h2m59 0h1m3 0h1m1 0h1m3 0h1m-181 1h1m10 0h1m66 0h1m3 0h2m5 0h1m84 0h1m1 0h1m3 0h1m-177 1h1m2 0h1m3 0h1m76 0h1m81 0h1m3 0h1m1 0h1m3 0h1m-177 1h1m2 0h1m69 0h1m92 0h1m3 0h1m1 0h1m3 0h1m-181 1h1m6 0h1m3 0h1m65 0h1m31 0h1m60 0h1m5 0h1m3 0h1m-181 1h1m6 0h1m3 0h1m65 0h1m5 0h1m27 0h1m62 0h1m1 0h1m3 0h1m-181 1h1m6 0h1m3 0h1m65 0h1m34 0h1m61 0h1m1 0h1m3 0h1m-181 1h1m3 0h1m6 0h1m65 0h1m5 0h2m28 0h1m56 0h1m3 0h1m1 0h1m3 0h1m-177 1h1m2 0h1m3 0h1m65 0h1m7 0h1m84 0h1m3 0h1m5 0h1m-174 1h1m69 0h1m43 0h1m48 0h1m2 0h1m6 0h1m-173 1h2m67 0h1m10 0h1m26 0h1m5 0h1m49 0h2m-96 1h1m6 0h1m5 0h1m22 0h1m-37 1h1m7 0h1m25 0h1m-35 1h1m32 0h1m5 0h1m-41 1h1m4 0h1m11 0h2m14 0h1m5 0h1m-40 1h1m4 0h1m26 0h1m4 0h1m-38 1h1m8 0h2m4 0h1m20 0h1m-37 1h1m12 0h1m2 0h1m6 0h1m10 0h1m-35 1h1m16 0h1m6 0h1m-20 1h6m2 0h1m4 0h2m6 0h1m-13 1h1m5 0h2m-22 1h1m3 0h1m32 0h2m7 0h1m-47 1h1m3 0h1m-5 1h1m19 0h1m17 0h1m-35 1h1m14 0h1m4 0h1m-26 1h1m4 0h1m4 0h1m7 0h1m5 0h1m4 0h1m-30 1h1m4 0h1m11 0h1m4 0h1m-23 1h1m20 0h1m7 0h1m8 0h1m-39 1h1m-1 1h1m10 0h1m-12 1h1m36 0h1m-38 1h1m9 0h1m-11 1h1m5 1h1m34 0h1m-43 1h1m4 0h2m-7 1h1m9 0h1m39 0h1m-42 1h1m40 0h1m-51 1h1m6 0h1m-8 1h1m5 0h1m-8 2h1m5 0h6m1 0h2m1 0h8m2 0h6m3 0h6m2 0h4m5 0h1m-53 1h1m51 0h1m-53 1h1m-1 1h1m8 0h6m2 0h5m1 0h7m1 0h7m1 0h6m8 0h1m-9 1h1m7 0h1m-55 1h1m8 0h1m35 0h1m8 0h1m-55 1h1m42 0h1m10 0h1m-55 1h1m4 0h1m35 0h1m6 0h1m5 0h1m-51 1h1m42 0h1m-49 1h1m4 0h1m3 0h2m29 0h2m5 0h1m8 0h1m-57 1h1m10 0h2m25 0h2m5 0h1m10 0h1m-57 1h1m12 0h1m5 0h1m17 0h1m6 0h1m-45 1h1m19 0h2m20 0h1m8 0h1m5 0h1m-36 1h1m18 0h1m9 0h1m5 0h1m-59 1h1m24 0h1m7 0h1m5 0h2m17 0h1m-330 1h46m225 0h1m25 0h1m4 0h2m5 0h1m12 0h1m6 0h1m-284 1h1m224 0h1m3 0h1m16 0h1m6 0h1m1 0h1m5 0h2m13 0h1m-277 1h1m229 0h1m16 0h2m11 0h1m14 0h1m8 0h1m-345 1h3m1 0h8m1 0h1m46 0h14m210 0h1m24 0h1m9 0h1m15 0h1m8 0h1m-346 1h1m74 0h1m209 0h1m59 0h1m-347 1h1m75 0h1m209 0h1m9 0h1m13 0h1m10 0h1m14 0h1m-337 1h1m74 0h1m210 0h1m3 0h1m31 0h1m12 0h1m4 0h1m6 0h1m-347 1h10m1 0h8m2 0h1m1 0h43m1 0h2m1 0h4m215 0h1m1 0h2m5 0h1m7 0h1m6 0h1m2 0h1m6 0h1m14 0h1m7 0h1m-310 1h2m245 0h1m8 0h1m5 0h2m3 0h1m6 0h2m5 0h1m5 0h1m5 0h1m6 0h1m8 0h1m-311 1h1m247 0h1m4 0h1m3 0h1m8 0h1m16 0h1m6 0h1m1 0h2m7 0h1m8 0h1m-311 1h1m247 0h1m8 0h1m5 0h1m8 0h1m12 0h1m14 0h1m9 0h1m-328 1h2m15 0h1m1 0h1m245 0h1m22 0h1m14 0h1m24 0h1m-330 1h1m1 0h1m15 0h1m251 0h1m5 0h1m3 0h1m6 0h1m24 0h1m1 0h1m7 0h1m6 0h1m-330 1h1m1 0h1m18 0h1m249 0h1m14 0h1m26 0h1m-314 1h1m20 0h1m262 0h2m22 0h1m11 0h1m3 0h1m5 0h1m-331 1h1m17 0h1m1 0h1m244 0h1m16 0h1m27 0h1m6 0h1m5 0h1m6 0h1m-331 1h1m17 0h1m1 0h1m3 0h1m1 0h2m237 0h1m3 0h1m3 0h1m7 0h1m48 0h1m-313 1h1m1 0h1m1 0h2m245 0h1m3 0h1m6 0h1m32 0h1m16 0h1m-312 1h1m5 0h1m1 0h1m302 0h1m-330 1h1m1 0h1m15 0h1m5 0h1m3 0h2m247 0h1m-278 1h1m1 0h1m14 0h1m6 0h1m2 0h1m2 0h1m8 0h1m223 0h1m10 0h1m40 0h1m7 0h2m5 0h1m-331 1h1m1 0h1m14 0h1m5 0h1m2 0h2m235 0h1m9 0h1m44 0h1m11 0h1m-331 1h1m1 0h1m23 0h1m244 0h1m47 0h1m-320 1h1m1 0h1m24 0h1m2 0h1m231 0h1m6 0h2m50 0h1m9 0h1m-333 1h1m17 0h1m5 0h2m2 0h1m52 0h1m181 0h1m59 0h1m8 0h1m-333 1h1m2 0h1m15 0h1m2 0h1m1 0h1m1 0h3m53 0h1m2 0h2m176 0h1m61 0h1m6 0h1m-387 1h5m49 0h1m2 0h1m14 0h2m1 0h1m2 0h2m53 0h2m2 0h1m179 0h1m68 0h1m-388 1h1m57 0h1m17 0h2m55 0h1m4 0h2m1 0h2m182 0h1m55 0h1m-382 1h1m57 0h1m17 0h1m54 0h1m11 0h1m44 0h2m2 0h1m124 0h1m8 0h1m61 0h1m-388 1h2m3 0h1m48 0h1m2 0h1m15 0h4m4 0h1m1 0h1m43 0h1m14 0h1m48 0h1m124 0h1m9 0h1m51 0h1m8 0h1m-385 1h1m1 0h1m48 0h1m17 0h3m1 0h1m6 0h1m39 0h1m18 0h1m54 0h2m4 0h2m3 0h2m106 0h1m5 0h1m4 0h1m49 0h1m9 0h1m-398 1h2m4 0h2m1 0h2m1 0h2m1 0h4m1 0h2m1 0h2m1 0h3m1 0h3m1 0h2m2 0h2m9 0h2m2 0h2m1 0h2m1 0h5m4 0h6m6 0h1m10 0h2m38 0h1m1 0h3m17 0h1m47 0h1m7 0h1m1 0h2m1 0h3m113 0h1m2 0h1m4 0h1m-343 1h1m5 0h2m41 0h1m31 0h2m50 0h1m1 0h1m2 0h1m19 0h1m4 0h2m38 0h1m125 0h1m4 0h1m-239 1h1m2 0h1m32 0h1m25 0h1m8 0h1m1 0h1m31 0h1m24 0h1m102 0h1m63 0h2m140 0h2m-537 1h2m34 0h1m29 0h4m3 0h2m10 0h1m9 0h2m27 0h1m1 0h1m3 0h2m26 0h1m5 0h1m1 0h1m3 0h1m29 0h1m27 0h1m100 0h1m3 0h1m54 0h1m13 0h1m129 0h1m4 0h1m-531 1h2m13 0h2m4 0h8m8 0h4m1 0h4m1 0h7m2 0h2m5 0h2m4 0h8m3 0h6m1 0h1m1 0h1m1 0h1m25 0h1m1 0h1m2 0h1m32 0h2m1 0h1m5 0h1m27 0h1m30 0h2m1 0h1m1 0h1m104 0h1m4 0h1m41 0h1m14 0h1m136 0h1m-444 1h1m2 0h1m25 0h1m35 0h1m9 0h1m64 0h3m89 0h1m12 0h1m4 0h1m39 0h1m11 0h1m3 0h1m127 0h1m9 0h1m-449 1h1m31 0h1m37 0h1m8 0h2m1 0h1m153 0h1m13 0h1m4 0h1m37 0h1m4 0h1m7 0h1m3 0h1m-307 1h1m80 0h3m18 0h1m41 0h1m87 0h1m14 0h1m40 0h1m4 0h1m-294 1h1m31 0h1m2 0h1m65 0h1m43 0h1m86 0h1m15 0h1m43 0h1m14 0h1m111 0h1m1 0h1m1 0h1m-425 1h1m1 0h1m46 0h1m34 0h1m16 0h1m43 0h1m108 0h1m37 0h1m15 0h1m111 0h1m30 0h1m-455 1h1m2 0h1m1 0h1m24 0h1m73 0h1m19 0h1m27 0h2m81 0h1m4 0h1m12 0h1m4 0h1m30 0h1m4 0h1m-292 1h1m24 0h1m57 0h1m14 0h1m1 0h1m50 0h1m80 0h1m4 0h1m13 0h1m4 0h1m28 0h1m4 0h1m18 0h1m-308 1h1m1 0h1m78 0h1m1 0h1m1 0h1m10 0h1m54 0h1m83 0h1m3 0h3m6 0h2m38 0h1m1 0h3m9 0h1m4 0h1m-308 1h1m2 0h1m16 0h1m63 0h2m68 0h1m75 0h1m4 0h1m71 0h1m109 0h2m30 0h1m-455 1h1m7 0h1m15 0h1m70 0h1m64 0h1m3 0h1m96 0h1m22 0h1m27 0h1m141 0h1m-456 1h1m6 0h1m1 0h1m14 0h1m63 0h1m12 0h1m1 0h1m58 0h3m70 0h1m27 0h1m189 0h2m-455 1h1m2 0h1m2 0h1m2 0h1m14 0h1m62 0h1m14 0h2m61 0h2m68 0h1m15 0h2m3 0h3m5 0h1m25 0h1m4 0h3m1 0h7m8 0h1m103 0h3m33 0h1m-450 1h1m3 0h1m14 0h1m61 0h1m15 0h1m64 0h1m67 0h1m3 0h1m20 0h1m27 0h1m19 0h1m5 0h1m102 0h1m-416 1h2m1 0h1m3 0h1m85 0h1m6 0h1m64 0h1m67 0h1m25 0h1m41 0h1m3 0h1m6 0h1m102 0h1m-417 1h1m4 0h1m1 0h1m14 0h1m72 0h2m3 0h1m133 0h1m8 0h1m4 0h1m12 0h1m43 0h1m-304 1h1m18 0h1m64 0h1m9 0h1m4 0h2m45 0h1m84 0h1m15 0h1m12 0h1m21 0h1m19 0h1m9 0h1m140 0h1m-451 1h3m11 0h1m1 0h1m74 0h1m47 0h1m3 0h1m16 0h1m67 0h1m11 0h1m17 0h1m14 0h1m5 0h1m29 0h1m140 0h1m-457 1h1m3 0h2m3 0h1m10 0h3m79 0h1m63 0h1m1 0h1m65 0h1m13 0h1m16 0h1m4 0h1m44 0h1m-316 1h1m3 0h2m3 0h1m10 0h1m84 0h1m60 0h1m1 0h1m65 0h1m15 0h1m3 0h1m10 0h1m5 0h1m5 0h1m20 0h2m156 0h1m-453 1h1m4 0h1m87 0h1m4 0h1m37 0h1m97 0h1m12 0h1m14 0h1m9 0h1m20 0h1m18 0h1m93 0h1m45 0h1m-453 1h2m3 0h1m10 0h1m77 0h1m15 0h1m55 0h1m67 0h1m13 0h1m4 0h1m22 0h1m35 0h1m-313 1h2m2 0h1m11 0h1m92 0h1m1 0h1m55 0h1m66 0h1m14 0h1m4 0h1m15 0h1m4 0h1m16 0h1m19 0h1m93 0h3m13 0h2m27 0h1m-455 1h1m3 0h1m2 0h1m11 0h1m44 0h3m46 0h2m138 0h1m4 0h1m9 0h1m29 0h1m16 0h1m138 0h1m-452 1h1m4 0h1m57 0h1m33 0h1m10 0h1m5 0h1m2 0h1m50 0h1m65 0h1m3 0h9m3 0h1m7 0h1m1 0h2m1 0h3m9 0h2m2 0h8m2 0h1m5 0h5m1 0h2m1 0h3m145 0h1m-453 1h1m4 0h1m112 0h2m193 0h1m91 0h1m46 0h1m-457 1h1m45 0h1m5 0h1m12 0h1m1 0h1m249 0h1m91 0h1m45 0h1m-456 1h1m2 0h1m1 0h1m35 0h2m2 0h1m19 0h3m2 0h4m15 0h2m9 0h1m131 0h1m6 0h11m1 0h1m6 0h3m1 0h4m1 0h2m11 0h11m8 0h4m3 0h2m1 0h2m6 0h1m136 0h2m-455 1h1m1 0h1m1 0h1m37 0h1m1 0h1m24 0h1m18 0h1m10 0h1m22 0h1m108 0h1m6 0h1m29 0h1m40 0h1m122 0h1m-433 1h1m2 0h2m3 0h1m31 0h1m58 0h1m20 0h2m1 0h1m107 0h1m35 0h1m10 0h1m17 0h1m11 0h1m8 0h1m115 0h1m-431 1h1m4 0h1m50 0h1m40 0h2m20 0h1m50 0h1m57 0h1m22 0h1m16 0h1m7 0h1m37 0h1m89 0h1m47 0h1m-453 1h1m3 0h1m34 0h1m78 0h1m113 0h1m6 0h1m23 0h1m3 0h1m22 0h1m3 0h1m12 0h3m4 0h1m89 0h1m1 0h1m45 0h1m-453 1h1m1 0h2m1 0h1m11 0h1m22 0h1m56 0h1m19 0h1m109 0h1m34 0h1m3 0h1m6 0h1m17 0h1m3 0h1m108 0h2m40 0h2m-449 1h1m1 0h1m3 0h1m34 0h1m53 0h1m2 0h1m133 0h1m2 0h1m10 0h1m15 0h1m12 0h1m17 0h1m7 0h1m14 0h1m130 0h2m-447 1h1m2 0h1m48 0h1m2 0h1m40 0h1m72 0h1m60 0h1m11 0h2m2 0h1m27 0h1m17 0h1m2 0h1m8 0h1m9 0h1m-312 1h1m90 0h1m66 0h1m68 0h1m62 0h1m20 0h1m125 0h1m-441 1h1m1 0h1m64 0h1m29 0h2m62 0h1m12 0h1m50 0h1m3 0h1m15 0h1m11 0h1m4 0h1m18 0h1m12 0h1m19 0h1m-315 1h1m2 0h1m32 0h1m25 0h1m33 0h1m77 0h1m50 0h1m35 0h1m20 0h1m-282 1h1m55 0h1m2 0h1m2 0h1m33 0h2m74 0h1m55 0h1m16 0h1m9 0h1m3 0h1m22 0h1m31 0h1m135 0h1m-450 1h2m54 0h1m1 0h1m5 0h1m106 0h1m50 0h1m4 0h1m13 0h1m11 0h1m59 0h1m-314 1h2m46 0h1m14 0h1m1 0h1m27 0h1m42 0h1m30 0h1m54 0h1m5 0h3m1 0h2m1 0h1m6 0h1m14 0h1m19 0h1m5 0h6m11 0h3m10 0h1m-288 1h3m34 0h1m1 0h1m4 0h2m20 0h2m72 0h1m2 0h3m50 0h1m80 0h1m9 0h1m-315 1h1m25 0h1m108 0h4m28 0h1m1 0h1m53 0h1m33 0h1m142 0h1m-402 1h1m3 0h1m64 0h1m6 0h2m16 0h1m45 0h1m26 0h1m148 0h1m82 0h1m50 0h1m-451 1h1m3 0h1m64 0h1m24 0h1m36 0h1m35 0h1m55 0h1m5 0h3m7 0h2m4 0h2m3 0h1m42 0h1m15 0h2m5 0h1m82 0h1m50 0h1m-451 1h1m3 0h1m73 0h1m17 0h1m36 0h1m33 0h1m55 0h1m5 0h1m9 0h1m4 0h1m39 0h1m14 0h1m-300 1h1m93 0h1m25 0h1m4 0h1m39 0h1m57 0h1m11 0h1m6 0h2m6 0h1m45 0h1m20 0h1m128 0h1m-447 1h1m95 0h2m20 0h2m6 0h1m1 0h1m94 0h1m25 0h1m3 0h1m37 0h1m25 0h1m133 0h1m-452 1h1m3 0h2m90 0h1m48 0h1m81 0h1m20 0h1m3 0h1m39 0h1m14 0h1m9 0h1m127 0h2m4 0h1m-447 1h2m90 0h1m12 0h1m9 0h1m25 0h1m75 0h1m4 0h1m19 0h1m3 0h1m65 0h1m127 0h2m4 0h1m-452 1h1m5 0h1m85 0h1m5 0h1m10 0h1m9 0h3m100 0h1m4 0h1m18 0h1m54 0h2m7 0h1m135 0h1m4 0h1m-452 1h1m5 0h1m137 0h1m1 0h1m15 0h1m59 0h1m12 0h1m9 0h1m4 0h1m43 0h1m15 0h1m7 0h1m83 0h2m47 0h1m-291 1h1m68 0h1m5 0h1m53 0h1m4 0h1m7 0h1m14 0h1m82 0h1m1 0h2m40 0h1m-445 1h1m1 0h2m97 0h1m57 0h1m60 0h1m7 0h1m7 0h1m53 0h1m5 0h1m20 0h1m85 0h1m-404 1h2m88 0h1m68 0h1m60 0h1m4 0h2m64 0h1m5 0h1m2 0h1m12 0h1m89 0h1m-399 1h1m83 0h1m130 0h1m20 0h1m4 0h1m52 0h1m13 0h1m132 0h1m-447 1h1m5 0h1m81 0h1m17 0h1m18 0h4m3 0h1m1 0h1m85 0h1m7 0h1m11 0h1m-235 1h1m82 0h1m24 0h2m14 0h2m88 0h1m6 0h1m82 0h1m7 0h1m118 0h1m-317 1h1m26 0h1m78 0h3m79 0h1m8 0h1m-320 1h1m115 0h1m6 0h1m32 0h1m63 0h1m75 0h1m-297 1h1m122 0h1m96 0h1m76 0h1m22 0h1m129 0h1m-451 1h1m2 0h1m3 0h1m114 0h1m32 0h1m64 0h1m21 0h1m55 0h2m20 0h1m-321 1h1m6 0h1m44 0h1m67 0h1m1 0h1m30 0h1m1 0h1m64 0h1m10 0h3m72 0h1m1 0h2m1 0h4m5 0h1m87 0h1m-409 1h1m119 0h1m34 0h1m85 0h1m78 0h1m88 0h2m-405 1h1m45 0h1m166 0h1m14 0h1m67 0h1m128 0h1m13 0h2m-441 1h1m113 0h2m97 0h1m14 0h1m68 0h1m17 0h1m88 0h1m20 0h1m12 0h1m6 0h1m-333 1h1m2 0h1m96 0h1m13 0h1m4 0h1m82 0h1m121 0h1m7 0h1m-452 1h1m6 0h1m111 0h1m103 0h1m8 0h1m4 0h1m205 0h1m-444 1h1m6 0h1m210 0h1m12 0h1m90 0h1m120 0h2m6 0h1m-445 1h1m210 0h1m3 0h1m2 0h1m10 0h1m74 0h1m10 0h1m86 0h2m32 0h1m7 0h1m-451 1h1m5 0h1m111 0h1m98 0h1m3 0h1m2 0h1m4 0h1m4 0h1m172 0h1m33 0h1m-437 1h1m112 0h1m102 0h1m11 0h1m87 0h1m85 0h2m1 0h1m34 0h1m-455 1h1m8 0h1m47 0h1m1 0h1m165 0h1m4 0h1m10 0h1m82 0h2m127 0h1m-454 1h1m8 0h1m4 0h1m42 0h1m3 0h1m163 0h1m92 0h1m12 0h1m123 0h1m-447 1h1m1 0h2m2 0h1m45 0h1m178 0h1m77 0h1m12 0h1m123 0h1m-448 1h1m2 0h1m3 0h1m123 0h16m2 0h2m2 0h5m59 0h1m13 0h1m79 0h1m11 0h1m90 0h1m-415 1h1m6 0h1m112 0h1m4 0h2m1 0h1m29 0h1m58 0h1m3 0h1m8 0h1m92 0h1m90 0h1m-414 1h1m48 0h1m1 0h1m71 0h1m35 0h1m68 0h1m93 0h1m91 0h1m-414 1h1m47 0h1m1 0h1m77 0h1m3 0h1m81 0h1m98 0h1m-315 1h1m1 0h1m160 0h2m50 0h1m99 0h1m7 0h1m-319 1h1m44 0h2m68 0h1m44 0h1m49 0h1m3 0h1m4 0h2m90 0h1m6 0h1m-324 1h1m4 0h1m161 0h3m3 0h3m43 0h1m64 0h1m-284 1h4m30 0h1m3 0h1m3 0h1m1 0h1m2 0h1m87 0h1m82 0h1m38 0h4m1 0h2m1 0h1m3 0h1m1 0h1m1 0h1m1 0h1m6 0h1m8 0h1m31 0h1m-322 1h1m30 0h1m80 0h2m14 0h2m128 0h1m1 0h2m5 0h1m1 0h1m51 0h1m-415 1h1m1 0h1m89 0h1m31 0h1m10 0h1m58 0h4m1 0h1m104 0h1m43 0h3m4 0h2m57 0h1m-413 1h1m88 0h1m32 0h1m68 0h1m47 0h2m65 0h1m105 0h1m96 0h1m27 0h1m-542 1h1m3 0h1m93 0h1m96 0h1m109 0h1m4 0h1m-213 1h1m39 0h1m63 0h1m102 0h1m4 0h1m106 0h1m-320 1h1m131 0h1m74 0h1m111 0h1m97 0h1m2 0h1m23 0h1m-452 1h1m107 0h1m109 0h1m107 0h1m98 0h1m25 0h1m-452 1h1m46 0h1m165 0h1m4 0h1m232 0h1m-451 1h2m32 0h1m177 0h1m108 0h1m4 0h1m98 0h1m24 0h1m-452 1h1m1 0h1m32 0h1m9 0h1m167 0h1m108 0h1m4 0h1m123 0h1m-453 1h1m60 0h2m1 0h4m127 0h2m44 0h1m5 0h1m15 0h2m55 0h2m1 0h1m33 0h2m24 0h2m14 0h2m51 0h1m-546 1h3m3 0h2m1 0h5m1 0h2m3 0h10m1 0h2m1 0h5m1 0h3m1 0h3m1 0h2m1 0h2m3 0h1m20 0h2m1 0h2m-74 1h1m5 0h1m15 0h1m2 0h1m5 0h1m3 0h1m3 0h1m2 0h1m2 0h1m1 0h1m18 0h1m1 0h1m2 0h1m-80 1h3m3 0h2m1 0h5m1 0h2m3 0h10m1 0h2m1 0h5m1 0h3m1 0h3m1 0h2m1 0h2m3 0h1m5 0h1m14 0h2m1 0h2m-21 1h1m22 0h3m1 0h4m3 0h6m1 0h1m2 0h6m1 0h2m2 0h5m1 0h4m2 0h4m1 0h11m1 0h5m1 0h3m2 0h3m6 0h2m3 0h14m2 0h3m3 0h5m1 0h4m2 0h6m2 0h2m1 0h4m1 0h2m5 0h4m7 0h16m1 0h9m5 0h13m4 0h5m1 0h9m1 0h2m1 0h7m1 0h6m1 0h3m1 0h2m1 0h4m1 0h2m1 0h10m1 0h6m6 0h4m4 0h2m1 0h4m1 0h5m1 0h3m1 0h3m3 0h1m2 0h33m1 0h25m1 0h8m3 0h3m1 0h4m1 0h8m3 0h12m1 0h3m1 0h2m1 0h7m1 0h5m1 0h3m1 0h2m5 1h1m12 0h1m-13 1h1m1 0h1"/><path stroke="#0b8447" d="M0 0m413 177h1m-102 1h1m4 0h1m3 0h1m7 0h1m-9 3h1m5 0h1m2 0h1m23 0h1m3 0h1m-41 1h1m8 0h1m34 0h1m35 0h1m-14 1h1m16 0h1m-60 1h1m14 0h1m26 0h1m24 0h1m-86 1h1m2 0h1m26 0h1m-37 1h1m7 0h1m14 0h1m11 0h1m-25 1h1m14 0h1m50 0h1m-30 1h1m-35 1h1m10 0h1m47 0h1m-55 1h1m56 0h1m-53 2h1m7 0h1m38 0h1m-58 1h1m40 0h1m16 1h1m-17 1h1m3 1h1m-19 1h1m3 1h1m9 0h1m7 0h1m-39 1h1m9 1h1m7 1h1m-2 2h1m19 2h1m-4 5h1m-20 1h1m18 4h1m-24 1h1m6 0h1m12 0h1m-14 4h2m10 0h1m-5 3h1m-13 4h1m9 1h1m10 2h1m-30 1h1m26 1h1m-20 5h1m15 0h1m-14 1h1m3 0h1m11 0h1m6 2h1m-11 3h1m-14 3h1m17 0h1m0 4h1m-21 2h1m14 1h1m4 0h1m5 0h1m-14 1h1m-12 1h1m14 0h1m-3 1h1m-21 2h1m17 0h1m12 0h1m-24 1h1m22 0h1m-27 2h1m-5 2h1m25 0h1m4 6h1m11 0h1m-59 1h1m51 0h1m17 2h1m-9 1h1m1 1h1m-42 2h1m-55 1h1m-21 1h1m14 0h1m121 3h4m12 0h1m-94 1h1m64 0h1m-18 1h1m13 0h1m-7 1h1m17 0h1m3 0h2m8 0h1m9 0h1m-132 1h2m129 0h1m-154 1h1m53 0h1m47 0h1m21 0h2m21 0h1m3 0h1m-120 1h1m19 0h1m31 1h1m5 0h1m35 0h1m-150 1h1m55 0h1m60 0h1m-115 2h1m7 0h1m7 0h1m35 0h1m27 0h1m26 0h1m37 0h1m-49 1h1m9 0h1m9 0h1m25 0h3m11 0h1m13 0h1m-178 1h1m159 0h1m-65 1h1m7 0h1m-26 1h1m63 0h1m-143 1h1m119 1h1m-1 1h1m-18 3h1m7 3h1m8 1h1m-37 1h1m86 1h1m-164 2h1m72 2h1m34 0h1m4 2h1m-5 1h1m-28 3h1m4 0h1m25 0h1m0 1h1m1 0h1m-27 1h1m23 0h1m-33 1h1m1 0h1m-13 1h1m-4 1h1m13 0h1m30 0h1m-25 1h1m7 2h1m2 0h1m-7 1h1m18 1h1m-37 1h1m18 0h1m-15 1h1m17 1h1m-31 1h1m37 2h1m5 0h1m-9 1h1m7 0h1m-1 1h1m-39 1h1m-8 5h1m40 5h1m-32 6h1m-3 2h1m20 0h1m-34 3h1m49 0h1m3 1h1m-54 2h1m48 0h1m-5 1h1m-43 1h1m44 0h1m-44 1h1m11 0h1m-21 2h1m53 0h1m-47 1h1m4 0h1m7 0h1m22 1h1m-33 1h1m28 0h1m3 0h1m1 0h1m-39 1h1m1 0h1m32 1h1m7 0h1m-49 1h1m-1 2h1m37 0h1m5 0h1m2 1h1m-1 1h1m-52 1h1m45 0h1m9 2h1m-59 3h1m0 2h1m-3 3h1m60 1h1m-6 1h1m3 0h1m-235 3h1m-69 1h1m50 1h1m-19 1h1m414 0h1m-411 1h1m42 0h1m-46 1h1m2 0h1m43 0h1m347 0h1m-397 1h1m1 0h1m14 0h1m30 0h1m151 0h1m189 0h1m-375 1h1m94 0h1m306 0h1m-454 1h1m29 0h1m-6 1h1m265 0h1m-190 1h1m54 0h1m88 0h1m1 0h1m2 0h1m-251 1h1m431 0h1m-347 1h1m156 0h1m1 0h2m35 0h1m8 0h1m141 0h1m-435 1h1m238 0h1m67 0h1m-221 1h1m4 0h1m210 0h1m129 0h1m-350 1h1m61 0h1m294 0h1m-297 1h1m1 0h1m95 0h1m57 0h1m115 0h2m27 0h1m-361 1h1m45 0h2m30 0h1m71 0h1m203 0h1m-356 1h1m341 0h1m-334 1h1m38 0h1m301 0h1m17 0h1m-291 1h1m112 0h1m153 0h1m-432 1h1m4 0h1m227 0h1m36 0h1m142 0h1m-333 1h1m56 0h1m29 0h1m86 0h1m155 0h1m12 0h1m-373 1h1m49 0h1m171 0h1m152 0h1m-365 1h1m3 0h1m52 0h1m49 0h1m65 0h1m-218 1h1m77 0h1m3 0h1m16 0h1m5 0h1m14 0h1m92 0h1m3 0h1m18 0h1m4 0h1m8 0h1m-218 1h1m13 0h1m46 0h1m-74 1h1m59 0h1m4 0h1m11 0h1m-68 1h1m54 0h1m16 0h1m49 0h1m64 0h1m13 0h1m4 0h1m151 0h1m23 0h1m-413 1h1m37 0h2m27 0h1m14 0h1m6 0h1m163 0h1m176 0h1m-286 1h1m88 0h1m153 0h1m23 0h1m-428 1h1m153 0h1m3 0h1m2 0h1m108 0h1m36 0h1m-307 1h1m95 0h1m1 0h1m63 0h1m-148 1h1m37 0h1m20 0h1m42 0h1m39 0h1m73 0h1m71 0h1m142 0h1m-433 1h1m34 0h1m14 0h1m10 0h1m170 0h1m15 0h1m175 0h1m-393 1h1m43 0h1m318 0h1m-363 1h1m1 0h1m11 0h1m96 0h1m77 0h1m6 0h1m51 0h1m113 0h1m-318 1h1m4 0h1m60 0h1m10 0h1m271 0h1m-377 1h1m53 0h1m39 0h1m245 0h1m35 0h1m-411 1h1m134 0h1m1 0h1m1 0h1m233 0h1m-386 1h1m12 0h1m35 0h1m43 0h1m54 0h1m236 0h1m-379 1h1m2 0h1m62 0h1m20 0h1m21 0h1m30 0h1m74 0h1m10 0h1m46 0h1m-171 1h1m15 0h1m104 0h1m-240 1h1m7 0h1m1 0h1m87 0h2m46 0h1m-82 1h1m23 0h1m26 0h1m21 0h1m104 0h1m35 0h1m108 0h1m46 0h1m-335 1h3m12 0h1m6 0h1m101 0h1m2 0h1m13 0h1m-243 1h1m79 0h1m24 0h1m12 0h1m108 0h1m206 0h1m-451 1h1m126 0h1m175 0h2m1 0h1m143 0h1m-304 1h1m15 0h1m129 0h1m155 0h1m-336 1h1m18 0h1m1 0h2m-16 1h1m6 0h2m32 0h2m131 0h1m-212 1h1m154 0h1m80 0h1m-237 1h1m30 0h1m6 0h1m106 0h1m3 0h1m-126 1h1m143 0h1m59 0h1m-183 1h1m175 0h1m140 0h1m-316 1h1m117 0h1m196 0h2m-441 1h1m118 0h1m179 0h1m3 0h1m-305 1h1m133 0h1m12 0h2m146 0h1m144 0h1m-441 1h1m115 0h1m36 0h1m147 0h2m2 0h1m3 0h1m125 0h1m-434 1h1m108 0h1m39 0h1m71 0h1m68 0h1m4 0h1m4 0h1m6 0h2m135 0h1m-446 1h1m113 0h1m329 0h1m-447 1h1m117 0h1m285 1h1m-183 1h1m9 0h2m78 0h1m-92 1h1m206 0h1m-117 1h1m126 1h1m-220 1h1m213 3h1m-434 1h1m117 0h1m198 0h1m-318 1h2m223 0h1m182 0h1m28 0h1m-322 1h1m319 0h1m7 0h1m-7 1h1m1 0h1m-394 1h1m166 0h1m-98 1h1m100 0h1m1 0h1m87 0h1m-88 1h1m219 0h1m-324 1h1m25 0h1m170 1h1m-191 1h1m190 0h1m99 2h1m-371 1h1m87 0h1m5 0h1m1 0h1m12 0h1m126 0h1m-160 1h3m1 0h1m7 0h1m2 0h1m-106 1h1m85 0h1m10 0h1m29 0h1m3 0h1m-166 1h1m146 0h2m-22 1h1m311 0h1m6 0h1m-445 1h1m43 0h1m62 0h1m22 0h1m-96 1h1m4 0h1m89 0h1m2 0h1m-137 1h1m106 0h1m-108 1h1m33 0h1m14 0h1m56 0h1m37 0h1m-141 1h1m37 0h1m88 0h1m6 0h1m7 0h2m4 0h1m-108 1h1m105 0h1m273 0h1m-426 1h1m1 0h2m142 0h1m4 0h1m59 0h1m213 0h1m-457 1h1m16 0h1m-16 1h1m282 0h1m-288 1h1m2 0h1m2 0h1m12 0h1m221 0h1m57 0h1m140 0h1"/><path stroke="#0f8b82" d="M0 0m318 178h1m4 0h1m2 0h1m3 0h1m6 0h1m10 0h1m3 0h1m7 0h2m1 0h1m4 0h1m2 0h1m1 0h1m13 0h1m1 0h1m4 0h1m2 0h1m2 0h1m1 0h2m1 0h2m1 0h1m5 0h1m3 0h2m5 0h2m-116 1h1m1 0h1m7 0h1m9 0h1m1 0h1m1 0h1m6 0h1m4 0h1m4 0h1m11 0h2m2 0h2m2 0h2m2 0h1m7 0h1m8 0h2m1 0h3m7 0h1m4 0h3m8 0h1m1 0h1m-110 1h1m4 0h1m2 0h1m1 0h1m3 0h1m1 0h1m7 0h1m1 0h1m2 0h1m9 0h1m17 0h2m10 0h2m11 0h2m1 0h1m11 0h1m11 0h1m-100 1h2m9 0h2m19 0h1m40 0h2m10 0h2m-57 1h1m7 0h1m20 0h1m26 0h1m-96 1h1m1 0h1m23 0h1m44 0h1m9 0h1m2 0h1m-73 1h1m6 0h1m21 0h1m7 0h1m8 0h1m8 0h1m19 0h1m-85 1h1m2 0h1m10 0h1m8 0h1m11 0h1m31 0h1m8 0h1m14 0h2m-89 1h2m7 0h1m1 0h1m9 0h1m13 0h1m36 0h1m13 0h1m-85 1h1m1 0h1m23 0h2m20 0h1m9 0h1m3 0h1m7 0h1m7 0h1m3 0h3m-83 1h1m2 0h1m4 0h1m8 0h1m1 0h1m21 0h1m24 0h1m12 0h1m1 0h1m-82 1h1m10 0h1m12 0h1m-21 1h1m13 0h2m35 0h1m7 0h1m2 0h1m-49 1h1m5 0h1m43 0h1m1 0h1m2 0h3m-57 1h1m-13 1h1m3 0h1m10 0h1m43 0h3m3 0h1m1 0h1m-62 1h1m33 0h1m5 0h1m12 0h3m-38 1h1m1 0h1m13 0h1m5 0h2m10 0h2m-19 1h1m4 0h1m8 0h2m1 0h1m-33 1h1m3 0h1m10 0h1m14 0h1m-31 1h1m19 0h1m3 0h1m-21 1h1m13 0h1m2 0h1m3 0h2m-33 1h1m25 0h1m1 0h1m-30 1h1m6 0h1m18 0h1m1 0h2m-20 1h1m13 0h1m3 0h1m-21 1h1m2 0h1m14 0h1m-22 1h1m6 0h1m-6 1h1m5 0h1m15 1h1m-2 1h1m-1 3h1m-9 1h1m-14 1h1m15 1h1m4 0h2m2 0h1m-10 1h1m-14 1h1m17 0h3m-27 1h1m2 0h2m16 0h1m4 0h2m-16 1h1m6 0h1m7 0h1m-28 1h1m2 0h1m4 0h2m3 0h1m1 0h2m3 0h1m2 0h1m-25 1h1m13 0h1m4 0h1m2 0h1m-24 1h1m24 0h2m-5 1h1m-24 1h1m8 0h1m11 0h1m6 0h1m-29 1h2m1 1h1m1 0h1m7 0h1m1 0h1m1 0h1m9 0h1m-26 1h1m25 0h2m-33 1h1m1 0h1m5 0h1m11 0h1m10 0h1m-16 1h2m-4 1h1m7 0h1m-9 1h1m15 0h2m2 0h1m-25 1h1m-5 1h1m-6 1h1m3 0h1m3 0h1m18 0h1m1 0h4m-27 1h1m24 0h4m-35 1h1m28 0h3m-26 1h1m23 0h1m2 0h1m-28 1h2m19 0h2m-24 1h1m3 0h1m16 0h2m-5 1h1m9 0h1m-21 1h1m19 0h1m-19 1h1m1 1h1m-1 1h1m-3 1h1m6 1h2m11 0h1m-4 1h1m-7 1h1m5 0h1m-23 1h1m18 0h1m-27 1h3m27 0h1m-4 1h1m-28 1h1m26 0h2m-24 2h1m23 0h1m-5 1h1m7 0h1m-26 1h1m12 0h1m1 0h1m8 0h1m-14 1h1m-19 1h1m8 0h1m9 0h1m13 0h1m-3 1h1m1 1h1m-34 1h1m16 0h1m1 0h1m12 0h1m-26 1h1m1 0h2m-12 1h1m6 0h1m-5 2h1m25 0h1m4 0h1m-32 1h3m-3 1h3m9 0h1m1 0h1m13 0h1m1 0h1m-28 1h1m27 0h1m-39 1h1m15 0h1m24 0h1m-55 1h1m3 0h1m3 0h1m9 0h1m-23 1h1m1 0h1m2 0h1m18 0h1m32 0h1m6 0h1m-67 1h1m3 0h2m3 0h1m54 0h1m2 0h1m1 0h1m-17 1h4m8 0h1m5 0h1m-82 1h1m63 0h1m12 0h1m1 0h1m-24 1h1m26 0h1m1 0h1m2 0h1m1 0h1m-93 1h1m65 0h1m22 0h1m4 0h1m-104 1h3m4 0h1m-15 1h1m8 0h1m52 0h1m-58 1h1m76 0h1m-83 1h1m84 0h1m36 0h1m-136 1h1m95 0h1m1 0h1m-103 1h1m3 0h1m119 0h3m-126 1h1m85 0h1m12 0h1m3 0h1m19 0h2m20 0h1m2 0h1m5 0h1m-160 1h1m2 0h1m88 0h1m11 0h1m1 0h1m1 0h1m4 0h1m9 0h1m10 0h1m9 0h3m3 0h1m1 0h2m7 0h1m-143 1h1m8 0h2m5 0h2m14 0h1m6 0h2m8 0h1m25 0h1m8 0h1m1 0h1m12 0h1m5 0h1m6 0h1m9 0h2m2 0h2m1 0h1m6 0h1m8 0h1m2 0h1m-180 1h1m2 0h1m29 0h1m10 0h3m1 0h1m1 0h1m6 0h1m9 0h1m5 0h1m3 0h2m12 0h1m26 0h1m11 0h1m14 0h1m21 0h1m-103 1h1m24 0h3m14 0h2m11 0h1m25 0h1m26 0h1m5 0h1m-172 1h1m15 0h1m3 0h1m18 0h1m28 0h1m1 0h1m52 0h1m16 0h1m9 0h1m2 0h1m-150 1h1m9 0h1m4 0h3m16 0h1m2 0h1m40 0h1m18 0h2m15 0h1m2 0h1m17 0h4m6 0h1m3 0h1m4 0h1m5 0h2m5 0h1m-179 1h1m54 0h2m1 0h1m59 0h1m30 0h1m10 0h2m6 0h1m-157 1h1m6 0h1m7 0h1m21 0h1m19 0h2m40 0h1m3 0h1m47 0h1m3 0h2m-165 1h1m8 0h1m18 0h2m19 0h1m16 0h1m1 0h1m11 0h1m29 0h1m33 0h1m3 0h1m1 0h1m9 0h1m3 0h2m3 0h1m-159 1h1m1 0h1m14 0h1m20 0h3m57 0h4m1 0h1m26 0h1m2 0h1m2 0h1m1 0h1m1 0h1m8 0h1m1 0h1m1 0h1m-169 1h3m1 0h1m7 0h1m2 0h1m8 0h1m24 0h1m3 0h1m1 0h1m4 0h2m10 0h1m15 0h1m6 0h2m5 0h1m15 0h3m30 0h1m1 0h3m17 0h2m-170 1h1m4 0h1m13 0h1m1 0h1m2 0h1m3 0h1m24 0h1m1 0h1m17 0h2m1 0h1m8 0h1m1 0h1m18 0h1m1 0h1m3 0h1m6 0h1m7 0h3m6 0h1m8 0h2m17 0h1m-170 1h1m2 0h1m17 0h1m25 0h1m11 0h1m2 0h1m14 0h3m16 0h1m1 0h1m1 0h1m13 0h1m1 0h1m4 0h2m5 0h1m1 0h1m1 0h2m2 0h4m3 0h1m18 0h1m1 0h2m3 0h1m-168 1h1m96 0h1m16 0h1m7 0h1m12 0h1m4 0h1m1 0h1m6 0h1m16 0h1m-167 1h1m96 0h1m16 0h1m3 0h1m-113 1h1m70 0h1m19 0h1m16 0h2m2 0h1m-42 1h1m-73 1h1m111 0h1m-16 1h1m12 0h1m1 0h1m50 0h1m-169 1h1m5 0h1m78 0h1m15 0h1m2 0h1m10 0h1m1 0h1m-42 1h1m1 0h1m38 0h1m-113 1h1m77 0h1m33 0h1m50 0h1m-88 1h1m25 0h1m9 0h1m-111 1h1m74 0h1m26 0h1m5 0h1m-116 1h1m76 0h1m1 0h1m36 0h1m53 0h1m-61 1h1m4 0h1m-116 1h1m115 0h1m51 0h1m-163 1h1m70 0h1m36 0h2m-117 1h1m79 0h1m33 0h1m6 0h1m53 0h1m-168 1h1m68 0h1m6 0h1m91 0h1m-60 1h1m-40 1h1m35 0h1m2 1h1m-31 1h3m27 0h2m-43 1h1m10 0h2m28 0h1m-42 1h1m13 0h1m27 0h1m-43 1h2m15 0h1m11 0h1m11 0h1m-42 1h1m5 0h1m2 0h1m9 0h1m22 0h1m3 0h1m-38 1h1m17 0h1m2 0h1m10 0h1m2 0h1m-46 1h1m1 0h1m18 0h1m4 0h1m1 0h2m13 0h1m1 0h1m-44 1h1m39 0h1m-2 1h2m-22 1h1m1 0h1m1 0h1m-24 1h1m22 0h1m17 0h1m-15 1h1m1 0h4m-25 1h1m19 0h2m11 0h1m-1 1h2m-43 1h1m27 0h1m1 0h2m8 0h2m-31 1h1m1 0h1m-16 1h2m25 0h1m6 0h1m2 0h1m8 0h1m-33 1h1m22 0h2m7 0h1m-46 1h1m35 0h3m4 0h1m-38 1h1m2 0h1m30 0h1m-34 1h1m35 0h1m-46 1h2m41 0h1m-45 2h1m45 0h1m-46 1h1m1 1h1m-3 1h1m46 1h1m-39 1h1m11 0h2m6 0h1m1 0h1m6 0h2m-37 1h1m1 0h1m13 0h1m7 0h1m7 0h1m6 0h1m-42 1h1m-1 1h2m41 0h1m-43 1h1m44 0h1m0 1h1m-1 1h1m-43 1h1m31 1h1m-41 2h1m11 0h1m1 0h1m22 0h1m-24 1h3m34 0h1m-20 1h1m1 0h1m-20 1h1m1 0h1m33 0h2m-35 1h1m11 0h2m20 0h1m-33 1h1m8 0h1m-32 1h1m26 0h1m27 0h1m-55 1h1m24 0h1m2 0h1m25 0h1m-56 1h1m4 0h1m19 0h1m23 0h1m4 0h2m-2 1h2m-51 1h1m43 0h1m5 0h1m-50 1h1m1 0h1m11 0h3m22 0h1m2 0h1m-50 1h1m8 0h1m12 0h1m-24 1h2m10 0h1m2 1h1m26 1h1m5 0h1m10 0h1m-50 1h1m3 0h1m24 0h1m18 0h2m-1 1h1m-49 1h1m34 0h1m7 0h1m-11 1h1m2 0h2m-1 1h1m2 0h1m1 0h1m-55 1h1m-3 1h4m7 0h1m39 0h1m1 0h1m8 0h1m-63 1h1m6 0h1m3 0h1m42 0h1m-283 1h1m231 0h1m1 0h1m49 0h1m-283 1h1m226 0h2m55 0h1m5 0h1m-290 2h1m225 0h2m61 1h1m-299 1h1m233 0h1m2 0h1m59 0h2m-1 1h2m-300 1h1m5 0h1m1 0h1m228 0h1m-2 1h1m61 0h2m-300 1h1m293 2h2m-243 1h1m57 0h1m128 0h1m52 0h1m5 0h1m-250 1h1m1 0h1m239 0h1m-256 2h1m5 0h1m1 0h2m75 0h1m110 0h1m-240 1h1m43 0h1m4 0h1m78 0h1m5 0h1m161 0h1m-246 1h1m1 0h1m184 0h1m55 0h2m11 0h1m129 0h1m1 0h1m5 0h1m-395 1h2m12 0h2m63 0h1m2 0h1m3 0h1m156 0h1m12 0h1m133 0h1m2 0h1m1 0h1m-396 1h2m11 0h1m2 0h1m44 0h3m22 0h1m117 0h1m51 0h1m127 0h2m3 0h1m7 0h1m-443 1h1m29 0h1m27 0h1m17 0h1m29 0h1m1 0h2m3 0h1m1 0h1m114 0h1m1 0h1m51 0h1m140 0h1m2 0h1m4 0h3m5 0h1m-418 1h1m13 0h1m3 0h1m11 0h1m2 0h1m15 0h2m1 0h1m29 0h2m29 0h2m162 0h1m127 0h1m2 0h1m1 0h2m4 0h2m3 0h1m-420 1h1m1 0h2m19 0h1m24 0h1m30 0h3m16 0h2m4 0h1m8 0h2m1 0h1m289 0h1m2 0h1m-416 1h1m6 0h1m20 0h1m15 0h1m4 0h1m5 0h1m25 0h1m4 0h2m3 0h2m11 0h3m2 0h1m99 0h1m72 0h1m116 0h4m1 0h1m7 0h2m1 0h1m9 0h1m-419 1h2m15 0h1m17 0h2m36 0h2m4 0h2m6 0h1m9 0h3m23 0h1m85 0h1m12 0h2m2 0h1m26 0h1m3 0h2m16 0h1m120 0h3m6 0h4m5 0h1m1 0h1m-417 1h1m17 0h1m54 0h1m4 0h1m5 0h1m8 0h1m3 0h3m110 0h1m7 0h1m2 0h2m38 0h1m3 0h2m1 0h1m146 0h1m-449 1h1m26 0h2m8 0h1m9 0h1m13 0h1m4 0h1m1 0h1m1 0h1m7 0h1m35 0h1m3 0h2m1 0h1m5 0h1m1 0h1m1 0h1m7 0h1m100 0h2m6 0h1m2 0h1m37 0h1m1 0h1m4 0h1m7 0h1m116 0h1m6 0h3m7 0h1m1 0h1m1 0h1m-399 1h1m2 0h2m6 0h1m20 0h1m11 0h1m25 0h1m3 0h1m6 0h1m19 0h1m7 0h1m5 0h1m80 0h1m18 0h1m23 0h1m144 0h3m7 0h1m2 0h1m-413 1h3m8 0h1m2 0h2m16 0h1m1 0h1m10 0h1m2 0h1m1 0h1m8 0h1m33 0h1m29 0h1m82 0h1m6 0h1m67 0h1m115 0h1m8 0h1m12 0h1m1 0h1m-417 1h3m6 0h2m5 0h1m19 0h1m2 0h1m4 0h2m24 0h1m18 0h1m5 0h2m5 0h1m98 0h1m27 0h1m20 0h1m18 0h1m6 0h1m108 0h1m15 0h2m3 0h1m3 0h1m3 0h1m-417 1h1m1 0h1m4 0h1m10 0h2m4 0h1m5 0h1m10 0h1m14 0h1m22 0h2m16 0h2m9 0h1m103 0h1m36 0h2m143 0h1m7 0h2m8 0h1m7 0h1m-415 1h1m9 0h1m9 0h1m11 0h1m1 0h1m34 0h1m54 0h1m71 0h1m28 0h1m15 0h1m1 0h1m138 0h1m1 0h1m6 0h1m7 0h1m9 0h1m-424 1h1m7 0h1m16 0h2m5 0h2m12 0h1m15 0h2m16 0h1m1 0h1m4 0h1m11 0h3m6 0h1m1 0h1m1 0h1m173 0h1m109 0h1m2 0h2m8 0h1m6 0h1m3 0h3m-424 1h1m6 0h2m11 0h1m8 0h1m4 0h1m2 0h1m5 0h3m2 0h1m9 0h1m3 0h2m37 0h1m20 0h1m10 0h1m5 0h1m71 0h1m14 0h1m30 0h1m133 0h1m9 0h1m2 0h1m2 0h1m1 0h1m16 0h2m-438 1h1m21 0h1m3 0h1m5 0h1m16 0h1m1 0h1m28 0h1m27 0h1m12 0h2m6 0h1m92 0h1m41 0h2m135 0h1m4 0h1m2 0h2m4 0h1m3 0h1m18 0h1m-447 1h1m7 0h1m1 0h1m21 0h1m2 0h1m4 0h1m31 0h1m7 0h1m2 0h2m16 0h1m15 0h1m24 0h1m15 0h1m69 0h1m64 0h1m114 0h1m6 0h3m12 0h1m6 0h1m-407 1h1m1 0h1m6 0h2m9 0h1m2 0h2m2 0h2m20 0h3m16 0h3m14 0h1m14 0h1m9 0h1m16 0h1m89 0h1m12 0h1m2 0h1m40 0h1m1 0h1m102 0h1m26 0h1m3 0h1m-411 1h1m2 0h1m12 0h1m9 0h1m18 0h1m3 0h1m5 0h1m3 0h1m8 0h3m25 0h1m3 0h1m7 0h1m1 0h2m4 0h1m8 0h1m1 0h1m68 0h1m41 0h1m37 0h1m101 0h1m16 0h1m4 0h1m7 0h1m1 0h1m2 0h2m-426 1h4m19 0h1m18 0h1m3 0h1m2 0h1m5 0h2m7 0h1m1 0h1m2 0h1m9 0h1m27 0h2m9 0h2m2 0h1m1 0h1m3 0h1m12 0h1m1 0h1m63 0h1m21 0h1m160 0h1m11 0h1m3 0h1m6 0h1m4 0h2m3 0h2m-430 1h1m5 0h2m2 0h1m10 0h1m6 0h1m7 0h3m19 0h1m2 0h1m3 0h1m5 0h1m10 0h1m3 0h1m25 0h1m10 0h1m1 0h1m7 0h1m8 0h1m71 0h1m23 0h1m156 0h1m3 0h1m10 0h1m6 0h1m3 0h2m2 0h1m2 0h1m3 0h1m-437 1h1m22 0h1m9 0h1m3 0h1m1 0h1m1 0h2m5 0h1m14 0h2m3 0h3m15 0h1m1 0h2m1 0h1m15 0h1m8 0h1m6 0h1m6 0h2m5 0h1m1 0h1m4 0h2m4 0h4m63 0h2m2 0h1m13 0h1m9 0h1m2 0h1m4 0h3m7 0h2m8 0h2m2 0h3m6 0h1m2 0h1m3 0h1m2 0h1m101 0h1m11 0h2m8 0h1m5 0h1m-430 1h1m10 0h1m32 0h2m20 0h1m12 0h1m7 0h1m1 0h1m28 0h1m5 0h1m8 0h2m11 0h1m1 0h1m4 0h1m1 0h2m63 0h1m2 0h1m11 0h1m10 0h1m4 0h1m2 0h1m3 0h1m1 0h2m2 0h1m14 0h5m4 0h3m2 0h1m5 0h1m109 0h1m7 0h2m5 0h2m3 0h1m1 0h2m-399 1h1m9 0h2m18 0h3m2 0h1m13 0h1m6 0h1m16 0h1m9 0h2m5 0h1m2 0h2m4 0h3m2 0h1m4 0h1m5 0h1m3 0h1m65 0h2m17 0h1m2 0h1m18 0h1m18 0h1m20 0h1m95 0h2m7 0h1m2 0h1m20 0h2m4 0h1m-396 1h3m6 0h1m9 0h2m2 0h4m2 0h2m1 0h1m14 0h1m10 0h1m19 0h1m9 0h1m2 0h3m4 0h1m101 0h1m15 0h1m1 0h1m3 0h1m133 0h1m5 0h1m1 0h3m3 0h1m2 0h1m3 0h1m14 0h1m-421 1h1m1 0h1m24 0h1m26 0h1m2 0h1m2 0h1m22 0h1m7 0h1m7 0h1m3 0h1m10 0h1m16 0h1m2 0h1m2 0h2m69 0h1m1 0h1m37 0h1m144 0h1m27 0h1m-442 1h1m15 0h1m2 0h3m4 0h1m4 0h1m13 0h2m23 0h1m3 0h1m14 0h2m8 0h1m2 0h1m5 0h2m13 0h1m10 0h1m1 0h3m11 0h2m2 0h2m2 0h1m73 0h1m12 0h1m24 0h1m32 0h1m3 0h3m99 0h2m16 0h1m3 0h1m1 0h1m1 0h2m2 0h2m-422 1h2m8 0h3m11 0h1m3 0h1m22 0h1m7 0h1m1 0h1m10 0h1m10 0h1m5 0h1m1 0h1m7 0h1m12 0h1m2 0h1m7 0h1m5 0h1m5 0h2m4 0h2m1 0h2m66 0h1m2 0h1m10 0h1m55 0h1m105 0h1m2 0h1m1 0h1m14 0h2m6 0h1m9 0h1m-427 1h3m5 0h1m1 0h1m2 0h1m16 0h1m9 0h1m1 0h1m8 0h1m11 0h1m2 0h1m16 0h1m1 0h1m3 0h1m16 0h1m17 0h3m2 0h2m6 0h1m3 0h1m2 0h2m68 0h1m13 0h1m13 0h1m11 0h1m27 0h2m105 0h1m6 0h1m3 0h1m1 0h1m1 0h1m4 0h1m-414 1h1m3 0h5m5 0h1m3 0h1m32 0h1m2 0h3m29 0h1m1 0h1m1 0h1m2 0h1m7 0h1m1 0h1m5 0h1m1 0h1m9 0h1m4 0h1m2 0h5m15 0h1m71 0h1m11 0h1m52 0h1m100 0h1m6 0h1m16 0h1m1 0h1m1 0h1m2 0h1m6 0h1m6 0h1m-437 1h3m6 0h3m6 0h1m29 0h1m3 0h1m2 0h1m2 0h2m10 0h1m2 0h2m15 0h1m1 0h1m5 0h1m6 0h4m4 0h3m18 0h1m2 0h3m4 0h2m79 0h1m23 0h1m15 0h1m24 0h1m112 0h1m13 0h1m8 0h1m9 0h2m-456 1h1m17 0h4m1 0h1m1 0h1m3 0h1m5 0h2m29 0h2m2 0h1m6 0h1m6 0h2m2 0h1m1 0h2m5 0h1m26 0h1m3 0h2m12 0h2m1 0h1m9 0h1m1 0h5m1 0h2m4 0h3m73 0h2m2 0h1m4 0h1m9 0h1m16 0h1m2 0h1m18 0h1m12 0h2m90 0h1m2 0h1m7 0h5m1 0h2m7 0h1m16 0h3m-429 1h1m4 0h1m5 0h1m5 0h1m31 0h1m2 0h2m4 0h2m1 0h1m5 0h1m29 0h1m6 0h1m1 0h1m8 0h1m10 0h2m3 0h1m6 0h2m3 0h4m71 0h1m1 0h1m1 0h1m57 0h2m10 0h1m110 0h1m4 0h1m18 0h1m-453 1h1m24 0h1m30 0h1m6 0h1m9 0h1m5 0h1m13 0h2m4 0h1m16 0h2m3 0h2m8 0h1m5 0h1m1 0h1m2 0h1m1 0h1m3 0h1m2 0h1m10 0h1m4 0h1m65 0h1m14 0h1m34 0h1m18 0h3m12 0h1m101 0h1m3 0h1m4 0h1m5 0h1m4 0h1m9 0h1m2 0h1m-428 1h1m2 0h3m2 0h1m3 0h1m18 0h1m23 0h3m10 0h3m17 0h1m8 0h1m4 0h1m5 0h3m3 0h1m14 0h2m1 0h1m8 0h1m1 0h1m7 0h1m67 0h1m39 0h1m14 0h1m1 0h1m110 0h1m4 0h3m7 0h2m17 0h1m4 0h1m1 0h2m-430 1h1m2 0h3m45 0h4m8 0h1m6 0h1m21 0h1m14 0h1m6 0h1m7 0h1m96 0h2m10 0h1m47 0h1m13 0h1m98 0h1m9 0h2m7 0h1m1 0h2m4 0h1m3 0h1m2 0h1m-438 1h1m2 0h1m6 0h1m1 0h4m49 0h1m5 0h1m3 0h1m1 0h1m27 0h1m6 0h2m3 0h1m5 0h1m3 0h1m26 0h1m82 0h1m47 0h1m4 0h1m106 0h1m3 0h1m1 0h1m5 0h1m5 0h1m6 0h1m1 0h1m2 0h1m2 0h2m1 0h1m-431 1h1m62 0h3m2 0h1m1 0h1m1 0h1m3 0h1m33 0h2m2 0h1m1 0h1m23 0h1m4 0h1m4 0h1m1 0h2m67 0h1m2 0h1m17 0h1m1 0h1m24 0h1m11 0h1m2 0h2m11 0h1m96 0h1m1 0h3m2 0h1m4 0h1m12 0h1m1 0h1m5 0h1m1 0h1m-425 1h1m62 0h1m1 0h1m1 0h1m2 0h1m32 0h1m2 0h1m1 0h1m1 0h1m102 0h1m6 0h2m4 0h2m2 0h1m1 0h1m6 0h1m28 0h4m1 0h1m1 0h1m3 0h2m2 0h1m8 0h1m100 0h1m5 0h1m11 0h1m4 0h1m1 0h1m5 0h2m-363 1h1m1 0h1m2 0h1m4 0h1m1 0h1m26 0h1m22 0h1m1 0h1m7 0h1m5 0h1m69 0h1m5 0h1m2 0h1m4 0h3m9 0h1m30 0h1m2 0h1m7 0h1m2 0h1m7 0h1m5 0h1m89 0h1m4 0h1m7 0h1m1 0h1m4 0h1m7 0h1m4 0h1m4 0h3m-431 1h1m74 0h1m13 0h1m20 0h2m12 0h3m18 0h1m78 0h1m58 0h1m108 0h5m13 0h4m1 0h1m2 0h1m3 0h1m3 0h1m3 0h1m-435 1h1m2 0h1m77 0h2m12 0h2m9 0h1m7 0h1m12 0h1m1 0h1m5 0h2m7 0h3m85 0h1m12 0h1m58 0h1m89 0h1m4 0h2m8 0h1m5 0h3m3 0h1m5 0h1m2 0h1m3 0h1m5 0h1m-456 1h1m1 0h1m104 0h1m3 0h1m4 0h2m29 0h1m15 0h1m5 0h1m124 0h2m8 0h1m12 0h1m93 0h1m2 0h1m18 0h1m9 0h1m3 0h1m7 0h1m-368 1h2m1 0h1m1 0h1m1 0h1m11 0h1m8 0h1m6 0h1m5 0h1m12 0h1m2 0h1m6 0h1m16 0h1m124 0h1m11 0h1m1 0h2m4 0h1m107 0h3m8 0h1m10 0h1m4 0h2m4 0h1m-455 1h1m55 0h1m30 0h1m25 0h1m14 0h2m13 0h1m14 0h1m7 0h1m74 0h1m65 0h2m108 0h1m3 0h1m15 0h2m7 0h1m6 0h1m-397 1h1m28 0h1m5 0h1m1 0h1m15 0h1m9 0h1m8 0h1m9 0h1m2 0h1m4 0h1m9 0h4m80 0h1m66 0h2m100 0h1m1 0h1m8 0h1m8 0h2m-343 1h1m32 0h1m9 0h1m2 0h1m1 0h1m4 0h1m4 0h1m9 0h1m72 0h1m9 0h1m12 0h1m42 0h1m1 0h1m21 0h2m91 0h1m12 0h1m5 0h1m9 0h1m10 0h1m-343 1h1m10 0h1m8 0h1m3 0h1m2 0h1m3 0h1m9 0h1m3 0h1m3 0h1m2 0h1m74 0h1m173 0h1m18 0h1m8 0h1m1 0h2m-358 1h1m5 0h2m19 0h2m2 0h1m2 0h1m7 0h2m6 0h1m20 0h1m2 0h1m68 0h1m7 0h1m14 0h1m160 0h1m2 0h1m1 0h1m13 0h2m6 0h1m-358 1h1m8 0h2m17 0h1m8 0h3m3 0h2m2 0h1m5 0h2m3 0h2m12 0h1m5 0h1m1 0h1m71 0h1m3 0h1m10 0h1m2 0h1m57 0h1m2 0h1m97 0h3m3 0h1m12 0h1m9 0h1m1 0h1m-332 1h1m4 0h4m10 0h1m4 0h2m2 0h1m1 0h1m1 0h1m9 0h1m2 0h1m1 0h1m1 0h2m65 0h1m10 0h1m10 0h1m57 0h4m110 0h2m7 0h1m2 0h1m5 0h2m-352 1h1m28 0h2m1 0h1m2 0h3m9 0h1m5 0h1m2 0h1m82 0h1m8 0h1m2 0h1m69 0h2m98 0h3m8 0h1m7 0h2m2 0h2m1 0h1m2 0h1m5 0h2m-367 1h1m44 0h1m35 0h1m69 0h1m72 0h1m1 0h1m5 0h1m2 0h2m94 0h1m2 0h1m13 0h1m2 0h1m-426 1h1m2 0h1m6 0h1m140 0h1m69 0h1m1 0h1m17 0h2m54 0h1m105 0h1m4 0h1m16 0h1m-308 1h1m31 0h1m1 0h1m70 0h1m5 0h1m1 0h1m68 0h1m1 0h1m10 0h1m1 0h1m88 0h1m3 0h1m34 0h1m1 0h1m-452 1h1m6 0h1m219 0h2m6 0h2m7 0h3m61 0h1m1 0h3m2 0h2m2 0h1m1 0h1m91 0h1m18 0h1m4 0h1m1 0h1m6 0h3m-221 1h1m1 0h1m6 0h2m1 0h1m4 0h1m59 0h2m2 0h3m1 0h1m6 0h2m89 0h1m2 0h3m1 0h1m8 0h1m8 0h1m-440 1h1m3 0h1m227 0h1m1 0h1m2 0h1m72 0h1m3 0h1m2 0h1m6 0h1m94 0h1m9 0h3m8 0h1m11 0h1m-451 1h1m305 0h1m15 0h1m107 0h1m5 0h1m6 0h1m2 0h1m4 0h1m-211 1h1m1 0h1m77 0h3m104 0h1m-429 1h1m228 0h1m13 0h1m65 0h1m135 0h1m-217 1h1m79 0h1m1 0h1m9 0h1m95 0h1m36 0h1m-225 1h1m80 0h2m10 0h1m96 0h1m-109 1h1m104 0h1m23 0h1m-212 1h1m82 0h1m103 0h1m20 0h1m15 0h1m-328 1h1m186 0h1m9 0h1m96 0h1m2 0h1m19 0h2m-436 1h1m306 0h1m6 0h2m93 0h1m3 0h3m17 0h1m-445 1h1m317 0h1m7 0h1m93 0h1m2 0h1m3 0h1m-428 1h1m8 0h1m118 0h1m188 0h2m6 0h2m98 0h1m5 0h2m9 0h1m5 0h1m-449 1h1m15 0h1m301 0h1m5 0h3m95 0h2m1 0h2m11 0h1m1 0h2m-217 1h1m2 0h1m4 0h1m85 0h1m1 0h2m4 0h1m95 0h1m8 0h3m4 0h1m3 0h1m-433 1h1m309 0h4m97 0h2m7 0h3m4 0h5m7 0h1m-315 1h1m184 0h2m1 0h1m97 0h1m2 0h2m2 0h1m4 0h2m3 0h2m8 0h1m-434 1h1m133 0h2m7 0h1m71 0h3m90 0h1m2 0h1m97 0h1m5 0h1m10 0h1m10 0h1m2 0h1m-457 1h1m126 0h1m22 0h1m16 0h1m64 0h1m191 0h1m6 0h2m3 0h1m12 0h1m-450 1h1m229 0h1m194 0h1m1 0h1m3 0h1m2 0h1m4 0h1m2 0h2m4 0h1m-292 1h1m3 0h1m4 0h1m160 0h1m102 0h2m10 0h1m3 0h1m8 0h1m-324 1h1m1 0h1m2 0h1m2 0h1m5 0h1m154 0h1m25 0h2m111 0h3m7 0h7m-455 1h1m150 0h1m1 0h1m6 0h3m12 0h1m1 0h1m248 0h1m7 0h1m11 0h2m2 0h1m3 0h1m-456 1h2m133 0h1m16 0h1m6 0h1m13 0h1m7 0h1m39 0h3m218 0h3m3 0h1m-401 1h1m74 0h2m1 0h1m18 0h1m2 0h1m12 0h1m1 0h1m2 0h2m8 0h1m2 0h1m262 0h3m-397 1h1m7 0h1m57 0h1m9 0h1m4 0h1m4 0h1m6 0h1m1 0h1m5 0h1m178 0h1m109 0h1m3 0h1m1 0h1m2 0h2m-434 1h1m31 0h2m70 0h1m1 0h3m2 0h1m5 0h1m3 0h1m2 0h1m4 0h1m2 0h1m18 0h1m261 0h1m24 0h1m-454 1h1m13 0h1m30 0h1m67 0h1m9 0h1m14 0h1m2 0h1m6 0h1m5 0h1m18 0h2m273 0h2m3 0h1m1 0h1m-457 1h1m43 0h1m3 0h2m87 0h1m1 0h1m20 0h1m3 0h1m3 0h1m3 0h4m274 0h1m-440 1h2m105 0h1m4 0h1m3 0h3m4 0h1m1 0h4m7 0h1m8 0h1m4 0h1m7 0h1m5 0h1m-174 1h1m112 0h3m5 0h1m9 0h1m2 0h1m5 0h2m12 0h1m4 0h2m166 0h1m-329 1h1m114 0h1m8 0h1m3 0h1m1 0h1m11 0h1m29 0h1m5 0h1m43 0h1m222 0h1m4 0h1m-476 1h2m34 0h1m125 0h1m5 0h1m33 0h1m255 0h1m12 0h1m2 0h1m-480 1h1m8 0h1m140 0h1m8 0h2m1 0h2m6 0h1m2 0h1m10 0h1m1 0h1m4 0h2m1 0h1m7 0h1m3 0h1m44 0h2m211 0h1m2 0h2m8 0h2m1 0h1m-472 1h3m17 0h1m11 0h1m26 0h1m16 0h1m11 0h1m4 0h1m9 0h1m1 0h1m5 0h1m6 0h1m2 0h1m28 0h2m4 0h1m22 0h4m6 0h1m4 0h1m5 0h1m3 0h1m4 0h1m1 0h1m10 0h2m13 0h1m1 0h1m1 0h2m1 0h1m7 0h1m14 0h1m3 0h1m1 0h2m11 0h2m2 0h1m50 0h4m5 0h1m4 0h1m12 0h1m3 0h1m2 0h1m1 0h1m9 0h1m7 0h1m2 0h1m8 0h1m2 0h1m1 0h1m1 0h1m30 0h1m7 0h1m12 0h1m2 0h2m2 0h1m-472 1h1m15 0h2m5 0h2m5 0h2m3 0h1m4 0h1m1 0h2m2 0h1m3 0h2m4 0h3m2 0h1m1 0h1m2 0h2m8 0h1m2 0h1m1 0h1m2 0h3m2 0h1m2 0h1m1 0h1m2 0h2m1 0h1m7 0h4m2 0h1m1 0h1m2 0h4m2 0h1m1 0h1m3 0h1m2 0h1m4 0h1m4 0h1m11 0h1m2 0h3m1 0h1m5 0h4m2 0h3m1 0h3m1 0h1m2 0h1m1 0h1m2 0h3m2 0h2m1 0h1m2 0h4m5 0h2m4 0h1m5 0h1m2 0h1m4 0h3m1 0h1m5 0h1m2 0h2m4 0h2m1 0h1m2 0h1m3 0h1m1 0h1m3 0h8m11 0h1m1 0h3m2 0h1m1 0h1m1 0h1m3 0h1m2 0h1m4 0h1m4 0h2m1 0h1m1 0h2m3 0h1m1 0h1m2 0h6m4 0h4m4 0h1m2 0h1m2 0h3m1 0h4m8 0h1m6 0h1m4 0h1m3 0h1m1 0h1m7 0h4m4 0h2m4 0h1m3 0h3m6 0h1m5 0h1m9 0h1m5 0h5m7 0h1m3 0h1m5 0h1m4 0h3m-479 1h1m18 0h1m3 0h1m5 0h1m1 0h1m5 0h1m1 0h1m7 0h1m9 0h1m10 0h1m17 0h1m8 0h1m1 0h1m5 0h1m21 0h1m1 0h1m5 0h1m16 0h1m4 0h1m2 0h1m11 0h1m2 0h1m46 0h2m15 0h1m21 0h1m2 0h1m4 0h1m3 0h1m10 0h1m10 0h1m6 0h2m7 0h1m6 0h1m6 0h1m1 0h1m1 0h1m34 0h1m26 0h1m6 0h1m1 0h1m4 0h1m4 0h1m8 0h1m1 0h1m16 0h1m10 0h1m5 0h1m2 0h1m1 0h1m4 0h1m5 0h1m1 0h1m7 0h2m-8 1h1m6 0h1m-8 1h1m1 1h1"/><path stroke="#0abb12" d="M0 0m298 68h1m41 84h1m69 25h2m-97 1h1m40 0h1m10 2h1m34 0h1m2 0h1m-45 1h1m3 0h1m16 0h1m3 0h1m8 0h1m5 0h1m-83 1h2m2 0h1m15 1h1m55 0h1m-75 1h1m4 0h1m3 0h1m6 0h1m38 0h1m-25 1h1m44 0h1m-68 1h1m5 0h1m19 0h1m11 0h1m3 0h1m32 0h1m-85 1h1m48 0h1m19 0h1m-19 1h1m-14 1h1m28 0h1m2 0h1m3 0h1m-62 1h1m8 0h1m4 0h1m19 0h1m3 0h1m-37 1h1m4 0h1m15 0h1m10 0h1m37 0h1m-41 2h1m15 0h1m-47 1h1m60 1h1m-58 1h1m45 1h1m-44 1h1m38 0h1m6 1h1m-43 1h1m28 0h1m-20 1h2m-5 2h1m1 1h1m11 1h1m3 0h1m-3 1h1m1 2h1m-6 1h1m2 1h1m-14 2h1m-1 2h1m7 0h1m-13 3h1m1 0h1m8 0h1m9 0h1m-20 1h1m-5 2h2m-131 2h1m150 0h1m-23 1h1m22 1h1m1 4h1m-18 1h1m14 1h1m4 0h1m-21 1h1m3 0h1m12 0h1m-26 7h1m21 1h1m-4 1h1m-20 1h1m20 0h1m-15 2h1m-1 2h1m1 1h1m-2 3h1m26 0h1m-7 2h1m-3 1h1m7 0h1m-30 1h1m8 1h1m2 2h1m1 0h1m-19 2h1m16 1h1m-3 1h1m7 0h1m2 1h1m1 1h1m-20 1h1m14 0h1m-26 1h1m8 0h1m16 0h1m-28 1h1m12 0h1m2 0h1m6 0h1m-31 2h1m24 0h1m8 0h1m-20 1h1m-9 1h1m8 0h1m19 0h1m-52 1h1m22 0h1m-29 1h1m14 0h1m19 0h1m-42 1h1m1 0h1m56 0h1m2 0h1m-66 1h1m14 0h1m30 0h1m3 0h1m-41 1h1m29 0h1m62 0h1m-113 1h1m66 0h1m46 0h1m-119 1h1m12 0h1m39 0h1m57 0h1m1 0h1m10 0h1m-131 1h1m120 0h1m11 0h1m-63 1h1m52 0h1m12 0h1m-132 1h1m64 0h1m69 0h1m-155 1h1m14 0h1m71 0h1m56 0h1m12 0h1m-163 1h1m14 0h1m114 0h1m-135 1h1m92 0h1m-61 1h1m-27 1h2m41 0h1m29 0h1m86 0h1m-166 1h1m1 0h1m14 0h1m15 0h1m4 0h1m18 0h2m4 0h1m14 0h1m21 0h1m45 0h1m-150 1h1m3 0h1m52 0h1m8 0h1m19 0h1m64 0h2m-146 1h1m10 0h1m62 0h1m-17 1h1m6 0h1m8 1h1m30 0h1m-62 1h1m-55 1h1m69 0h2m8 0h1m42 0h1m-76 1h1m37 0h1m23 0h1m68 0h1m-7 1h1m-89 1h1m21 0h1m3 0h1m-104 1h1m3 0h1m83 0h1m-17 1h1m14 0h1m75 0h1m5 0h1m3 0h1m-89 1h1m4 0h1m-88 1h1m83 0h1m7 0h1m-14 2h1m2 0h1m84 0h1m-175 3h1m74 1h1m3 0h1m27 2h1m-29 2h1m31 1h1m5 1h1m-32 3h1m24 0h1m-29 1h1m25 0h1m-33 1h1m33 1h1m-34 2h1m29 0h1m-30 1h1m10 0h1m15 0h1m-16 1h1m6 1h1m-26 5h1m17 1h1m3 0h1m-4 2h1m16 0h1m9 0h1m-37 3h1m-9 3h1m3 0h1m40 1h1m-45 1h2m1 1h1m41 1h1m-51 2h1m49 0h1m-47 1h1m46 2h1m-53 2h1m42 2h1m4 0h1m-46 1h1m37 0h1m-43 1h1m53 0h1m-10 1h1m-4 2h1m12 0h1m-57 2h1m39 0h1m-18 1h1m27 0h1m-26 2h1m-299 1h1m270 0h1m32 1h1m-316 1h1m8 0h1m297 0h1m6 0h1m-9 1h1m8 0h1m25 0h1m-336 1h1m11 0h1m43 0h1m2 0h1m244 0h2m-297 1h2m264 0h1m31 0h1m4 0h1m-18 1h1m25 0h1m-313 1h2m282 0h1m16 0h1m4 0h1m16 0h1m-305 1h1m257 0h1m30 0h1m5 0h1m-40 1h1m11 0h1m16 0h1m-286 1h1m245 0h1m19 0h1m-269 1h1m250 0h1m46 0h1m12 0h1m-328 1h1m263 0h1m16 0h1m25 0h1m-291 1h1m249 0h1m-268 1h1m22 0h1m-25 1h2m21 0h2m253 0h1m34 0h1m-314 1h2m18 0h1m2 0h1m253 0h1m51 1h1m-13 1h1m-299 1h1m2 0h1m1 0h1m247 0h1m-256 1h1m1 0h1m3 0h1m4 0h1m1 0h1m232 0h1m56 0h1m9 0h1m-312 1h2m2 0h1m1 0h2m53 0h1m187 0h1m-268 1h1m18 0h2m62 0h1m238 0h1m-300 1h1m55 0h1m244 0h1m-307 1h1m7 0h1m52 0h1m245 0h1m-327 1h1m21 0h1m1 0h1m2 0h1m56 0h1m48 0h1m128 0h1m68 0h1m-386 1h1m2 0h1m50 0h1m16 0h1m9 0h1m48 0h1m5 0h1m2 0h1m51 0h1m187 0h1m-382 1h1m3 0h1m68 0h1m4 0h1m51 0h1m57 0h1m2 0h1m13 0h1m6 0h1m167 0h1m-324 1h1m23 0h1m3 0h1m39 0h1m2 0h1m79 0h1m112 0h1m2 0h1m-320 1h1m49 0h1m1 0h1m14 0h1m2 0h1m1 0h3m6 0h1m36 0h1m3 0h1m15 0h1m60 0h1m3 0h1m108 0h1m70 0h1m63 0h1m-465 1h1m1 0h1m5 0h1m2 0h1m2 0h1m7 0h1m2 0h1m2 0h1m3 0h1m3 0h1m2 0h2m2 0h1m1 0h1m1 0h1m1 0h1m1 0h1m2 0h2m2 0h1m2 0h1m8 0h1m6 0h1m1 0h1m2 0h1m12 0h1m2 0h1m36 0h1m23 0h1m1 0h1m34 0h1m6 0h1m9 0h1m8 0h1m118 0h1m195 0h1m-533 1h1m88 0h1m42 0h2m17 0h1m44 0h1m21 0h1m108 0h1m67 0h1m130 0h1m-531 1h1m1 0h1m1 0h1m2 0h2m1 0h2m1 0h1m1 0h1m1 0h1m1 0h1m2 0h2m1 0h1m9 0h1m1 0h1m1 0h1m1 0h1m4 0h1m4 0h1m7 0h2m2 0h1m6 0h1m2 0h1m8 0h1m1 0h1m11 0h1m33 0h1m30 0h1m5 0h1m57 0h1m1 0h1m2 0h1m2 0h1m104 0h1m-183 1h1m7 0h1m33 0h1m28 0h1m2 0h1m96 0h1m200 0h1m7 0h1m-441 1h1m60 0h1m3 0h2m11 0h1m57 0h1m-141 1h1m2 0h1m24 0h1m6 0h1m1 0h1m29 0h1m1 0h1m35 0h1m36 0h1m-138 1h1m24 0h1m3 0h2m6 0h1m3 0h1m30 0h1m66 0h1m2 0h1m105 0h1m54 0h1m-311 1h1m1 0h1m122 0h1m6 0h2m13 0h2m273 0h1m3 0h1m-427 1h1m34 0h1m3 0h1m23 0h1m22 0h1m37 0h1m28 0h1m99 0h1m170 0h1m-374 1h1m34 0h1m36 0h1m27 0h1m159 0h1m-307 1h2m19 0h1m3 0h1m73 0h1m19 0h1m35 0h1m-140 1h1m9 0h1m57 0h1m13 0h1m151 0h1m179 0h2m-351 1h2m3 0h1m149 0h1m8 0h1m43 0h1m3 0h1m5 0h1m1 0h1m129 0h1m-432 1h2m18 0h1m68 0h1m1 0h1m6 0h1m61 0h1m69 0h1m199 0h1m16 0h1m-432 1h1m64 0h1m12 0h1m1 0h1m41 0h2m3 0h1m105 0h1m57 0h1m138 0h1m-446 1h1m81 0h1m21 0h3m35 0h1m14 0h1m75 0h1m4 0h1m13 0h1m29 0h1m-289 1h2m-2 1h1m22 0h1m69 0h1m39 0h1m12 0h1m-146 1h2m3 0h1m16 0h1m61 0h1m11 0h1m3 0h2m15 0h1m14 0h1m113 0h1m65 0h1m-253 1h1m38 0h1m17 0h1m3 0h1m-123 1h1m1 0h1m17 0h1m74 0h1m6 0h1m19 0h1m20 0h1m1 0h1m1 0h1m98 0h1m32 0h1m-262 1h1m77 0h1m11 0h1m11 0h2m22 0h1m21 0h1m1 0h1m79 0h1m19 0h1m158 0h1m-348 1h1m22 0h1m62 0h1m85 0h1m61 0h1m-314 1h1m18 0h1m27 0h1m32 0h1m20 0h2m8 0h1m13 0h1m13 0h1m287 0h1m-378 1h2m58 0h1m2 0h1m24 0h1m27 0h1m128 0h1m131 0h1m-428 1h1m4 0h1m59 0h1m2 0h1m50 0h1m8 0h2m137 0h1m3 0h1m25 0h1m-297 1h1m108 0h2m3 0h1m54 0h1m85 0h1m19 0h1m-278 1h1m4 0h1m83 0h1m22 0h2m140 0h1m1 0h1m20 0h1m19 0h1m17 0h1m92 0h1m-409 1h1m110 0h1m8 0h1m119 0h1m168 0h1m-408 1h1m2 0h1m1 0h1m31 0h1m82 0h1m7 0h1m20 0h1m80 0h1m-197 1h1m14 0h1m15 0h2m18 0h1m20 0h1m127 0h1m53 0h1m19 0h1m-310 1h1m5 0h1m13 0h1m17 0h1m20 0h1m28 0h1m18 0h1m1 0h1m12 0h1m44 0h1m3 0h1m143 0h1m116 0h1m18 0h3m-409 1h1m47 0h1m24 0h1m46 0h1m1 0h1m3 0h1m139 0h1m141 0h1m-415 1h2m18 0h1m62 0h1m44 0h1m98 0h1m25 0h1m2 0h1m112 0h1m42 0h2m-454 1h1m4 0h1m34 0h2m14 0h1m48 0h1m13 0h1m53 0h1m57 0h1m-214 1h1m78 0h1m3 0h1m17 0h1m114 0h1m82 0h1m136 0h1m-449 1h1m47 0h1m66 0h1m108 0h1m67 0h1m-257 1h1m11 0h2m247 0h1m113 0h2m-414 1h1m51 0h1m13 0h1m27 0h2m65 0h1m6 0h1m56 0h1m69 0h1m-207 1h1m4 0h1m4 0h1m28 0h1m42 0h1m2 0h1m104 0h1m158 0h1m1 0h1m-440 1h1m164 0h1m2 0h1m74 0h1m11 0h1m56 0h1m124 0h1m-405 1h1m26 0h1m17 0h1m86 0h1m57 0h1m-191 1h1m31 0h1m1 0h1m26 0h1m18 0h1m54 0h1m73 0h1m14 0h1m23 0h1m-114 1h1m58 0h1m174 0h1m-378 1h1m3 0h1m5 0h1m69 0h1m59 0h1m8 0h1m81 0h1m47 0h1m1 0h1m93 0h1m-401 1h2m24 0h1m65 0h1m12 0h1m10 0h1m41 0h1m154 0h1m-246 1h1m24 0h1m20 0h1m49 0h1m57 0h1m7 0h1m-203 1h1m37 0h1m9 0h2m3 0h1m11 0h2m44 0h1m22 0h1m86 0h1m46 0h1m12 0h1m-275 1h1m41 0h1m84 0h2m85 0h1m64 0h1m-220 1h1m-24 1h1m20 0h1m25 0h1m7 0h1m13 0h1m5 0h2m-148 1h1m2 0h1m90 0h1m21 0h1m1 0h1m5 0h1m1 0h1m18 0h2m73 0h1m186 0h1m-410 1h1m117 0h1m24 0h1m3 0h1m157 0h1m3 0h1m-307 1h1m60 0h1m3 0h1m73 0h2m2 0h1m14 0h1m87 0h1m-247 1h1m298 0h1m97 0h1m-401 1h1m2 0h1m1 0h1m66 0h1m30 0h1m15 0h2m38 0h1m61 0h1m12 0h1m166 0h1m41 0h1m-421 1h1m271 0h1m148 0h1m-318 1h1m99 0h1m89 0h1m113 0h1m-432 1h1m87 0h1m18 0h3m23 0h1m91 0h1m71 0h1m-209 1h1m41 0h1m3 0h1m181 0h1m124 0h1m-355 1h1m53 0h1m96 0h1m-240 1h1m114 0h1m14 0h1m89 0h1m12 0h1m202 0h1m-323 1h1m203 0h1m130 0h1m-446 1h1m142 0h1m7 0h1m272 0h1m19 0h1m-448 1h1m1 0h1m401 0h1m22 0h2m-126 1h1m104 0h1m-405 1h1m149 0h1m63 0h1m19 0h1m-240 1h1m1 0h2m315 0h1m85 0h1m2 0h2m-408 1h1m-3 1h1m4 0h1m227 0h1m2 0h1m175 0h1m17 0h1m-430 1h2m48 0h1m69 0h1m96 0h1m101 0h1m128 0h1m-448 1h1m116 0h1m101 0h1m13 0h1m-236 1h1m118 0h1m110 0h1m179 0h1m-409 1h1m405 0h4m-412 1h2m215 0h1m188 0h1m2 0h1m-89 1h1m126 0h1m-445 1h1m45 0h1m169 0h1m10 0h1m213 0h1m-445 1h1m1 2h1m1 1h1m120 0h1m6 0h1m24 0h1m57 0h1m2 0h1m-218 1h1m2 0h1m316 0h1m137 0h1m-458 1h1m158 0h1m56 0h1m-218 1h1m-2 1h1m2 0h1m160 0h1m49 0h1m69 0h1m12 0h1m24 0h1m-324 1h1m4 0h1m30 0h2m4 0h1m4 0h1m96 0h1m15 0h2m4 0h1m102 0h1m3 0h1m1 0h1m6 0h1m1 0h1m3 0h1m-284 1h1m30 0h1m6 0h1m1 0h1m89 0h1m135 0h1m-267 1h1m40 0h1m63 0h1m1 0h1m1 0h1m9 0h1m40 0h1m255 0h1m27 0h1m-542 1h2m90 0h1m4 0h1m39 0h2m167 0h1m-306 1h2m89 0h1m323 0h1m94 0h1m20 0h1m-396 1h1m1 0h1m91 0h1m286 0h2m-428 1h1m138 0h1m77 0h1m207 0h1m2 0h1m-291 1h1m74 0h1m213 0h1m-103 1h1m99 0h1m-464 1h1m40 0h2m41 0h1m-45 1h1m42 0h1m-77 1h1m29 0h1m322 0h1m-3 1h1m-362 1h1m18 0h1m1 0h1m-15 1h1m192 0h1m-192 1h1m464 0h1m1 1h1m1 0h1"/><path stroke="#0ec24d" d="M0 0m408 177h1m-96 1h1m5 0h1m2 0h1m4 0h1m3 0h1m2 0h3m1 0h1m3 0h1m4 0h1m1 0h1m1 0h1m1 0h1m5 0h1m2 0h1m1 0h2m6 0h1m1 0h1m1 0h1m2 0h1m2 0h1m1 0h1m1 0h1m1 0h1m1 0h1m2 0h1m1 0h2m1 0h2m1 0h1m2 0h1m4 0h1m1 0h3m-102 1h1m1 0h2m2 0h1m1 0h1m1 0h5m2 0h2m5 0h2m1 0h1m1 0h1m1 0h2m1 0h1m1 0h1m2 0h1m1 0h2m5 0h2m1 0h1m2 0h2m7 0h1m1 0h1m1 0h1m2 0h2m1 0h1m1 0h1m1 0h1m2 0h1m2 0h1m3 0h5m1 0h1m1 0h2m1 0h1m-100 1h1m1 0h2m1 0h1m2 0h1m2 0h1m1 0h1m1 0h1m1 0h1m1 0h1m4 0h4m1 0h1m1 0h2m1 0h1m1 0h1m4 0h1m2 0h1m1 0h1m6 0h2m2 0h1m1 0h1m3 0h1m1 0h1m2 0h1m1 0h1m1 0h1m2 0h1m5 0h1m2 0h2m2 0h1m1 0h1m4 0h1m3 0h2m-97 1h1m4 0h1m2 0h2m6 0h1m6 0h2m1 0h1m13 0h2m6 0h1m20 0h2m11 0h1m2 0h1m8 0h1m-94 1h2m7 0h2m11 0h1m15 0h1m1 0h2m6 0h1m18 0h1m1 0h1m11 0h1m1 0h2m9 0h1m-96 1h1m3 0h1m7 0h1m7 0h3m3 0h1m13 0h1m1 0h1m5 0h1m1 0h1m17 0h1m2 0h1m9 0h1m4 0h1m7 0h1m-93 1h3m2 0h1m4 0h1m1 0h1m6 0h1m5 0h1m11 0h1m1 0h1m7 0h1m10 0h1m8 0h1m1 0h2m7 0h1m1 0h1m4 0h1m5 0h1m-91 1h1m1 0h2m1 0h1m7 0h1m2 0h2m5 0h1m1 0h1m9 0h1m3 0h2m6 0h2m7 0h1m8 0h1m3 0h1m8 0h1m5 0h2m10 0h1m-93 1h1m3 0h1m4 0h1m1 0h1m1 0h1m7 0h1m8 0h1m4 0h1m15 0h1m8 0h2m3 0h1m15 0h1m3 0h2m1 0h1m2 0h1m-91 1h1m2 0h1m1 0h1m3 0h4m8 0h1m8 0h1m4 0h1m9 0h1m3 0h1m9 0h1m5 0h1m5 0h1m9 0h1m1 0h1m3 0h1m-86 1h2m1 0h2m1 0h2m3 0h2m7 0h1m23 0h1m12 0h1m11 0h2m7 0h1m1 0h1m3 0h1m-84 1h1m1 0h1m1 0h2m5 0h1m1 0h1m5 0h2m3 0h1m1 0h1m15 0h1m21 0h1m2 0h1m12 0h3m-79 1h1m1 0h1m11 0h1m2 0h1m2 0h2m37 0h1m1 0h2m1 0h1m4 0h1m1 0h2m-72 1h1m12 0h1m1 0h1m3 0h1m40 0h1m1 0h2m3 0h2m3 0h1m-70 1h1m3 0h1m8 0h1m1 0h1m31 0h2m10 0h5m1 0h4m-68 1h1m1 0h1m1 0h2m7 0h1m1 0h1m7 0h2m20 0h1m11 0h1m3 0h1m1 0h1m1 0h1m-63 1h2m1 0h1m31 0h1m7 0h1m10 0h1m5 0h1m-59 1h1m55 0h1m-54 1h1m20 0h1m16 0h1m6 0h1m4 0h2m-51 1h1m18 0h1m1 0h1m10 0h1m3 0h1m8 0h1m1 0h2m-49 1h1m1 0h3m12 0h1m2 0h1m13 0h2m1 0h1m3 0h2m3 0h1m-41 1h1m9 0h1m2 0h1m13 0h1m1 0h2m1 0h1m1 0h1m2 0h1m-39 1h1m2 0h2m5 0h2m17 0h2m3 0h1m1 0h1m-35 1h2m1 0h1m4 0h1m1 0h1m15 0h2m1 0h1m2 0h1m-31 1h1m6 0h3m13 0h1m1 0h3m1 0h1m-25 1h1m1 0h1m2 0h1m1 0h1m9 0h1m4 0h2m-25 1h1m1 0h2m3 0h1m10 0h1m4 0h1m-23 1h2m5 0h1m1 0h1m12 0h1m-21 1h1m5 0h1m14 0h1m0 1h1m-2 1h2m-4 1h4m-10 1h1m6 0h1m1 0h1m-11 1h1m1 0h1m6 0h2m-24 1h1m13 0h1m7 0h2m-23 1h1m14 0h1m-13 1h1m14 0h1m-22 1h1m2 0h3m15 0h1m-21 1h2m2 0h1m14 0h1m1 0h4m-26 1h1m2 0h2m3 0h2m1 0h1m1 0h1m1 0h2m1 0h1m1 0h2m1 0h1m2 0h1m-28 1h1m1 0h2m1 0h1m2 0h1m2 0h1m1 0h1m1 0h1m2 0h3m1 0h2m1 0h1m2 0h2m-31 1h1m1 0h1m2 0h1m4 0h2m2 0h1m1 0h4m1 0h2m1 0h3m2 0h1m-31 1h1m1 0h1m5 0h1m13 0h4m2 0h2m-30 1h2m19 0h2m1 0h2m2 0h2m-31 1h1m1 0h1m9 0h1m8 0h1m1 0h2m5 0h1m-31 1h1m2 0h2m1 0h1m5 0h2m8 0h1m5 0h3m-30 1h3m1 0h1m7 0h1m1 0h1m1 0h1m1 0h1m9 0h2m-33 1h1m1 0h1m1 0h1m1 0h3m7 0h1m1 0h4m8 0h1m-30 1h1m1 0h1m1 0h1m1 0h1m8 0h2m1 0h1m1 0h1m8 0h1m1 0h1m-33 1h1m1 0h1m12 0h1m2 0h1m2 0h2m8 0h2m-18 1h3m3 0h1m1 0h1m7 0h1m1 0h1m-22 1h1m9 0h1m9 0h2m-28 1h1m4 0h2m19 0h2m-33 1h1m3 0h1m1 0h1m1 0h2m17 0h2m2 0h2m-32 1h1m1 0h1m1 0h3m1 0h1m18 0h1m-30 1h2m3 0h2m1 0h1m20 0h3m-32 1h1m1 0h1m4 0h2m20 0h1m3 0h2m-34 1h1m4 0h1m1 0h1m19 0h3m1 0h2m-28 1h1m20 0h1m2 0h1m1 0h2m-29 1h1m1 0h1m4 0h1m13 0h1m6 0h1m-28 1h1m5 0h1m10 0h1m1 0h1m7 0h1m-19 1h2m6 0h1m8 0h1m-16 1h2m13 0h1m-16 1h1m1 0h1m13 0h2m-14 1h1m11 0h2m-16 1h2m2 0h1m8 0h1m2 0h1m-11 1h1m7 0h1m1 0h1m-12 1h3m7 0h1m-23 1h2m14 0h1m5 0h1m-31 1h3m3 0h1m15 0h3m-26 1h1m3 0h1m-5 1h4m23 0h1m3 0h1m-32 1h1m1 0h1m27 0h1m2 0h1m-33 1h1m26 0h3m1 0h1m-28 1h1m20 0h1m2 0h1m1 0h1m-26 1h1m1 0h1m15 0h2m5 0h1m-24 1h1m1 0h1m10 0h1m1 0h1m1 0h1m5 0h1m-30 1h1m8 0h1m7 0h1m1 0h2m7 0h1m1 0h1m-32 1h1m10 0h1m7 0h1m9 0h1m-29 1h1m28 0h1m-13 1h1m12 0h1m-32 1h1m9 0h2m5 0h1m1 0h1m11 0h1m-32 1h2m7 0h1m2 0h1m6 0h2m9 0h1m1 0h1m-34 1h1m8 0h1m21 0h1m1 0h1m-33 1h1m6 0h1m22 0h1m1 0h1m-32 1h1m2 0h1m25 0h1m1 0h1m-4 1h1m1 0h2m-31 1h1m3 0h1m7 0h1m1 0h1m1 0h1m11 0h1m1 0h1m-37 1h1m6 0h1m1 0h1m1 0h1m4 0h1m2 0h1m1 0h1m13 0h1m-45 1h1m2 0h1m1 0h1m2 0h1m1 0h1m3 0h1m4 0h1m4 0h1m1 0h1m20 0h1m-51 1h1m1 0h1m1 0h1m1 0h1m2 0h1m2 0h1m3 0h1m1 0h2m29 0h1m4 0h1m-59 1h1m1 0h2m1 0h3m3 0h1m9 0h2m1 0h1m34 0h1m1 0h2m1 0h1m-69 1h1m1 0h3m2 0h3m17 0h1m26 0h1m1 0h1m7 0h1m1 0h2m1 0h1m1 0h2m-72 1h1m2 0h1m2 0h1m59 0h5m1 0h1m-84 1h1m1 0h1m54 0h1m6 0h1m1 0h2m11 0h1m2 0h1m1 0h2m2 0h2m-92 1h2m1 0h1m54 0h1m7 0h2m1 0h1m17 0h1m1 0h2m1 0h1m1 0h2m-101 1h1m3 0h1m2 0h1m65 0h2m18 0h2m1 0h1m1 0h2m1 0h1m-106 1h1m3 0h1m2 0h1m48 0h1m19 0h1m1 0h1m25 0h1m-112 1h1m1 0h1m3 0h4m1 0h1m52 0h1m17 0h2m1 0h1m-85 1h2m2 0h1m78 0h1m38 0h1m-124 1h1m83 0h1m37 0h1m1 0h1m-138 1h1m1 0h1m95 0h1m37 0h1m-141 1h1m1 0h1m1 0h1m1 0h1m93 0h3m21 0h1m22 0h1m2 0h1m-154 1h1m2 0h2m1 0h1m1 0h1m81 0h1m12 0h1m5 0h1m17 0h1m2 0h1m18 0h1m1 0h2m1 0h1m3 0h1m1 0h1m-162 1h1m1 0h2m80 0h1m7 0h1m1 0h1m9 0h1m8 0h1m4 0h3m2 0h1m1 0h1m1 0h1m2 0h1m1 0h1m3 0h1m4 0h1m10 0h1m2 0h2m3 0h2m1 0h1m-174 1h1m1 0h1m7 0h1m18 0h1m1 0h2m5 0h1m2 0h1m6 0h2m6 0h1m4 0h1m1 0h1m2 0h1m1 0h1m2 0h5m2 0h1m1 0h1m12 0h1m9 0h2m10 0h1m7 0h4m1 0h1m1 0h1m2 0h2m1 0h1m6 0h3m1 0h1m3 0h1m6 0h1m3 0h1m1 0h2m1 0h1m4 0h1m1 0h1m4 0h1m-180 1h2m1 0h1m25 0h3m1 0h1m5 0h2m1 0h1m3 0h1m1 0h1m1 0h1m4 0h1m1 0h1m4 0h1m1 0h2m1 0h1m1 0h3m6 0h2m25 0h2m8 0h2m13 0h1m2 0h1m9 0h1m1 0h2m5 0h1m15 0h1m4 0h1m1 0h2m1 0h1m-180 1h1m2 0h1m4 0h1m15 0h1m19 0h1m1 0h1m17 0h1m1 0h2m9 0h3m9 0h1m16 0h1m10 0h2m12 0h2m25 0h2m7 0h1m7 0h1m4 0h1m-174 1h1m1 0h1m2 0h1m9 0h2m3 0h1m18 0h1m1 0h1m11 0h1m4 0h1m11 0h1m12 0h2m18 0h1m6 0h2m9 0h3m40 0h1m7 0h1m-179 1h1m6 0h1m2 0h1m9 0h1m1 0h1m13 0h1m9 0h2m10 0h1m16 0h1m12 0h1m21 0h1m5 0h1m10 0h1m22 0h1m28 0h1m-181 1h1m4 0h1m6 0h2m6 0h2m6 0h2m8 0h1m9 0h3m7 0h1m9 0h1m41 0h1m1 0h1m3 0h1m8 0h1m42 0h1m10 0h1m-179 1h1m3 0h1m6 0h1m1 0h1m4 0h1m1 0h1m7 0h1m5 0h1m2 0h1m12 0h1m5 0h1m11 0h1m15 0h2m24 0h1m1 0h1m1 0h1m1 0h1m4 0h1m-120 1h2m10 0h5m15 0h2m13 0h1m6 0h1m12 0h1m3 0h1m9 0h1m28 0h2m2 0h1m1 0h3m28 0h2m2 0h1m13 0h1m2 0h1m-171 1h1m1 0h2m9 0h2m1 0h1m1 0h2m11 0h1m1 0h1m15 0h1m2 0h1m17 0h3m39 0h1m4 0h1m1 0h2m25 0h2m2 0h1m1 0h1m1 0h1m10 0h1m1 0h1m-169 1h1m3 0h1m2 0h1m3 0h2m1 0h2m1 0h2m5 0h1m1 0h2m2 0h1m2 0h2m14 0h1m1 0h1m1 0h1m1 0h1m1 0h1m1 0h1m3 0h1m8 0h1m1 0h1m4 0h2m1 0h1m5 0h1m1 0h2m3 0h1m2 0h1m5 0h1m8 0h6m27 0h2m5 0h1m12 0h2m1 0h1m-163 1h1m2 0h1m1 0h2m2 0h1m5 0h1m1 0h1m1 0h1m1 0h2m1 0h1m1 0h1m1 0h1m12 0h1m1 0h1m3 0h1m1 0h1m1 0h1m3 0h2m9 0h1m4 0h1m2 0h1m1 0h1m5 0h2m1 0h1m2 0h5m1 0h3m7 0h1m1 0h1m1 0h3m1 0h4m6 0h1m9 0h3m1 0h2m4 0h2m2 0h2m1 0h1m1 0h1m2 0h3m2 0h1m2 0h1m1 0h1m-173 1h1m2 0h2m2 0h1m4 0h1m9 0h1m1 0h1m1 0h1m1 0h2m2 0h1m2 0h1m12 0h1m1 0h1m8 0h1m2 0h2m1 0h1m12 0h1m3 0h2m8 0h1m1 0h1m2 0h1m1 0h1m1 0h1m11 0h2m2 0h1m1 0h1m2 0h1m6 0h1m12 0h3m6 0h3m6 0h1m2 0h1m1 0h1m2 0h1m1 0h1m1 0h1m-171 1h2m77 0h1m16 0h2m16 0h2m1 0h1m2 0h3m2 0h3m3 0h2m2 0h2m1 0h2m3 0h1m6 0h1m1 0h1m5 0h1m2 0h3m2 0h2m1 0h1m-169 1h1m6 0h1m70 0h1m17 0h1m17 0h1m1 0h1m1 0h1m-118 1h1m4 0h1m1 0h1m68 0h1m1 0h1m19 0h1m17 0h1m-112 1h2m69 0h1m1 0h1m18 0h1m16 0h2m-110 1h1m70 0h1m36 0h2m52 0h1m-169 1h1m4 0h2m70 0h1m23 0h1m12 0h1m1 0h1m52 0h1m-171 1h1m5 0h1m1 0h1m68 0h2m6 0h1m1 0h1m15 0h2m12 0h1m51 0h1m-169 1h1m4 0h2m70 0h1m5 0h1m1 0h1m17 0h3m10 0h1m51 0h1m-171 1h2m6 0h1m69 0h1m1 0h1m2 0h2m1 0h1m21 0h2m8 0h1m52 0h1m-170 1h1m4 0h1m1 0h1m72 0h1m3 0h1m21 0h1m9 0h1m51 0h1m-169 1h1m5 0h1m70 0h1m1 0h2m26 0h2m7 0h1m53 0h1m-173 1h2m7 0h1m68 0h1m1 0h1m1 0h1m28 0h2m6 0h1m51 0h1m-170 1h1m76 0h1m1 0h1m29 0h1m6 0h2m52 0h1m-172 1h1m6 0h1m70 0h1m32 0h3m4 0h1m51 0h1m-172 1h3m6 0h1m68 0h1m1 0h2m33 0h1m2 0h1m51 0h1m5 0h1m-175 1h1m5 0h2m68 0h3m1 0h1m33 0h2m59 0h1m-178 1h1m7 0h1m68 0h1m1 0h1m3 0h2m33 0h1m57 0h1m1 0h1m-101 1h2m5 0h1m29 0h1m1 0h1m1 0h1m-42 1h1m35 0h1m1 0h3m-40 1h1m7 0h2m26 0h1m3 0h1m-43 1h1m-2 1h1m1 0h1m11 0h2m27 0h1m-44 1h1m1 0h1m11 0h1m1 0h1m-14 1h1m11 0h1m1 0h1m1 0h1m11 0h1m11 0h1m2 0h1m-47 1h1m1 0h1m3 0h1m1 0h2m1 0h1m6 0h2m10 0h2m12 0h1m-45 1h3m4 0h1m4 0h1m7 0h2m7 0h2m12 0h1m-43 1h1m12 0h2m4 0h1m1 0h1m21 0h1m-44 1h1m19 0h1m3 0h1m2 0h1m14 0h1m-42 1h1m19 0h2m1 0h1m17 0h1m-42 1h1m19 0h1m1 0h1m11 0h2m5 0h2m-44 1h1m19 0h1m1 0h2m2 0h1m5 0h1m2 0h1m-35 1h1m6 0h1m18 0h1m1 0h1m-22 1h1m18 0h1m15 0h1m-43 1h1m7 0h1m34 0h1m-45 1h1m13 0h2m11 0h1m5 0h1m9 0h1m-45 1h3m11 0h1m12 0h2m4 0h2m9 0h1m-46 1h1m10 0h2m1 0h2m13 0h1m6 0h2m7 0h1m-45 1h2m9 0h1m1 0h1m25 0h1m5 0h1m-46 1h1m9 0h1m34 0h1m-47 1h1m1 0h1m6 0h2m2 0h1m26 0h2m2 0h2m-45 1h1m6 0h1m1 0h1m31 0h3m1 0h1m-48 1h1m2 0h1m41 0h2m-47 1h3m41 0h3m-46 1h1m45 0h1m-48 1h1m1 0h2m43 0h1m-47 1h2m1 0h1m42 0h1m-48 1h1m1 0h1m44 0h2m-48 1h1m45 0h1m1 0h1m-47 1h2m1 0h1m2 0h1m1 0h2m1 0h1m5 0h2m2 0h1m3 0h2m1 0h1m1 0h1m2 0h1m1 0h1m2 0h1m1 0h2m2 0h2m-47 1h1m2 0h1m1 0h1m2 0h1m1 0h1m2 0h1m3 0h1m1 0h3m3 0h1m1 0h2m1 0h1m2 0h1m1 0h1m1 0h2m1 0h1m1 0h1m2 0h1m-47 1h1m44 0h1m-46 1h1m44 0h1m1 0h1m-47 1h1m2 0h1m39 0h1m1 0h1m1 0h1m-47 1h1m1 0h1m44 0h1m-46 1h2m-1 1h1m1 0h1m30 0h1m10 0h1m-51 1h1m6 0h2m29 0h1m1 0h1m9 0h1m-52 1h1m9 0h4m23 0h1m2 0h1m10 0h1m-53 1h1m11 0h1m1 0h1m1 0h1m20 0h1m1 0h1m12 0h1m-52 1h1m12 0h1m20 0h1m2 0h1m12 0h1m1 0h1m-54 1h1m17 0h1m15 0h1m1 0h1m15 0h2m-54 1h1m18 0h1m11 0h3m1 0h1m15 0h1m2 0h1m-37 1h1m1 0h2m8 0h1m2 0h1m20 0h1m-56 1h2m1 0h1m16 0h2m1 0h1m6 0h1m1 0h2m16 0h2m-53 1h1m4 0h1m17 0h1m3 0h1m1 0h2m1 0h1m17 0h1m-51 1h1m4 0h1m20 0h1m1 0h2m1 0h1m18 0h1m3 0h1m2 0h1m-58 1h1m4 0h1m19 0h1m1 0h1m2 0h1m22 0h2m-54 1h1m3 0h2m19 0h1m23 0h2m2 0h1m2 0h1m-54 1h2m1 0h1m15 0h1m25 0h1m1 0h1m5 0h1m-58 1h1m5 0h1m1 0h1m1 0h1m9 0h1m3 0h1m22 0h2m1 0h1m5 0h1m-58 1h1m7 0h2m1 0h2m9 0h1m1 0h1m22 0h1m2 0h1m-52 1h1m2 0h1m10 0h1m30 0h2m-46 1h2m12 0h1m1 0h1m25 0h2m4 0h1m7 0h1m2 0h1m-58 1h1m7 0h1m4 0h1m23 0h1m1 0h1m15 0h2m1 0h1m-58 1h2m4 0h1m5 0h1m24 0h1m1 0h1m5 0h1m6 0h1m4 0h1m-55 1h1m4 0h1m2 0h1m41 0h1m-47 1h1m1 0h1m31 0h2m1 0h1m5 0h1m1 0h1m4 0h1m-56 1h2m3 0h2m31 0h1m1 0h2m6 0h2m5 0h1m-63 1h2m10 0h1m36 0h1m1 0h1m2 0h1m7 0h1m-61 1h1m6 0h1m1 0h1m38 0h4m7 0h1m-55 1h1m1 0h1m1 0h1m39 0h1m1 0h1m8 0h1m-63 1h3m2 0h1m1 0h1m1 0h1m1 0h1m40 0h1m1 0h1m7 0h1m-290 1h1m225 0h4m1 0h1m1 0h1m46 0h2m2 0h1m4 0h2m-65 1h1m2 0h2m1 0h1m49 0h2m1 0h1m3 0h1m1 0h1m-65 1h2m55 0h1m3 0h1m1 0h1m-65 1h1m2 0h1m60 0h1m-299 1h1m233 0h3m60 0h1m1 0h1m-301 1h1m233 0h1m1 0h2m59 0h1m2 0h1m-300 1h1m233 0h1m2 0h1m59 0h1m2 0h1m-302 1h1m236 0h1m1 0h1m59 0h2m-301 1h1m235 0h1m1 0h1m59 0h1m2 0h1m-302 1h1m297 0h1m2 0h1m-301 1h1m293 0h2m5 0h1m-250 1h2m54 0h2m130 0h1m52 0h1m7 0h1m-252 1h2m2 0h1m53 0h1m3 0h1m128 0h1m49 0h1m2 0h2m5 0h1m-253 1h1m1 0h1m1 0h1m7 0h1m47 0h1m1 0h1m131 0h1m49 0h1m7 0h1m-265 1h1m5 0h1m1 0h2m3 0h1m1 0h1m69 0h1m110 0h1m8 0h1m47 0h1m10 0h1m134 0h1m-402 1h2m1 0h1m3 0h1m1 0h1m2 0h1m73 0h1m1 0h1m4 0h1m103 0h1m9 0h1m2 0h1m44 0h2m9 0h1m132 0h1m1 0h1m-442 1h1m38 0h1m4 0h1m2 0h1m1 0h1m1 0h2m73 0h1m1 0h1m3 0h1m1 0h1m102 0h2m9 0h2m43 0h2m1 0h1m8 0h2m134 0h1m2 0h1m-446 1h1m38 0h1m3 0h2m4 0h1m4 0h1m10 0h3m60 0h1m1 0h1m2 0h2m2 0h1m99 0h1m55 0h1m2 0h1m9 0h1m1 0h1m135 0h1m1 0h1m-413 1h1m6 0h2m7 0h1m2 0h1m10 0h1m3 0h1m43 0h1m1 0h1m14 0h1m1 0h2m1 0h1m1 0h1m1 0h1m98 0h1m55 0h1m1 0h1m146 0h2m3 0h2m-443 1h1m24 0h1m8 0h1m12 0h1m9 0h1m1 0h2m1 0h1m12 0h2m28 0h1m3 0h1m3 0h1m1 0h1m8 0h1m2 0h1m2 0h1m1 0h1m97 0h2m16 0h1m39 0h1m13 0h1m121 0h1m3 0h1m6 0h1m2 0h4m-443 1h1m26 0h1m11 0h1m3 0h1m11 0h1m2 0h1m1 0h1m1 0h1m11 0h3m29 0h1m4 0h1m1 0h1m1 0h1m1 0h1m14 0h1m5 0h2m92 0h1m17 0h1m35 0h1m15 0h1m118 0h1m8 0h3m4 0h1m3 0h1m5 0h1m-420 1h1m1 0h2m6 0h1m1 0h1m1 0h1m1 0h1m5 0h1m3 0h1m1 0h2m1 0h1m13 0h1m2 0h1m1 0h1m27 0h1m2 0h2m3 0h1m1 0h1m8 0h2m4 0h1m5 0h1m2 0h1m3 0h1m86 0h1m1 0h1m51 0h1m17 0h1m127 0h2m4 0h1m2 0h1m6 0h1m-420 1h1m2 0h1m7 0h1m3 0h1m1 0h1m1 0h3m1 0h1m3 0h1m2 0h1m6 0h1m4 0h1m3 0h1m1 0h2m24 0h1m2 0h1m6 0h1m11 0h1m2 0h1m2 0h1m1 0h1m5 0h2m2 0h1m1 0h1m85 0h1m72 0h1m126 0h1m8 0h1m3 0h5m-426 1h1m3 0h2m3 0h1m13 0h1m4 0h1m12 0h2m1 0h1m2 0h1m1 0h1m3 0h1m1 0h1m18 0h1m4 0h1m1 0h1m2 0h1m2 0h1m1 0h1m2 0h2m8 0h1m3 0h2m1 0h1m8 0h2m1 0h1m87 0h1m19 0h1m33 0h1m16 0h1m1 0h1m114 0h1m6 0h3m3 0h1m4 0h2m4 0h3m-425 1h1m8 0h1m13 0h1m3 0h2m12 0h1m2 0h1m4 0h1m5 0h1m26 0h1m2 0h1m2 0h1m1 0h1m2 0h1m1 0h1m4 0h1m8 0h1m19 0h1m79 0h1m5 0h1m1 0h1m10 0h1m2 0h2m28 0h1m1 0h1m2 0h1m1 0h1m3 0h1m8 0h1m1 0h1m114 0h5m3 0h1m4 0h1m4 0h2m4 0h1m1 0h3m-453 1h1m26 0h2m3 0h1m1 0h1m2 0h1m9 0h1m2 0h1m1 0h1m8 0h1m4 0h5m6 0h1m27 0h1m1 0h1m2 0h1m1 0h3m1 0h1m1 0h5m2 0h1m1 0h1m1 0h1m3 0h1m5 0h1m16 0h1m5 0h1m77 0h1m1 0h1m1 0h2m1 0h2m1 0h1m1 0h2m2 0h1m2 0h1m25 0h2m2 0h3m1 0h1m1 0h3m4 0h1m1 0h1m3 0h1m113 0h1m1 0h9m5 0h3m1 0h2m5 0h1m-451 1h1m1 0h1m24 0h1m2 0h1m3 0h1m2 0h1m1 0h1m5 0h1m1 0h1m1 0h1m2 0h1m3 0h1m4 0h1m1 0h1m2 0h1m1 0h1m1 0h1m1 0h1m4 0h1m29 0h1m4 0h1m1 0h1m1 0h1m1 0h1m2 0h1m2 0h1m1 0h1m2 0h1m3 0h1m5 0h1m1 0h1m4 0h1m7 0h1m5 0h1m79 0h1m2 0h2m5 0h2m1 0h1m1 0h2m3 0h1m28 0h1m1 0h1m3 0h2m1 0h2m1 0h2m1 0h1m1 0h1m2 0h2m112 0h1m14 0h1m1 0h1m3 0h1m4 0h1m-422 1h3m1 0h1m5 0h1m1 0h2m2 0h1m1 0h2m2 0h1m4 0h1m1 0h1m4 0h3m2 0h1m1 0h1m1 0h1m3 0h2m3 0h1m32 0h2m1 0h1m1 0h1m1 0h2m2 0h2m1 0h2m1 0h3m7 0h2m3 0h1m1 0h1m5 0h1m1 0h1m3 0h1m1 0h1m74 0h1m6 0h1m15 0h1m1 0h1m23 0h1m19 0h1m5 0h1m123 0h2m1 0h1m4 0h1m1 0h2m2 0h3m-423 1h1m3 0h3m1 0h3m2 0h2m4 0h2m1 0h1m4 0h1m4 0h1m3 0h1m5 0h1m2 0h1m1 0h2m14 0h1m1 0h1m10 0h1m6 0h1m2 0h1m3 0h1m2 0h1m1 0h3m3 0h1m6 0h1m1 0h1m2 0h1m3 0h1m5 0h1m1 0h1m5 0h1m74 0h1m1 0h1m6 0h1m15 0h1m23 0h2m26 0h1m107 0h1m7 0h1m1 0h1m1 0h2m3 0h3m3 0h1m1 0h2m5 0h2m-425 1h1m8 0h1m3 0h2m2 0h1m3 0h1m1 0h1m4 0h1m4 0h1m2 0h1m4 0h1m1 0h2m1 0h1m2 0h1m2 0h1m9 0h1m12 0h1m1 0h1m5 0h1m2 0h1m7 0h1m1 0h1m3 0h1m6 0h1m1 0h2m2 0h1m10 0h1m81 0h1m7 0h2m18 0h1m20 0h1m18 0h1m1 0h1m113 0h1m7 0h1m6 0h1m3 0h2m4 0h1m1 0h1m3 0h3m-423 1h1m3 0h1m6 0h1m2 0h2m3 0h2m2 0h1m2 0h1m1 0h2m2 0h1m1 0h1m6 0h3m1 0h1m3 0h2m6 0h1m2 0h1m14 0h1m2 0h1m2 0h1m2 0h1m9 0h1m7 0h1m4 0h1m2 0h1m1 0h1m20 0h1m71 0h3m8 0h1m17 0h2m15 0h1m2 0h1m19 0h1m7 0h1m104 0h1m2 0h2m6 0h3m3 0h1m5 0h5m1 0h1m2 0h1m2 0h1m-428 1h1m4 0h1m2 0h1m1 0h1m4 0h1m7 0h1m3 0h1m4 0h2m1 0h1m2 0h1m6 0h1m1 0h1m1 0h1m14 0h1m15 0h3m1 0h1m2 0h2m10 0h1m1 0h1m4 0h1m3 0h1m1 0h1m3 0h1m20 0h1m1 0h1m69 0h1m1 0h1m8 0h1m17 0h1m17 0h1m1 0h1m19 0h1m8 0h1m107 0h1m3 0h5m2 0h1m2 0h1m9 0h4m1 0h1m2 0h3m-431 1h1m1 0h1m3 0h1m3 0h1m1 0h8m5 0h1m2 0h2m2 0h1m5 0h3m2 0h4m1 0h2m8 0h1m6 0h1m14 0h1m3 0h1m2 0h1m1 0h1m9 0h1m3 0h1m4 0h1m1 0h1m1 0h1m1 0h1m7 0h1m10 0h1m4 0h2m71 0h2m27 0h1m15 0h2m1 0h1m138 0h2m7 0h1m1 0h1m10 0h1m3 0h4m2 0h1m-432 1h1m1 0h1m4 0h1m2 0h1m2 0h2m8 0h1m4 0h2m1 0h1m2 0h1m4 0h1m2 0h2m3 0h2m1 0h1m7 0h1m1 0h1m1 0h1m2 0h1m5 0h1m12 0h1m4 0h1m9 0h2m2 0h1m6 0h1m4 0h1m4 0h1m1 0h1m1 0h1m8 0h1m1 0h1m3 0h1m1 0h1m69 0h1m1 0h1m12 0h1m15 0h2m11 0h3m31 0h1m108 0h3m2 0h1m5 0h1m1 0h1m8 0h1m1 0h5m-444 1h1m17 0h1m6 0h1m3 0h1m9 0h1m1 0h1m5 0h1m4 0h4m4 0h4m2 0h1m5 0h2m2 0h1m3 0h5m2 0h1m13 0h1m13 0h1m1 0h1m1 0h1m8 0h1m4 0h1m2 0h1m1 0h1m1 0h1m2 0h1m7 0h1m5 0h1m70 0h2m14 0h1m48 0h3m10 0h1m108 0h2m2 0h1m2 0h1m1 0h1m1 0h1m1 0h1m8 0h1m2 0h1m7 0h1m-448 1h1m28 0h1m2 0h2m3 0h2m1 0h1m9 0h1m2 0h2m1 0h4m10 0h1m7 0h1m1 0h2m2 0h1m2 0h2m8 0h1m3 0h1m13 0h1m12 0h3m5 0h1m6 0h1m12 0h1m1 0h1m1 0h1m67 0h2m30 0h1m10 0h2m18 0h1m13 0h2m115 0h1m1 0h1m2 0h2m8 0h1m1 0h1m7 0h1m-454 1h1m4 0h1m31 0h1m1 0h2m1 0h1m1 0h1m2 0h1m4 0h1m2 0h1m1 0h2m2 0h2m2 0h1m10 0h1m4 0h1m6 0h2m1 0h1m3 0h1m7 0h1m16 0h1m4 0h1m6 0h1m2 0h1m8 0h2m3 0h1m2 0h1m8 0h2m69 0h2m18 0h1m14 0h2m5 0h1m38 0h1m98 0h1m15 0h3m12 0h3m-421 1h1m1 0h2m6 0h1m1 0h2m1 0h1m4 0h4m4 0h1m2 0h1m2 0h3m2 0h1m2 0h1m3 0h1m2 0h2m4 0h1m1 0h1m1 0h1m1 0h2m1 0h2m1 0h1m1 0h1m1 0h1m6 0h1m3 0h1m9 0h2m2 0h1m2 0h1m6 0h1m1 0h1m1 0h1m1 0h1m1 0h1m3 0h1m1 0h1m3 0h3m1 0h1m6 0h1m1 0h1m1 0h1m1 0h1m1 0h1m64 0h2m18 0h2m14 0h1m5 0h1m135 0h1m3 0h4m8 0h1m15 0h1m1 0h1m5 0h2m-433 1h1m3 0h1m4 0h1m1 0h1m4 0h1m2 0h1m1 0h1m4 0h1m2 0h1m2 0h1m4 0h1m10 0h1m1 0h1m1 0h2m8 0h1m2 0h1m2 0h1m1 0h1m1 0h2m5 0h1m2 0h2m1 0h2m7 0h1m1 0h1m3 0h1m13 0h1m1 0h1m1 0h1m1 0h1m1 0h1m2 0h2m7 0h1m6 0h3m1 0h1m1 0h1m85 0h1m1 0h1m18 0h1m38 0h1m102 0h3m26 0h3m2 0h1m1 0h1m-434 1h1m1 0h1m3 0h1m2 0h1m3 0h1m6 0h2m1 0h1m2 0h1m3 0h1m2 0h1m11 0h1m2 0h1m3 0h1m2 0h1m2 0h1m4 0h1m1 0h1m1 0h1m2 0h2m1 0h4m5 0h1m1 0h3m1 0h1m10 0h1m12 0h1m1 0h1m6 0h1m5 0h4m4 0h2m4 0h2m1 0h1m2 0h4m87 0h1m11 0h3m22 0h2m17 0h1m102 0h1m14 0h1m6 0h3m2 0h2m1 0h2m1 0h1m1 0h1m1 0h1m-435 1h2m3 0h1m1 0h2m1 0h1m3 0h2m3 0h1m1 0h2m3 0h1m2 0h1m1 0h1m3 0h1m4 0h1m3 0h1m11 0h2m1 0h1m2 0h1m1 0h1m3 0h1m3 0h3m2 0h1m3 0h2m1 0h1m4 0h1m2 0h1m10 0h1m1 0h1m6 0h1m1 0h1m3 0h2m1 0h1m3 0h2m2 0h1m1 0h3m1 0h1m1 0h1m2 0h1m2 0h1m2 0h1m66 0h1m2 0h2m1 0h1m9 0h1m3 0h1m5 0h3m1 0h2m1 0h1m1 0h1m4 0h2m1 0h4m2 0h1m6 0h1m2 0h2m3 0h1m4 0h1m1 0h2m1 0h1m1 0h1m1 0h2m1 0h1m95 0h1m18 0h4m5 0h2m2 0h1m1 0h3m2 0h1m3 0h1m-434 1h1m3 0h1m1 0h1m4 0h1m4 0h1m41 0h2m1 0h3m1 0h1m1 0h1m4 0h1m9 0h1m1 0h1m1 0h1m1 0h1m2 0h1m2 0h1m6 0h1m2 0h1m6 0h1m1 0h1m3 0h1m1 0h4m3 0h1m2 0h1m2 0h1m1 0h1m1 0h4m3 0h1m69 0h1m1 0h2m1 0h1m9 0h1m1 0h3m2 0h1m3 0h1m1 0h2m1 0h1m1 0h2m1 0h3m1 0h1m5 0h3m8 0h3m5 0h1m2 0h1m3 0h2m1 0h1m1 0h1m1 0h1m1 0h1m95 0h1m16 0h4m6 0h1m2 0h1m6 0h1m1 0h2m-432 1h1m3 0h1m1 0h1m5 0h1m3 0h1m16 0h1m7 0h1m2 0h1m9 0h2m2 0h1m6 0h1m1 0h1m6 0h1m7 0h3m3 0h1m3 0h1m1 0h1m1 0h2m3 0h1m5 0h2m2 0h1m6 0h1m1 0h2m2 0h1m1 0h2m3 0h2m1 0h1m2 0h1m7 0h1m1 0h1m1 0h2m1 0h1m60 0h1m2 0h1m17 0h2m14 0h5m18 0h1m20 0h1m1 0h1m93 0h1m6 0h1m6 0h1m7 0h1m5 0h3m2 0h1m2 0h2m1 0h1m2 0h1m-430 1h1m1 0h1m1 0h1m1 0h3m3 0h1m12 0h1m1 0h1m3 0h1m3 0h1m4 0h1m1 0h1m10 0h2m8 0h1m8 0h1m5 0h1m2 0h1m2 0h1m4 0h1m1 0h1m3 0h1m3 0h1m3 0h1m2 0h2m1 0h1m1 0h1m4 0h4m1 0h2m3 0h2m1 0h1m1 0h1m2 0h1m4 0h2m1 0h1m2 0h1m65 0h4m16 0h1m15 0h1m1 0h1m2 0h2m38 0h1m94 0h1m13 0h1m13 0h1m5 0h1m1 0h1m1 0h1m1 0h1m-444 1h1m14 0h2m1 0h2m1 0h1m4 0h2m3 0h1m13 0h2m10 0h1m4 0h1m4 0h5m1 0h1m4 0h2m1 0h1m10 0h1m8 0h2m1 0h1m1 0h1m1 0h3m1 0h1m11 0h1m1 0h3m3 0h1m2 0h4m3 0h1m3 0h1m3 0h1m4 0h2m70 0h1m3 0h2m14 0h1m16 0h1m4 0h2m17 0h1m14 0h1m3 0h3m94 0h1m9 0h1m16 0h1m1 0h1m1 0h2m2 0h2m1 0h1m-442 1h1m25 0h1m1 0h2m1 0h1m7 0h1m2 0h2m3 0h3m4 0h2m4 0h1m9 0h1m1 0h1m4 0h3m7 0h1m14 0h1m3 0h1m2 0h2m6 0h1m5 0h3m2 0h1m1 0h1m3 0h1m6 0h1m5 0h2m2 0h1m3 0h1m4 0h1m2 0h1m63 0h1m2 0h1m14 0h1m24 0h1m30 0h1m1 0h1m5 0h1m102 0h2m4 0h2m5 0h1m5 0h1m1 0h1m2 0h2m3 0h1m2 0h1m-430 1h1m8 0h4m3 0h1m8 0h2m5 0h2m4 0h1m2 0h1m1 0h3m11 0h1m5 0h1m1 0h2m2 0h1m3 0h1m10 0h2m1 0h2m6 0h1m5 0h1m11 0h2m4 0h3m1 0h3m1 0h3m1 0h1m1 0h3m1 0h1m11 0h1m66 0h2m1 0h1m10 0h2m13 0h1m8 0h1m2 0h1m28 0h2m3 0h3m98 0h2m9 0h2m3 0h3m4 0h4m1 0h1m1 0h1m4 0h2m1 0h1m-431 1h2m4 0h3m1 0h1m1 0h1m4 0h1m7 0h2m4 0h2m1 0h1m7 0h1m12 0h1m11 0h2m1 0h1m10 0h1m3 0h1m1 0h1m1 0h3m1 0h2m8 0h1m8 0h1m2 0h4m1 0h3m2 0h1m4 0h2m2 0h1m3 0h2m2 0h2m1 0h2m69 0h1m1 0h3m9 0h1m13 0h1m1 0h1m9 0h1m27 0h1m8 0h1m95 0h3m1 0h3m8 0h1m3 0h1m1 0h2m6 0h2m11 0h1m-454 1h2m15 0h3m2 0h1m7 0h1m2 0h2m5 0h1m6 0h1m4 0h1m7 0h1m3 0h1m6 0h1m6 0h1m10 0h3m14 0h1m1 0h1m6 0h1m9 0h1m5 0h1m1 0h1m7 0h1m3 0h1m9 0h2m4 0h2m3 0h1m2 0h1m1 0h1m66 0h1m1 0h2m7 0h2m2 0h1m12 0h2m11 0h2m23 0h1m3 0h1m7 0h1m90 0h1m6 0h1m1 0h1m3 0h1m4 0h1m1 0h3m1 0h1m1 0h1m3 0h1m2 0h1m2 0h1m10 0h1m-435 1h3m6 0h1m4 0h1m4 0h1m24 0h1m3 0h1m1 0h2m5 0h1m4 0h3m3 0h2m2 0h1m13 0h1m1 0h1m7 0h1m4 0h1m19 0h1m3 0h2m2 0h2m1 0h2m3 0h4m2 0h1m4 0h3m77 0h1m16 0h1m14 0h2m22 0h1m11 0h1m94 0h1m4 0h1m2 0h1m5 0h1m6 0h2m1 0h1m2 0h2m2 0h1m7 0h1m-430 1h1m1 0h1m5 0h1m3 0h1m2 0h3m2 0h1m12 0h1m13 0h1m1 0h1m1 0h2m3 0h1m4 0h1m5 0h1m2 0h1m3 0h1m11 0h3m4 0h2m5 0h2m10 0h1m5 0h2m8 0h5m7 0h1m5 0h1m3 0h1m74 0h2m16 0h1m1 0h1m14 0h2m20 0h2m12 0h1m108 0h2m4 0h1m1 0h1m8 0h1m5 0h1m-433 1h2m1 0h1m1 0h2m6 0h1m3 0h1m1 0h1m3 0h1m31 0h1m1 0h2m2 0h1m2 0h1m2 0h1m1 0h2m1 0h1m2 0h2m2 0h1m13 0h4m1 0h2m3 0h1m1 0h3m2 0h1m3 0h2m3 0h3m13 0h1m1 0h1m1 0h6m4 0h1m4 0h1m60 0h1m12 0h1m1 0h2m14 0h1m17 0h3m17 0h3m13 0h1m93 0h1m3 0h1m5 0h3m1 0h2m1 0h1m2 0h1m1 0h1m4 0h3m8 0h2m-434 1h1m5 0h1m7 0h1m3 0h2m24 0h1m5 0h1m5 0h1m1 0h1m3 0h1m1 0h2m2 0h1m3 0h1m4 0h1m2 0h1m1 0h1m4 0h1m7 0h1m1 0h1m2 0h1m1 0h1m6 0h4m1 0h5m3 0h2m1 0h1m8 0h1m2 0h4m6 0h1m3 0h3m4 0h1m55 0h1m13 0h2m1 0h1m34 0h1m15 0h2m16 0h1m97 0h1m3 0h3m1 0h1m2 0h1m1 0h3m3 0h1m2 0h1m3 0h2m2 0h1m3 0h2m3 0h1m-438 1h2m1 0h4m1 0h2m8 0h1m26 0h1m9 0h1m2 0h1m6 0h2m3 0h1m1 0h1m5 0h2m6 0h1m7 0h1m1 0h1m1 0h2m3 0h1m1 0h1m2 0h1m1 0h1m2 0h2m3 0h1m3 0h1m1 0h1m1 0h1m8 0h1m2 0h1m8 0h1m1 0h1m1 0h1m63 0h1m13 0h2m36 0h1m14 0h1m1 0h4m12 0h1m91 0h1m2 0h1m2 0h1m3 0h1m2 0h1m2 0h1m9 0h3m5 0h2m1 0h1m7 0h1m-438 1h1m8 0h1m6 0h2m20 0h1m28 0h1m1 0h1m1 0h2m2 0h2m1 0h2m2 0h1m12 0h1m2 0h1m1 0h1m3 0h1m3 0h2m3 0h1m1 0h6m1 0h2m2 0h1m10 0h3m7 0h4m3 0h1m3 0h1m74 0h1m32 0h1m13 0h4m1 0h1m15 0h1m89 0h2m1 0h1m2 0h2m3 0h1m2 0h1m13 0h1m7 0h3m-430 1h1m6 0h1m52 0h1m7 0h3m3 0h2m1 0h1m2 0h1m18 0h2m6 0h1m2 0h1m1 0h1m2 0h1m2 0h1m1 0h3m11 0h2m1 0h3m7 0h1m1 0h1m1 0h2m79 0h1m10 0h1m24 0h1m1 0h1m11 0h4m14 0h1m89 0h1m1 0h1m1 0h1m1 0h1m1 0h1m3 0h1m1 0h1m1 0h1m1 0h1m10 0h1m1 0h2m5 0h1m-429 1h1m6 0h2m1 0h1m50 0h1m8 0h1m3 0h1m1 0h1m24 0h1m5 0h2m2 0h2m3 0h2m4 0h1m12 0h1m12 0h1m4 0h1m63 0h1m1 0h1m1 0h2m1 0h2m3 0h3m1 0h3m4 0h1m1 0h1m1 0h1m24 0h1m2 0h2m1 0h4m2 0h2m2 0h3m2 0h2m8 0h1m91 0h1m5 0h2m1 0h1m1 0h2m1 0h1m1 0h1m10 0h1m1 0h3m5 0h1m-431 1h1m9 0h1m53 0h2m5 0h1m5 0h3m11 0h1m15 0h1m1 0h2m1 0h1m3 0h1m28 0h2m3 0h4m62 0h2m1 0h1m1 0h2m1 0h1m2 0h4m2 0h2m5 0h1m1 0h2m1 0h1m24 0h1m8 0h1m1 0h1m1 0h1m2 0h2m1 0h2m2 0h1m1 0h2m3 0h2m88 0h3m6 0h1m1 0h1m1 0h1m1 0h2m3 0h1m6 0h4m1 0h1m1 0h1m-425 1h3m64 0h1m3 0h2m19 0h1m5 0h1m2 0h1m4 0h1m1 0h1m2 0h2m3 0h1m7 0h2m1 0h1m3 0h1m2 0h5m6 0h1m2 0h1m66 0h1m1 0h2m2 0h1m1 0h2m1 0h1m2 0h1m3 0h1m4 0h2m1 0h1m1 0h1m35 0h1m3 0h1m1 0h2m2 0h1m4 0h1m2 0h4m1 0h1m92 0h1m2 0h1m4 0h1m1 0h1m1 0h1m8 0h1m1 0h1m1 0h4m-424 1h1m1 0h1m36 0h1m28 0h3m3 0h2m16 0h2m5 0h1m7 0h1m8 0h1m1 0h1m9 0h1m1 0h4m6 0h1m3 0h2m3 0h1m66 0h1m13 0h1m1 0h1m9 0h1m29 0h2m8 0h1m2 0h1m15 0h1m96 0h1m5 0h3m3 0h1m4 0h1m1 0h2m17 0h2m-454 1h1m6 0h1m76 0h2m6 0h1m3 0h1m8 0h1m4 0h1m3 0h2m8 0h1m1 0h1m1 0h2m13 0h1m1 0h1m1 0h1m8 0h1m3 0h2m3 0h1m1 0h1m78 0h1m10 0h1m42 0h1m1 0h1m3 0h1m9 0h1m1 0h1m95 0h1m6 0h1m1 0h1m3 0h1m3 0h3m7 0h2m5 0h3m1 0h1m1 0h1m-449 1h1m79 0h1m1 0h2m1 0h2m4 0h1m6 0h1m5 0h1m2 0h1m13 0h1m7 0h1m5 0h4m1 0h2m2 0h1m6 0h1m1 0h2m3 0h1m1 0h1m1 0h1m64 0h1m6 0h6m55 0h1m1 0h1m15 0h1m85 0h1m7 0h1m6 0h3m5 0h3m1 0h1m1 0h2m10 0h3m3 0h1m-363 1h1m1 0h1m11 0h1m6 0h3m1 0h1m10 0h1m12 0h1m1 0h2m1 0h2m5 0h1m5 0h1m7 0h2m65 0h1m7 0h3m50 0h1m19 0h1m5 0h1m89 0h4m3 0h1m2 0h1m3 0h1m6 0h1m1 0h3m10 0h2m2 0h1m4 0h1m-365 1h4m9 0h1m9 0h2m7 0h1m3 0h1m2 0h1m8 0h4m1 0h1m2 0h1m3 0h1m5 0h1m1 0h3m5 0h1m127 0h1m17 0h1m1 0h1m5 0h1m88 0h1m1 0h1m3 0h1m1 0h1m4 0h1m6 0h4m15 0h1m2 0h1m1 0h1m-370 1h1m1 0h1m3 0h1m1 0h1m1 0h2m7 0h1m4 0h1m3 0h1m18 0h1m2 0h4m1 0h2m1 0h4m1 0h1m7 0h1m6 0h1m2 0h1m63 0h1m6 0h1m15 0h1m41 0h2m9 0h2m2 0h1m10 0h1m89 0h1m1 0h1m3 0h1m2 0h1m1 0h1m3 0h1m2 0h1m2 0h1m7 0h2m7 0h1m3 0h1m-367 1h2m1 0h1m1 0h1m1 0h2m12 0h1m1 0h1m22 0h2m1 0h1m3 0h2m1 0h2m8 0h4m6 0h1m65 0h1m1 0h1m4 0h2m14 0h1m1 0h1m42 0h1m10 0h2m104 0h1m6 0h1m3 0h1m1 0h1m1 0h1m10 0h2m10 0h1m1 0h1m-399 1h1m30 0h8m13 0h1m10 0h3m5 0h1m8 0h1m3 0h2m1 0h1m3 0h1m9 0h3m4 0h1m64 0h2m5 0h2m1 0h1m12 0h2m42 0h1m1 0h1m22 0h1m87 0h3m1 0h1m2 0h3m7 0h1m3 0h1m10 0h1m13 0h1m-354 1h1m4 0h1m7 0h2m1 0h2m1 0h1m2 0h1m2 0h1m13 0h3m4 0h1m2 0h1m6 0h2m68 0h1m7 0h1m1 0h2m10 0h2m59 0h1m9 0h1m89 0h1m2 0h2m3 0h1m11 0h1m2 0h2m5 0h3m-434 1h1m45 0h1m39 0h1m16 0h2m2 0h3m8 0h2m3 0h1m9 0h1m14 0h3m3 0h1m63 0h2m8 0h1m1 0h1m10 0h1m58 0h1m1 0h2m7 0h1m89 0h1m3 0h3m1 0h1m2 0h2m6 0h1m1 0h6m4 0h1m1 0h2m-353 1h3m17 0h1m2 0h1m11 0h2m8 0h2m1 0h1m1 0h1m14 0h1m1 0h1m2 0h1m63 0h1m1 0h2m3 0h1m3 0h1m1 0h2m9 0h1m47 0h2m6 0h1m5 0h3m4 0h1m89 0h5m3 0h1m2 0h1m2 0h1m5 0h1m1 0h2m1 0h1m6 0h2m1 0h1m-437 1h1m67 0h1m15 0h1m15 0h1m2 0h1m3 0h1m11 0h1m2 0h1m8 0h1m1 0h1m1 0h1m13 0h4m66 0h1m1 0h1m1 0h1m6 0h2m7 0h1m2 0h1m49 0h1m4 0h1m1 0h1m1 0h1m9 0h1m93 0h2m5 0h1m1 0h1m5 0h1m2 0h2m2 0h1m4 0h1m6 0h2m1 0h1m-442 1h1m46 0h1m19 0h1m35 0h1m6 0h2m3 0h1m16 0h1m16 0h1m68 0h4m1 0h1m4 0h1m2 0h3m4 0h1m53 0h1m7 0h2m6 0h1m2 0h1m91 0h2m1 0h2m4 0h1m5 0h1m1 0h2m1 0h4m3 0h1m6 0h1m3 0h1m1 0h1m-448 1h1m1 0h1m2 0h1m114 0h1m33 0h1m66 0h1m1 0h1m2 0h1m5 0h1m5 0h1m2 0h1m54 0h2m13 0h1m4 0h1m86 0h1m1 0h1m2 0h1m3 0h1m10 0h1m1 0h1m1 0h1m1 0h1m4 0h1m4 0h1m3 0h1m1 0h3m1 0h1m-449 1h4m113 0h1m1 0h1m28 0h2m71 0h2m15 0h1m1 0h1m56 0h2m6 0h2m9 0h1m88 0h1m1 0h1m3 0h1m13 0h2m2 0h1m2 0h2m5 0h4m1 0h1m-445 1h1m1 0h1m46 0h1m56 0h1m11 0h2m100 0h1m4 0h1m2 0h1m3 0h1m1 0h1m2 0h1m61 0h3m5 0h2m2 0h2m92 0h2m4 0h2m8 0h1m3 0h1m1 0h1m1 0h1m2 0h1m1 0h2m-365 1h1m2 0h1m146 0h1m3 0h6m2 0h1m1 0h1m2 0h1m1 0h1m57 0h1m2 0h2m3 0h1m1 0h3m2 0h1m2 0h1m89 0h2m3 0h1m1 0h1m6 0h1m1 0h1m3 0h1m2 0h1m1 0h1m3 0h1m-285 1h2m69 0h1m1 0h1m4 0h1m1 0h1m1 0h2m4 0h1m59 0h2m1 0h3m1 0h2m1 0h1m3 0h1m2 0h1m91 0h2m1 0h2m6 0h1m3 0h1m5 0h1m5 0h1m5 0h2m-394 1h1m185 0h2m63 0h2m14 0h1m93 0h1m9 0h3m1 0h1m3 0h1m5 0h2m4 0h1m-448 1h2m54 0h1m185 0h1m1 0h1m64 0h2m9 0h1m3 0h1m102 0h1m1 0h2m15 0h1m-449 1h1m229 0h1m12 0h2m65 0h1m12 0h1m2 0h1m92 0h1m10 0h1m17 0h1m-219 1h1m14 0h1m80 0h1m91 0h1m1 0h1m1 0h1m34 0h1m-143 1h1m105 0h1m1 0h1m-109 1h1m10 0h1m95 0h1m15 0h1m3 0h1m6 0h1m6 0h1m-328 1h1m196 0h1m91 0h1m1 0h1m2 0h1m2 0h1m12 0h1m1 0h1m1 0h1m4 0h1m3 0h1m-441 1h1m115 0h1m104 0h2m85 0h2m5 0h1m91 0h1m1 0h2m1 0h2m1 0h1m12 0h1m7 0h1m3 0h1m4 0h1m-445 1h1m219 0h1m83 0h1m102 0h1m1 0h3m3 0h1m15 0h1m1 0h2m-438 1h1m118 0h1m187 0h2m7 0h1m1 0h1m91 0h1m1 0h2m1 0h3m1 0h1m2 0h2m6 0h2m1 0h1m1 0h1m8 0h1m-455 1h1m8 0h1m1 0h1m116 0h1m106 0h1m81 0h1m2 0h1m102 0h3m1 0h2m2 0h1m2 0h1m4 0h1m2 0h1m1 0h1m-445 1h1m9 0h1m118 0h1m96 0h1m6 0h2m83 0h1m1 0h1m2 0h2m3 0h1m96 0h1m2 0h1m3 0h4m2 0h1m4 0h2m3 0h1m-437 1h1m214 0h2m1 0h1m2 0h1m1 0h1m83 0h1m4 0h4m1 0h1m95 0h3m4 0h1m3 0h1m2 0h1m5 0h1m4 0h4m-441 1h1m113 0h1m98 0h1m3 0h1m1 0h3m91 0h3m93 0h1m2 0h3m2 0h2m4 0h1m1 0h1m5 0h1m5 0h1m3 0h1m-443 1h1m116 0h1m6 0h1m1 0h1m12 0h3m2 0h1m77 0h1m89 0h1m3 0h1m93 0h1m5 0h2m1 0h4m2 0h1m1 0h1m2 0h2m5 0h1m1 0h1m-315 1h3m3 0h1m1 0h1m1 0h1m2 0h1m2 0h2m2 0h1m3 0h1m1 0h2m70 0h1m87 0h2m4 0h1m93 0h1m3 0h1m2 0h2m1 0h5m2 0h1m9 0h2m1 0h1m-323 1h4m7 0h1m22 0h3m63 0h2m92 0h1m1 0h2m97 0h3m5 0h3m1 0h1m1 0h1m3 0h1m4 0h1m1 0h1m2 0h1m-327 1h2m5 0h1m31 0h2m63 0h2m91 0h1m2 0h1m98 0h1m1 0h1m1 0h1m1 0h2m1 0h2m1 0h1m5 0h2m1 0h1m1 0h1m2 0h1m-129 1h1m3 0h1m98 0h1m1 0h1m2 0h1m1 0h1m4 0h3m6 0h1m1 0h3m-396 1h1m85 0h1m7 0h1m15 0h1m132 0h1m1 0h1m26 0h1m98 0h1m1 0h2m4 0h1m2 0h1m3 0h1m3 0h3m-296 1h1m11 0h1m7 0h1m1 0h1m1 0h1m1 0h1m1 0h1m39 0h4m58 0h1m13 0h1m30 0h1m99 0h1m5 0h1m1 0h1m2 0h1m1 0h2m2 0h2m5 0h3m-412 1h1m11 0h1m90 0h1m2 0h1m1 0h1m1 0h2m1 0h3m1 0h2m1 0h1m2 0h1m1 0h1m3 0h1m1 0h1m1 0h5m83 0h1m63 0h1m98 0h1m7 0h1m5 0h1m3 0h1m1 0h1m1 0h3m3 0h1m-407 1h1m5 0h1m66 0h1m2 0h1m3 0h1m4 0h1m3 0h1m1 0h1m2 0h2m1 0h2m1 0h1m1 0h3m5 0h2m1 0h1m1 0h2m8 0h2m45 0h3m104 0h1m109 0h1m8 0h2m-440 1h1m44 0h1m56 0h3m1 0h1m3 0h1m1 0h3m1 0h4m1 0h1m1 0h2m1 0h3m4 0h1m1 0h2m1 0h1m2 0h1m3 0h1m174 0h1m98 0h1m8 0h1m1 0h1m1 0h1m3 0h2m2 0h1m3 0h1m-447 1h1m2 0h1m38 0h1m4 0h1m55 0h1m3 0h1m3 0h1m1 0h1m6 0h1m5 0h2m10 0h2m181 0h1m100 0h1m8 0h1m3 0h3m3 0h2m2 0h1m-410 1h2m1 0h3m65 0h2m20 0h2m1 0h1m4 0h1m2 0h1m180 0h1m118 0h1m2 0h1m1 0h1m1 0h1m-448 1h1m3 0h1m32 0h1m4 0h1m63 0h2m11 0h1m10 0h1m1 0h1m6 0h1m1 0h1m11 0h3m165 0h1m118 0h1m5 0h1m1 0h1m-415 1h1m13 0h2m82 0h5m1 0h1m1 0h2m2 0h2m8 0h1m1 0h1m2 0h2m3 0h3m154 0h1m117 0h1m3 0h1m-442 1h1m1 0h1m37 0h2m76 0h3m8 0h2m4 0h1m1 0h1m5 0h3m7 0h3m6 0h2m49 0h1m106 0h1m115 0h2m3 0h1m-443 1h1m32 0h1m14 0h1m55 0h1m3 0h1m12 0h1m28 0h1m62 0h1m106 0h1m104 0h1m10 0h1m1 0h2m3 0h1m-475 1h1m32 0h1m30 0h1m68 0h1m5 0h1m12 0h2m11 0h1m11 0h1m4 0h1m12 0h1m48 0h2m211 0h3m1 0h1m5 0h1m2 0h2m1 0h1m-477 1h1m31 0h1m1 0h1m2 0h1m98 0h1m48 0h2m2 0h1m56 0h1m108 0h3m101 0h1m5 0h7m5 0h5m-488 1h1m4 0h1m30 0h2m41 0h2m16 0h2m1 0h1m1 0h2m11 0h1m23 0h1m45 0h2m8 0h2m24 0h1m6 0h1m2 0h2m18 0h1m25 0h1m5 0h1m15 0h2m55 0h1m2 0h2m6 0h1m12 0h1m12 0h2m22 0h1m1 0h2m1 0h1m1 0h1m10 0h2m12 0h1m32 0h2m-484 1h1m2 0h2m2 0h3m1 0h2m13 0h3m2 0h3m7 0h2m9 0h1m24 0h2m2 0h5m2 0h1m6 0h2m3 0h2m1 0h2m3 0h2m4 0h1m1 0h2m12 0h2m4 0h2m1 0h1m8 0h1m2 0h1m3 0h2m3 0h3m7 0h2m14 0h2m7 0h1m1 0h2m1 0h1m1 0h2m7 0h1m1 0h2m4 0h2m1 0h2m4 0h2m1 0h1m1 0h1m15 0h2m1 0h2m5 0h2m31 0h1m10 0h2m15 0h1m7 0h1m8 0h1m1 0h2m8 0h2m4 0h1m2 0h1m1 0h2m1 0h2m3 0h1m4 0h8m8 0h4m1 0h1m3 0h1m1 0h2m15 0h2m1 0h1m1 0h3m7 0h2m1 0h1m1 0h1m3 0h5m2 0h2m2 0h4m25 0h2m-480 1h1m4 0h1m4 0h1m13 0h1m1 0h1m1 0h1m2 0h1m4 0h2m2 0h1m1 0h1m2 0h4m1 0h1m1 0h2m2 0h5m1 0h4m2 0h4m1 0h1m2 0h2m5 0h1m1 0h1m1 0h3m1 0h1m1 0h1m2 0h1m1 0h1m1 0h1m1 0h1m2 0h2m3 0h1m4 0h3m1 0h2m1 0h2m2 0h1m1 0h1m1 0h1m1 0h1m2 0h2m1 0h4m2 0h1m1 0h2m1 0h1m2 0h2m1 0h2m1 0h1m1 0h2m5 0h1m1 0h2m7 0h1m1 0h1m1 0h1m2 0h1m1 0h3m1 0h1m1 0h1m2 0h1m1 0h1m2 0h3m3 0h3m2 0h2m1 0h1m5 0h1m4 0h2m2 0h1m1 0h4m1 0h4m1 0h2m1 0h1m5 0h1m1 0h3m2 0h1m1 0h3m1 0h2m1 0h4m1 0h2m2 0h1m1 0h3m1 0h1m1 0h1m2 0h2m2 0h1m6 0h2m6 0h2m1 0h4m1 0h3m1 0h1m2 0h4m1 0h1m1 0h1m1 0h1m2 0h1m1 0h1m2 0h1m1 0h1m1 0h1m1 0h2m2 0h2m1 0h1m4 0h1m2 0h1m2 0h4m1 0h1m1 0h1m8 0h8m4 0h2m2 0h1m1 0h1m2 0h1m4 0h3m1 0h4m1 0h1m4 0h1m1 0h1m3 0h5m2 0h1m3 0h1m1 0h1m1 0h1m1 0h1m2 0h1m2 0h2m1 0h1m1 0h2m1 0h2m1 0h2m3 0h2m3 0h1m1 0h3m5 0h5m-16 1h1m5 0h1m4 0h2m2 0h2"/><path stroke="#0efa18" d="M0 0m409 177h1m2 0h1m-99 1h1m5 0h1m7 0h1m10 0h3m1 0h4m3 0h1m3 0h2m1 0h2m16 0h1m1 0h2m4 0h1m1 0h1m5 0h2m17 0h1m-95 1h2m1 0h1m7 0h2m9 0h1m1 0h1m4 0h1m3 0h2m4 0h5m2 0h1m11 0h1m3 0h1m7 0h1m1 0h1m1 0h2m12 0h1m4 0h1m-98 1h1m4 0h2m8 0h1m18 0h1m1 0h4m4 0h1m1 0h6m2 0h1m2 0h1m5 0h1m1 0h2m3 0h1m4 0h5m11 0h2m2 0h3m-98 1h3m1 0h4m2 0h1m17 0h1m21 0h1m1 0h1m11 0h3m4 0h1m12 0h1m-84 1h3m8 0h1m14 0h3m23 0h1m10 0h2m18 0h1m4 0h1m7 0h1m-96 1h1m5 0h1m4 0h2m13 0h1m12 0h2m1 0h1m7 0h1m10 0h2m31 0h1m1 0h1m-91 1h1m19 0h2m11 0h1m1 0h1m40 0h1m-73 1h1m4 0h2m5 0h1m19 0h1m10 0h1m5 0h1m1 0h1m12 0h1m-69 1h2m31 0h1m12 0h2m6 0h1m13 0h2m6 0h1m5 0h1m1 0h1m1 0h1m7 0h1m-93 1h1m8 0h1m4 0h1m6 0h1m13 0h1m9 0h1m1 0h1m1 0h1m17 0h1m15 0h1m-49 1h2m11 0h2m16 0h3m13 0h1m5 0h1m-82 1h1m2 0h1m3 0h1m3 0h2m5 0h1m9 0h2m10 0h4m16 0h1m4 0h1m7 0h4m-77 1h1m3 0h1m5 0h4m9 0h1m4 0h3m9 0h3m26 0h1m4 0h5m-76 1h4m6 0h2m3 0h3m8 0h2m9 0h4m19 0h1m11 0h2m-74 1h2m1 0h3m10 0h1m1 0h1m7 0h2m7 0h7m17 0h2m5 0h1m-63 1h1m10 0h1m19 0h3m2 0h2m7 0h1m9 0h1m5 0h1m-61 1h1m4 0h1m23 0h3m27 0h2m-60 1h2m1 0h3m21 0h3m-27 1h2m22 0h2m-25 1h2m35 0h1m1 0h1m5 0h2m-40 1h1m12 0h2m12 0h2m9 0h3m-44 1h4m11 0h2m13 0h1m6 0h1m4 0h1m-41 1h1m12 0h3m13 0h1m6 0h1m-30 1h2m5 0h1m21 0h1m-33 1h1m1 0h6m-5 1h3m1 0h1m14 1h1m6 0h1m-9 1h2m6 0h1m-24 1h2m7 0h3m1 0h3m-16 1h3m6 0h6m-15 1h3m7 0h4m-14 1h3m7 0h5m-15 1h3m5 0h4m1 0h2m-15 1h2m5 0h4m-11 1h1m5 0h4m6 0h2m-19 1h3m3 0h4m7 0h1m-17 1h5m1 0h1m-7 1h2m-6 2h1m1 0h1m1 0h2m2 0h2m3 0h1m3 0h1m7 0h1m1 0h2m-31 1h3m7 0h2m4 0h1m13 0h2m-33 1h4m3 0h2m1 0h4m2 0h2m13 0h2m-31 1h1m3 0h5m-11 1h3m2 0h4m-9 1h2m3 0h4m6 0h1m-15 1h1m5 0h1m13 0h3m-24 1h3m19 0h1m-22 1h1m1 0h1m13 0h1m-14 1h1m1 0h1m11 0h1m-18 1h1m1 0h5m-8 1h9m15 0h1m7 0h1m-33 1h8m15 0h4m-27 1h6m1 0h1m16 0h4m-26 1h3m6 0h1m14 0h2m-25 1h1m7 0h1m-10 1h3m-2 1h4m-7 1h1m1 0h4m-6 1h6m-6 1h5m20 0h1m-25 1h5m1 0h1m18 0h1m-27 1h8m13 0h1m11 0h1m-34 1h8m12 0h3m10 0h1m-33 1h7m12 0h1m-21 1h8m11 0h2m-21 1h7m26 0h2m-35 1h8m26 0h1m-35 1h7m-7 1h8m2 0h1m-8 1h1m3 0h3m-2 1h3m-4 1h1m-2 1h2m26 0h2m-33 1h1m1 0h4m21 0h1m3 0h1m-32 1h5m20 0h1m1 0h2m-29 1h3m4 0h1m15 0h1m8 0h1m-33 1h3m4 0h1m3 0h1m20 0h1m-33 1h2m8 0h1m1 0h2m4 0h1m4 0h1m7 0h1m-32 1h1m12 0h2m3 0h2m11 0h2m-33 1h2m11 0h7m12 0h1m-33 1h2m11 0h6m-20 1h2m12 0h3m1 0h1m-19 1h2m22 0h1m8 0h1m-34 1h1m10 0h1m10 0h4m7 0h1m-34 1h2m5 0h2m1 0h1m12 0h5m5 0h1m-34 1h3m4 0h2m16 0h5m3 0h1m-34 1h5m21 0h5m1 0h1m-34 1h5m5 0h2m1 0h2m1 0h1m6 0h10m-37 1h3m1 0h6m1 0h1m3 0h4m1 0h2m1 0h1m1 0h13m1 0h2m-41 1h2m3 0h3m1 0h4m1 0h4m4 0h8m1 0h10m-49 1h1m3 0h1m4 0h2m1 0h3m26 0h7m6 0h3m-54 1h3m6 0h4m25 0h7m7 0h1m-66 1h1m22 0h3m3 0h3m17 0h4m3 0h1m-62 1h7m1 0h2m17 0h4m4 0h3m15 0h4m23 0h1m-87 1h1m4 0h11m17 0h4m4 0h4m15 0h1m24 0h1m6 0h1m-96 1h3m2 0h1m1 0h7m22 0h4m6 0h3m11 0h1m10 0h1m15 0h1m-89 1h3m4 0h3m27 0h3m8 0h4m8 0h2m34 0h1m4 0h2m-111 1h3m5 0h2m35 0h4m8 0h2m1 0h1m6 0h2m11 0h1m23 0h3m1 0h5m-114 1h3m43 0h3m13 0h1m2 0h4m12 0h1m26 0h1m1 0h10m-129 1h7m2 0h2m44 0h3m12 0h7m14 0h1m29 0h8m1 0h2m-137 1h11m49 0h3m13 0h5m15 0h1m32 0h4m3 0h5m-144 1h1m3 0h9m50 0h3m13 0h5m54 0h10m-153 1h2m3 0h1m3 0h5m54 0h3m12 0h3m1 0h3m54 0h5m1 0h2m1 0h3m-161 1h4m1 0h2m4 0h1m1 0h1m59 0h3m11 0h3m3 0h1m36 0h1m4 0h1m23 0h3m-166 1h7m70 0h3m18 0h1m34 0h1m4 0h1m1 0h1m23 0h3m4 0h1m-174 1h1m1 0h7m23 0h2m1 0h2m12 0h6m1 0h4m3 0h2m1 0h1m13 0h2m11 0h1m7 0h1m43 0h1m21 0h4m1 0h1m-170 1h5m14 0h3m8 0h5m2 0h1m9 0h1m1 0h2m3 0h4m1 0h1m4 0h1m11 0h2m21 0h2m29 0h1m16 0h1m18 0h3m1 0h1m4 0h1m-180 1h2m1 0h1m4 0h3m11 0h1m1 0h3m11 0h4m2 0h1m13 0h3m18 0h3m69 0h2m22 0h2m-178 1h2m8 0h2m9 0h1m4 0h1m11 0h4m3 0h1m20 0h2m12 0h4m5 0h1m61 0h2m27 0h1m-181 1h1m4 0h3m2 0h1m27 0h3m17 0h1m7 0h3m6 0h1m4 0h3m4 0h2m29 0h1m-113 1h2m3 0h1m2 0h1m15 0h1m8 0h1m7 0h1m27 0h2m3 0h3m3 0h3m22 0h1m5 0h2m4 0h2m55 0h1m-181 1h1m5 0h1m8 0h1m14 0h2m36 0h1m5 0h3m3 0h3m4 0h1m30 0h1m4 0h2m54 0h2m-181 1h3m27 0h3m18 0h2m16 0h1m5 0h1m4 0h4m34 0h1m3 0h2m55 0h2m-181 1h1m1 0h1m27 0h2m3 0h2m14 0h2m21 0h2m4 0h5m94 0h2m-182 1h1m8 0h3m8 0h5m4 0h2m1 0h2m2 0h12m1 0h1m3 0h1m5 0h1m5 0h8m3 0h4m2 0h1m1 0h2m1 0h2m11 0h3m3 0h4m1 0h1m57 0h1m10 0h2m-173 1h2m4 0h2m1 0h5m1 0h1m8 0h1m3 0h12m1 0h1m1 0h3m1 0h1m1 0h1m6 0h9m1 0h4m6 0h5m11 0h1m3 0h7m44 0h1m1 0h1m9 0h2m4 0h8m-174 1h4m1 0h9m3 0h1m1 0h1m5 0h2m1 0h12m3 0h8m7 0h12m6 0h1m1 0h6m1 0h1m11 0h2m1 0h3m1 0h1m7 0h2m32 0h6m9 0h1m3 0h9m-173 1h3m68 0h1m1 0h2m13 0h1m22 0h2m20 0h1m8 0h1m3 0h5m12 0h10m-180 1h1m6 0h1m1 0h1m70 0h2m12 0h3m21 0h1m51 0h3m3 0h3m-179 1h2m79 0h1m10 0h4m74 0h3m3 0h3m-179 1h3m87 0h3m7 0h1m17 0h1m51 0h3m3 0h3m-179 1h3m6 0h1m68 0h1m10 0h4m7 0h3m15 0h1m52 0h2m3 0h3m-179 1h2m7 0h1m68 0h1m10 0h2m10 0h2m69 0h1m4 0h2m-179 1h1m88 0h1m81 0h2m3 0h3m-179 1h2m7 0h1m76 0h1m1 0h1m15 0h1m66 0h2m3 0h3m-170 1h1m69 0h1m7 0h1m84 0h1m3 0h3m-171 1h1m69 0h3m90 0h2m3 0h3m-172 1h1m69 0h2m1 0h1m27 0h1m61 0h2m4 0h3m-172 1h2m68 0h1m32 0h1m59 0h1m5 0h3m-179 1h2m5 0h3m67 0h2m1 0h1m90 0h1m4 0h3m-179 1h1m6 0h1m1 0h1m67 0h2m1 0h1m91 0h1m3 0h3m-102 1h1m36 0h1m4 0h1m51 0h2m4 0h2m-172 1h1m69 0h1m5 0h1m34 0h1m51 0h3m5 0h1m-172 1h1m108 0h2m1 0h1m50 0h2m-95 1h1m5 0h2m1 0h1m29 0h1m-40 1h1m6 0h4m31 0h1m-43 1h2m7 0h1m2 0h1m22 0h3m-37 1h1m31 0h5m-36 1h1m29 0h4m-34 1h1m13 0h1m14 0h4m-36 1h1m15 0h1m15 0h2m10 0h1m-42 1h2m12 0h1m11 0h1m-27 1h4m1 0h2m8 0h2m2 0h1m21 0h1m-32 1h1m2 0h1m2 0h1m3 0h1m-2 1h3m19 0h1m-45 1h2m22 0h1m19 0h1m-45 1h2m-2 1h1m19 0h1m1 0h1m5 0h1m-29 1h2m17 0h4m4 0h1m-29 1h4m15 0h3m-22 1h3m14 0h4m-21 1h2m16 0h1m-19 1h1m35 0h2m8 0h1m-1 1h1m-47 1h1m10 0h1m25 0h1m-38 1h1m9 0h1m-10 1h1m44 0h1m-40 1h1m33 0h1m-37 1h4m37 0h1m-45 1h1m2 0h3m38 0h2m-47 1h5m41 0h1m-45 1h2m42 0h1m-49 1h1m47 0h2m-51 2h2m1 0h1m-4 1h4m2 0h1m1 0h2m6 0h5m5 0h3m6 0h2m1 0h1m4 0h1m6 0h1m-51 1h3m6 0h2m1 0h1m4 0h3m5 0h3m4 0h1m1 0h2m3 0h1m2 0h1m6 0h2m-51 1h2m46 0h4m-52 1h2m46 0h1m1 0h2m-53 1h4m41 0h2m1 0h1m3 0h1m-53 1h5m3 0h1m35 0h4m-48 1h3m39 0h5m5 0h1m-53 1h3m4 0h1m32 0h1m1 0h4m-47 1h3m41 0h1m9 0h1m-55 1h2m38 0h2m1 0h1m10 0h1m-55 1h1m36 0h1m3 0h1m12 0h1m-55 1h2m35 0h2m1 0h1m10 0h1m3 0h1m-56 1h1m19 0h1m17 0h1m12 0h2m2 0h1m-57 1h2m20 0h1m13 0h1m15 0h1m-53 1h3m21 0h1m11 0h1m14 0h2m-325 1h46m226 0h1m24 0h1m4 0h1m-302 1h45m250 0h3m4 0h1m1 0h1m23 0h1m-330 1h46m225 0h1m24 0h2m-312 1h3m1 0h8m1 0h61m211 0h1m28 0h2m27 0h1m-345 1h75m211 0h2m23 0h2m1 0h5m17 0h1m3 0h1m-341 1h10m1 0h11m1 0h43m1 0h2m1 0h4m212 0h3m6 0h1m13 0h1m1 0h3m2 0h5m14 0h1m9 0h1m-60 1h1m1 0h1m23 0h1m5 0h4m22 0h2m-327 1h2m264 0h1m20 0h2m11 0h5m8 0h1m1 0h2m7 0h3m-309 1h2m255 0h2m4 0h1m3 0h5m12 0h4m7 0h5m6 0h3m-327 1h2m16 0h1m247 0h1m2 0h1m5 0h2m7 0h5m14 0h5m8 0h1m7 0h2m-308 1h1m247 0h3m7 0h1m6 0h4m18 0h1m1 0h1m-308 1h1m17 0h1m247 0h3m14 0h2m23 0h1m1 0h1m3 0h1m-315 1h1m17 0h2m245 0h3m11 0h2m1 0h3m22 0h5m2 0h1m7 0h1m4 0h1m-328 1h1m16 0h3m246 0h3m11 0h2m27 0h2m4 0h1m12 0h1m-329 1h2m263 0h3m11 0h2m38 0h1m8 0h1m-329 1h1m17 0h1m248 0h1m10 0h2m32 0h2m14 0h1m-311 1h1m6 0h2m246 0h1m3 0h1m36 0h1m4 0h1m7 0h2m-310 1h1m1 0h2m2 0h1m247 0h1m45 0h1m8 0h1m-328 1h1m17 0h5m249 0h1m42 0h1m11 0h1m-328 1h1m16 0h6m4 0h2m242 0h2m42 0h1m12 0h1m-329 1h1m16 0h1m1 0h2m3 0h1m2 0h3m238 0h1m1 0h1m47 0h1m4 0h1m-324 1h1m16 0h1m1 0h3m1 0h2m3 0h1m234 0h1m2 0h4m50 0h1m1 0h3m1 0h1m1 0h1m-329 1h1m15 0h2m2 0h2m1 0h1m3 0h2m233 0h1m58 0h6m1 0h2m-331 1h1m17 0h2m2 0h1m5 0h2m233 0h1m60 0h3m3 0h1m-331 1h2m17 0h2m7 0h1m301 0h1m-331 1h2m23 0h2m1 0h2m51 0h1m2 0h2m177 0h1m1 0h2m-322 1h5m51 0h1m15 0h3m3 0h1m1 0h2m1 0h1m49 0h4m181 0h3m60 0h2m2 0h1m-386 1h1m1 0h2m52 0h1m16 0h2m1 0h6m1 0h1m48 0h5m1 0h2m1 0h1m175 0h3m3 0h2m56 0h1m4 0h1m-385 1h1m1 0h1m50 0h2m21 0h3m47 0h1m1 0h12m175 0h4m1 0h4m54 0h2m4 0h1m-383 1h1m50 0h1m19 0h1m1 0h3m48 0h14m175 0h3m4 0h3m51 0h1m2 0h1m-327 1h1m16 0h2m1 0h1m3 0h2m2 0h2m42 0h10m2 0h3m50 0h1m4 0h2m9 0h2m107 0h3m4 0h1m1 0h2m-340 1h1m1 0h2m2 0h1m1 0h2m1 0h2m1 0h7m1 0h2m1 0h2m1 0h3m1 0h3m1 0h2m2 0h2m1 0h1m1 0h1m3 0h1m1 0h2m2 0h2m1 0h2m1 0h8m1 0h6m1 0h1m4 0h12m1 0h2m35 0h1m2 0h1m1 0h10m5 0h4m1 0h1m1 0h1m43 0h2m5 0h2m1 0h8m107 0h4m7 0h1m59 0h1m-402 1h6m1 0h88m2 0h2m34 0h5m2 0h8m5 0h4m2 0h1m1 0h4m3 0h1m34 0h5m1 0h1m1 0h13m1 0h1m104 0h3m7 0h2m-339 1h1m1 0h1m1 0h2m2 0h1m2 0h1m1 0h1m1 0h1m1 0h1m1 0h2m2 0h1m1 0h8m2 0h1m1 0h1m1 0h1m1 0h4m1 0h4m1 0h7m2 0h2m5 0h2m4 0h8m3 0h8m2 0h1m27 0h1m7 0h3m1 0h5m1 0h1m2 0h3m1 0h1m1 0h6m4 0h1m4 0h2m32 0h20m1 0h5m103 0h2m69 0h1m134 0h1m-440 1h1m27 0h1m4 0h4m4 0h3m6 0h11m9 0h4m30 0h19m3 0h4m1 0h1m101 0h1m57 0h1m12 0h1m134 0h2m-441 1h1m31 0h4m6 0h2m6 0h12m1 0h1m4 0h6m28 0h21m3 0h3m3 0h5m1 0h1m93 0h2m13 0h2m55 0h1m134 0h2m1 0h1m-442 1h2m25 0h1m4 0h1m7 0h4m1 0h1m4 0h10m6 0h7m2 0h1m26 0h21m1 0h1m1 0h2m2 0h2m1 0h5m1 0h2m90 0h1m13 0h4m188 0h2m3 0h1m-449 1h3m2 0h2m26 0h2m3 0h1m6 0h3m1 0h2m4 0h10m5 0h9m1 0h2m25 0h6m1 0h1m1 0h14m6 0h1m3 0h6m91 0h1m14 0h3m38 0h1m15 0h1m-309 1h1m3 0h2m26 0h3m2 0h1m3 0h10m3 0h9m6 0h12m3 0h3m18 0h6m5 0h3m1 0h1m1 0h2m1 0h5m4 0h2m3 0h7m106 0h2m37 0h3m15 0h1m132 0h2m-444 1h2m31 0h1m5 0h5m1 0h3m1 0h2m2 0h7m1 0h1m4 0h1m1 0h11m5 0h1m19 0h7m6 0h1m6 0h13m1 0h5m2 0h2m106 0h2m37 0h2m14 0h2m133 0h3m-446 1h2m3 0h1m28 0h1m2 0h6m3 0h1m5 0h3m1 0h3m6 0h13m6 0h1m19 0h7m5 0h3m1 0h1m3 0h6m2 0h4m1 0h5m93 0h1m1 0h1m15 0h4m32 0h1m1 0h2m16 0h1m133 0h2m-444 1h1m26 0h1m8 0h7m1 0h3m1 0h1m7 0h3m1 0h2m1 0h6m1 0h4m1 0h3m4 0h2m16 0h1m2 0h3m1 0h2m4 0h3m1 0h5m1 0h5m4 0h2m3 0h5m7 0h3m83 0h3m15 0h4m30 0h4m17 0h2m125 0h2m4 0h2m-439 1h1m22 0h2m7 0h13m6 0h12m4 0h2m3 0h3m3 0h2m18 0h3m3 0h2m4 0h1m5 0h8m8 0h8m2 0h1m1 0h6m82 0h2m16 0h1m1 0h2m28 0h3m20 0h1m125 0h1m-432 1h2m18 0h1m1 0h6m3 0h13m6 0h12m4 0h4m1 0h5m1 0h3m2 0h1m15 0h3m3 0h2m4 0h1m6 0h4m1 0h3m3 0h2m1 0h19m81 0h3m5 0h2m4 0h1m1 0h2m34 0h1m6 0h2m5 0h1m1 0h1m1 0h1m3 0h1m122 0h2m1 0h1m-431 1h1m18 0h2m2 0h3m3 0h2m1 0h9m1 0h2m3 0h8m1 0h4m5 0h6m1 0h10m15 0h2m3 0h2m5 0h1m7 0h2m3 0h1m5 0h5m1 0h16m1 0h2m76 0h5m1 0h1m4 0h1m2 0h1m7 0h2m25 0h1m2 0h2m3 0h1m10 0h1m1 0h3m1 0h2m110 0h1m13 0h3m12 0h1m1 0h1m-447 1h1m16 0h3m4 0h3m1 0h2m3 0h5m1 0h1m3 0h2m1 0h3m1 0h4m3 0h2m7 0h4m3 0h6m17 0h4m1 0h4m1 0h1m3 0h1m7 0h1m8 0h5m3 0h1m2 0h1m1 0h1m1 0h5m1 0h5m75 0h5m17 0h3m1 0h1m23 0h4m5 0h1m5 0h1m2 0h1m3 0h2m2 0h1m124 0h2m12 0h1m-451 1h1m6 0h1m16 0h4m3 0h1m1 0h5m1 0h1m2 0h2m7 0h4m3 0h4m3 0h2m1 0h1m1 0h1m1 0h3m6 0h5m17 0h7m7 0h1m11 0h1m3 0h7m2 0h3m4 0h4m3 0h3m3 0h1m72 0h1m1 0h2m23 0h1m23 0h2m18 0h2m4 0h1m124 0h1m6 0h1m7 0h1m-448 1h3m16 0h5m7 0h1m9 0h2m2 0h1m1 0h4m1 0h4m5 0h5m1 0h2m7 0h4m17 0h3m1 0h6m4 0h3m1 0h2m5 0h3m1 0h6m1 0h1m4 0h3m1 0h5m3 0h5m1 0h5m95 0h3m22 0h1m18 0h2m110 0h3m9 0h1m1 0h1m12 0h1m-440 1h3m16 0h5m18 0h3m3 0h4m1 0h4m4 0h4m6 0h2m4 0h3m7 0h1m9 0h2m3 0h5m4 0h7m3 0h3m3 0h1m1 0h2m7 0h3m2 0h5m1 0h12m95 0h2m49 0h1m104 0h2m9 0h6m9 0h1m-420 1h6m12 0h2m2 0h3m5 0h2m4 0h2m3 0h6m5 0h3m2 0h4m6 0h4m8 0h2m1 0h2m1 0h2m4 0h3m1 0h5m1 0h5m4 0h3m1 0h2m3 0h3m3 0h14m1 0h2m96 0h2m39 0h1m127 0h3m16 0h2m-452 1h2m20 0h3m1 0h4m4 0h1m6 0h7m5 0h4m5 0h1m1 0h6m5 0h11m4 0h6m7 0h2m5 0h2m2 0h4m1 0h3m1 0h1m1 0h1m1 0h4m1 0h1m3 0h1m1 0h3m1 0h5m2 0h13m84 0h3m64 0h1m118 0h2m16 0h2m-451 1h1m20 0h2m3 0h3m5 0h1m8 0h5m5 0h2m9 0h2m7 0h8m1 0h3m4 0h5m8 0h1m5 0h2m3 0h8m6 0h4m7 0h4m6 0h8m1 0h4m2 0h1m69 0h1m12 0h3m62 0h2m112 0h2m4 0h1m-433 1h3m2 0h3m14 0h1m3 0h4m4 0h2m9 0h1m1 0h4m4 0h2m17 0h7m3 0h1m4 0h5m8 0h3m4 0h3m1 0h7m7 0h6m6 0h4m5 0h8m3 0h3m105 0h1m45 0h1m121 0h1m8 0h1m-445 1h3m2 0h1m1 0h1m12 0h4m1 0h6m1 0h3m13 0h5m1 0h4m4 0h1m7 0h2m1 0h5m3 0h1m1 0h3m5 0h2m8 0h2m5 0h13m5 0h8m6 0h2m3 0h1m1 0h2m1 0h7m1 0h5m88 0h1m13 0h5m43 0h1m112 0h2m7 0h2m7 0h2m-444 1h1m18 0h15m13 0h8m1 0h2m2 0h1m4 0h10m5 0h3m7 0h2m15 0h3m1 0h9m5 0h8m6 0h2m1 0h4m3 0h12m3 0h1m84 0h3m12 0h1m1 0h2m6 0h2m19 0h1m16 0h1m109 0h4m2 0h1m14 0h1m-444 1h1m2 0h1m1 0h1m12 0h17m5 0h1m1 0h1m4 0h2m3 0h2m11 0h10m6 0h3m5 0h1m1 0h3m6 0h2m4 0h3m4 0h6m6 0h6m1 0h2m4 0h5m6 0h2m1 0h8m3 0h2m68 0h2m15 0h1m23 0h3m18 0h2m110 0h2m1 0h1m12 0h3m-426 1h1m2 0h1m14 0h6m1 0h1m2 0h6m6 0h4m4 0h2m3 0h2m1 0h2m7 0h1m2 0h2m1 0h2m9 0h1m4 0h1m4 0h1m8 0h1m5 0h3m3 0h3m3 0h1m4 0h3m2 0h1m3 0h1m3 0h1m1 0h3m11 0h6m5 0h1m1 0h1m67 0h1m16 0h1m2 0h1m12 0h1m1 0h1m5 0h1m18 0h2m16 0h1m-314 1h1m3 0h2m13 0h1m1 0h3m6 0h1m1 0h4m1 0h2m1 0h1m1 0h4m4 0h2m1 0h4m1 0h4m7 0h1m13 0h2m1 0h2m19 0h3m14 0h8m3 0h1m1 0h1m3 0h1m13 0h6m3 0h1m103 0h6m1 0h1m18 0h3m154 0h1m-452 1h2m3 0h2m15 0h3m4 0h1m3 0h6m4 0h2m5 0h2m1 0h3m3 0h5m2 0h1m1 0h3m1 0h2m9 0h1m3 0h1m20 0h2m14 0h7m3 0h4m3 0h2m13 0h4m4 0h2m90 0h1m15 0h4m174 0h1m-451 1h2m2 0h3m14 0h3m1 0h1m2 0h1m6 0h3m4 0h3m15 0h3m3 0h9m2 0h1m4 0h1m5 0h3m18 0h1m7 0h2m6 0h6m3 0h3m4 0h3m5 0h1m7 0h2m4 0h2m66 0h1m8 0h8m5 0h5m8 0h1m7 0h1m7 0h6m9 0h4m6 0h1m6 0h1m124 0h2m5 0h2m1 0h3m1 0h1m-455 1h2m4 0h1m14 0h3m3 0h4m6 0h2m2 0h4m15 0h4m3 0h11m6 0h1m1 0h1m1 0h4m17 0h2m7 0h3m2 0h1m1 0h5m4 0h3m6 0h3m4 0h1m2 0h1m1 0h1m8 0h3m72 0h9m5 0h2m1 0h3m4 0h1m18 0h8m9 0h2m8 0h1m1 0h1m3 0h1m93 0h1m31 0h2m5 0h1m2 0h3m-454 1h2m3 0h3m12 0h3m1 0h1m1 0h5m6 0h3m2 0h2m17 0h2m12 0h2m8 0h1m4 0h3m7 0h1m5 0h1m2 0h2m3 0h1m2 0h3m3 0h3m2 0h2m3 0h4m7 0h1m9 0h2m9 0h1m4 0h1m120 0h1m19 0h2m127 0h2m5 0h1m4 0h1m-448 1h2m18 0h1m1 0h1m7 0h4m4 0h1m4 0h1m1 0h3m8 0h1m3 0h4m21 0h4m13 0h1m6 0h3m1 0h3m3 0h1m5 0h1m3 0h4m12 0h1m3 0h2m9 0h2m2 0h3m60 0h1m4 0h1m72 0h4m1 0h1m122 0h5m1 0h1m3 0h1m2 0h1m-451 1h2m2 0h1m1 0h1m26 0h3m1 0h2m7 0h4m8 0h4m1 0h4m10 0h1m9 0h6m17 0h1m1 0h1m10 0h1m6 0h1m3 0h3m11 0h3m1 0h3m11 0h1m1 0h3m60 0h1m35 0h2m1 0h1m5 0h1m15 0h1m1 0h1m14 0h2m4 0h1m92 0h1m28 0h1m1 0h1m2 0h2m4 0h5m-454 1h3m31 0h1m4 0h1m7 0h2m14 0h4m11 0h1m8 0h7m16 0h3m5 0h2m16 0h1m12 0h5m15 0h1m1 0h2m59 0h2m19 0h1m14 0h3m7 0h1m15 0h2m15 0h1m96 0h1m40 0h2m3 0h1m-454 1h2m36 0h1m24 0h1m12 0h2m10 0h2m1 0h3m1 0h1m3 0h2m9 0h3m4 0h1m3 0h1m21 0h1m7 0h1m5 0h1m13 0h1m59 0h3m33 0h2m7 0h2m15 0h3m19 0h1m91 0h1m10 0h2m22 0h1m9 0h2m-455 1h3m4 0h1m11 0h1m11 0h1m8 0h3m35 0h2m13 0h4m5 0h1m1 0h3m10 0h2m2 0h2m12 0h2m4 0h1m3 0h2m10 0h3m11 0h3m57 0h3m43 0h1m17 0h3m18 0h1m101 0h3m10 0h1m10 0h3m-440 1h1m1 0h1m23 0h2m8 0h2m10 0h1m5 0h1m19 0h2m11 0h5m4 0h5m10 0h5m13 0h7m5 0h1m10 0h4m2 0h3m1 0h2m3 0h2m57 0h3m31 0h1m12 0h1m2 0h1m14 0h2m19 0h1m93 0h3m3 0h3m6 0h1m3 0h1m10 0h2m-438 1h2m23 0h4m6 0h2m11 0h1m24 0h4m11 0h3m5 0h5m11 0h4m12 0h8m23 0h4m3 0h2m57 0h4m15 0h1m14 0h1m14 0h1m17 0h2m18 0h1m94 0h3m11 0h6m4 0h2m2 0h2m7 0h1m-444 1h1m23 0h3m6 0h2m1 0h1m35 0h4m10 0h3m6 0h6m9 0h5m13 0h5m33 0h1m58 0h3m31 0h1m32 0h2m111 0h4m13 0h4m3 0h8m-438 1h1m13 0h1m1 0h1m9 0h3m3 0h3m39 0h2m7 0h1m6 0h1m1 0h1m2 0h1m4 0h5m4 0h1m2 0h3m14 0h2m17 0h1m18 0h3m2 0h1m52 0h2m30 0h1m1 0h2m33 0h2m111 0h3m9 0h1m4 0h2m3 0h4m3 0h2m1 0h1m1 0h1m-442 1h1m12 0h5m9 0h3m2 0h3m34 0h1m5 0h1m2 0h2m1 0h3m6 0h2m8 0h7m1 0h1m4 0h1m3 0h3m27 0h2m18 0h2m2 0h2m52 0h1m31 0h3m19 0h2m126 0h3m9 0h2m9 0h2m7 0h1m1 0h1m-441 1h2m11 0h1m13 0h2m3 0h1m24 0h1m7 0h1m1 0h2m10 0h2m1 0h1m15 0h7m3 0h1m2 0h3m3 0h2m3 0h2m10 0h1m1 0h1m26 0h2m2 0h1m56 0h2m16 0h2m11 0h3m21 0h2m31 0h1m94 0h2m5 0h2m1 0h2m-371 1h1m8 0h1m8 0h1m12 0h1m15 0h11m1 0h2m5 0h1m1 0h3m2 0h3m11 0h2m25 0h3m5 0h1m52 0h4m16 0h1m10 0h3m21 0h3m14 0h1m110 0h2m6 0h2m1 0h3m-393 1h2m35 0h1m5 0h1m16 0h1m1 0h2m3 0h16m4 0h4m4 0h1m4 0h2m30 0h1m4 0h2m3 0h3m51 0h4m26 0h1m1 0h2m21 0h1m1 0h1m31 0h1m87 0h1m5 0h1m7 0h1m3 0h1m-419 1h2m18 0h1m43 0h1m23 0h4m2 0h11m1 0h6m1 0h5m40 0h1m8 0h2m54 0h5m1 0h1m13 0h1m41 0h1m13 0h2m4 0h1m6 0h1m88 0h2m10 0h1m4 0h1m-329 1h2m1 0h8m1 0h3m1 0h3m2 0h5m43 0h1m4 0h2m1 0h1m55 0h3m4 0h1m2 0h1m17 0h1m40 0h1m11 0h1m7 0h1m97 0h1m1 0h1m4 0h3m-421 1h3m89 0h1m2 0h6m3 0h5m4 0h2m1 0h1m3 0h2m15 0h1m22 0h5m59 0h2m4 0h1m7 0h2m5 0h1m5 0h1m40 0h2m20 0h1m84 0h1m10 0h4m5 0h3m6 0h1m19 0h1m-449 1h3m80 0h2m11 0h5m4 0h5m6 0h2m1 0h3m23 0h6m10 0h2m1 0h2m57 0h4m15 0h1m8 0h2m58 0h1m1 0h2m84 0h1m10 0h5m3 0h3m-425 1h1m3 0h2m79 0h6m9 0h4m6 0h3m11 0h1m10 0h1m7 0h1m1 0h1m3 0h6m10 0h1m3 0h1m57 0h5m14 0h1m8 0h1m44 0h1m13 0h1m3 0h1m95 0h6m3 0h3m-422 1h1m81 0h1m2 0h1m11 0h2m7 0h2m12 0h2m9 0h1m14 0h6m1 0h1m6 0h1m62 0h5m22 0h3m48 0h1m13 0h1m93 0h6m3 0h5m5 0h1m15 0h1m-445 1h2m95 0h2m20 0h1m21 0h1m5 0h1m2 0h2m1 0h3m67 0h4m22 0h3m63 0h1m92 0h3m1 0h2m5 0h6m-425 1h2m95 0h1m21 0h1m5 0h1m1 0h1m11 0h2m1 0h2m2 0h1m2 0h2m72 0h3m22 0h3m39 0h1m17 0h1m96 0h1m1 0h2m4 0h2m3 0h6m25 0h1m-449 1h3m93 0h1m10 0h1m18 0h2m17 0h1m1 0h2m11 0h1m60 0h2m1 0h1m22 0h2m56 0h3m99 0h3m1 0h2m3 0h3m1 0h2m23 0h1m1 0h2m-450 1h3m1 0h1m80 0h1m1 0h1m2 0h1m12 0h1m54 0h3m61 0h1m81 0h5m100 0h6m1 0h3m3 0h1m26 0h1m-450 1h3m1 0h1m98 0h2m7 0h1m6 0h2m21 0h1m16 0h2m61 0h1m22 0h1m2 0h1m42 0h1m11 0h6m7 0h1m91 0h2m3 0h7m1 0h3m-423 1h2m1 0h1m97 0h1m55 0h1m131 0h4m9 0h2m1 0h2m8 0h1m87 0h1m9 0h11m-424 1h1m3 0h1m96 0h1m6 0h2m110 0h1m13 0h1m55 0h4m8 0h1m12 0h1m87 0h1m9 0h2m2 0h6m-316 1h2m16 0h1m31 0h1m133 0h1m2 0h2m9 0h1m8 0h2m92 0h3m1 0h2m4 0h5m6 0h1m7 0h1m-313 1h3m3 0h1m2 0h1m85 0h1m5 0h2m67 0h1m4 0h1m13 0h3m92 0h5m3 0h5m13 0h4m-435 1h1m102 0h1m4 0h1m38 0h1m1 0h2m65 0h1m11 0h2m6 0h1m55 0h1m18 0h1m95 0h4m1 0h5m13 0h6m5 0h1m-298 1h3m3 0h1m77 0h5m2 0h1m76 0h1m88 0h2m5 0h10m1 0h1m3 0h1m6 0h2m3 0h3m-288 1h1m65 0h1m12 0h5m1 0h1m55 0h2m10 0h1m98 0h1m5 0h13m2 0h2m5 0h1m-436 1h1m120 0h1m98 0h1m6 0h2m5 0h1m1 0h2m58 0h4m17 0h1m96 0h8m1 0h3m3 0h1m-430 1h2m1 0h1m117 0h1m98 0h2m15 0h2m58 0h2m13 0h2m4 0h1m96 0h6m3 0h3m2 0h1m-430 1h1m3 0h2m114 0h1m99 0h3m8 0h1m4 0h4m59 0h1m11 0h3m4 0h1m88 0h2m5 0h6m5 0h3m-428 1h6m114 0h1m32 0h1m66 0h4m14 0h3m62 0h1m14 0h1m89 0h1m1 0h1m1 0h9m5 0h3m13 0h3m-445 1h5m46 0h1m68 0h1m99 0h3m78 0h2m107 0h11m4 0h5m11 0h5m-445 1h1m2 0h1m214 0h3m12 0h1m175 0h1m1 0h10m1 0h7m11 0h3m-444 1h2m1 0h2m214 0h3m12 0h3m82 0h1m93 0h1m1 0h15m12 0h1m-442 1h4m114 0h2m98 0h3m12 0h2m82 0h2m96 0h14m18 0h2m-450 1h1m2 0h3m113 0h2m98 0h3m10 0h4m83 0h1m92 0h2m1 0h15m-430 1h2m1 0h3m114 0h1m97 0h3m10 0h4m84 0h2m88 0h1m3 0h2m1 0h2m1 0h12m3 0h1m6 0h1m7 0h1m-449 1h3m1 0h1m212 0h3m10 0h4m74 0h1m10 0h1m91 0h1m7 0h12m1 0h3m5 0h1m-441 1h1m117 0h2m97 0h3m9 0h4m76 0h1m110 0h15m4 0h1m-322 1h2m97 0h3m8 0h4m189 0h2m2 0h6m2 0h1m1 0h1m1 0h2m-436 1h1m44 0h1m167 0h4m7 0h4m88 0h1m100 0h2m4 0h4m6 0h2m6 0h2m-446 1h1m1 0h1m45 0h1m1 0h1m165 0h1m1 0h1m7 0h4m90 0h1m99 0h3m4 0h2m7 0h3m4 0h1m-440 1h1m45 0h1m176 0h3m79 0h1m109 0h4m5 0h2m7 0h4m-442 1h2m215 0h1m1 0h2m6 0h3m91 0h1m98 0h2m7 0h1m7 0h5m-442 1h3m2 0h1m114 0h1m10 0h12m6 0h1m2 0h5m60 0h3m5 0h1m1 0h2m92 0h1m108 0h1m5 0h5m-440 1h4m45 0h1m69 0h1m3 0h2m1 0h2m3 0h1m1 0h1m1 0h1m1 0h1m1 0h2m6 0h1m5 0h1m2 0h1m59 0h2m95 0h1m105 0h2m8 0h2m4 0h6m2 0h1m-442 1h2m45 0h1m76 0h2m87 0h4m95 0h2m4 0h1m99 0h3m7 0h1m5 0h4m3 0h2m-445 1h1m2 0h2m155 0h1m54 0h3m97 0h1m4 0h2m99 0h1m7 0h1m8 0h1m3 0h2m-445 1h2m1 0h2m155 0h5m51 0h3m103 0h1m96 0h1m1 0h1m4 0h1m1 0h4m8 0h1m1 0h1m-441 1h2m47 0h1m109 0h4m51 0h3m201 0h1m1 0h1m2 0h4m1 0h2m-394 1h1m7 0h1m115 0h4m2 0h1m5 0h1m87 0h1m2 0h1m57 0h1m99 0h5m3 0h2m1 0h1m-431 1h1m30 0h1m2 0h1m5 0h1m1 0h3m87 0h2m6 0h1m4 0h1m6 0h1m1 0h2m1 0h1m1 0h3m3 0h1m89 0h2m1 0h1m2 0h2m56 0h1m98 0h7m1 0h5m5 0h1m5 0h3m-538 1h1m91 0h2m30 0h1m8 0h1m2 0h2m62 0h1m1 0h1m1 0h1m9 0h3m1 0h3m3 0h2m7 0h1m3 0h5m11 0h1m1 0h1m156 0h1m98 0h10m1 0h3m3 0h2m2 0h6m-539 1h2m92 0h1m30 0h1m7 0h2m2 0h1m56 0h1m5 0h3m1 0h1m10 0h1m14 0h1m74 0h3m205 0h8m3 0h1m9 0h3m1 0h1m-538 1h1m93 0h1m38 0h4m61 0h3m102 0h4m105 0h1m100 0h8m1 0h3m3 0h1m4 0h2m-446 1h2m3 0h1m37 0h2m95 0h1m73 0h4m105 0h2m98 0h3m2 0h13m4 0h1m-406 1h1m100 0h1m72 0h3m106 0h2m99 0h1m4 0h12m3 0h3m1 0h1m-449 1h1m155 0h1m57 0h3m106 0h2m100 0h2m1 0h12m5 0h5m-450 1h1m3 0h1m40 0h1m60 0h1m32 0h1m73 0h3m108 0h1m101 0h13m6 0h5m-406 1h2m167 0h2m108 0h3m100 0h1m1 0h10m8 0h4m-450 1h1m2 0h1m209 0h2m107 0h4m105 0h1m1 0h5m7 0h5m-237 1h1m-246 1h2m93 0h1m255 0h1m-415 1h3m3 0h2m1 0h5m1 0h2m3 0h10m1 0h2m1 0h5m1 0h3m1 0h3m1 0h2m1 0h2m3 0h1m5 0h2m13 0h2m1 0h3m89 0h1m105 0h1m10 0h1m18 0h1m104 0h2m61 0h1m16 0h1m-409 1h1m3 0h2m7 0h2m9 0h1m24 0h2m2 0h5m3 0h1m5 0h1m4 0h1m13 0h4m3 0h1m2 0h1m5 0h1m5 0h2m10 0h1m2 0h1m8 0h1m10 0h1m10 0h1m1 0h1m1 0h2m1 0h1m3 0h1m1 0h1m2 0h1m1 0h1m1 0h2m9 0h2m2 0h1m1 0h5m7 0h2m6 0h1m9 0h5m5 0h2m19 0h1m3 0h1m1 0h1m5 0h2m9 0h2m15 0h1m7 0h1m8 0h1m1 0h2m1 0h1m1 0h1m1 0h1m2 0h2m2 0h1m1 0h4m1 0h2m1 0h2m6 0h1m1 0h8m8 0h4m5 0h1m1 0h2m15 0h4m1 0h1m9 0h2m1 0h3m3 0h1m3 0h1m2 0h2m2 0h1m4 0h1m14 0h1m-470 1h1m468 0h4m-2 1h1m1 0h1m9 0h1m-13 1h1"/></g></svg>
</body></html>
